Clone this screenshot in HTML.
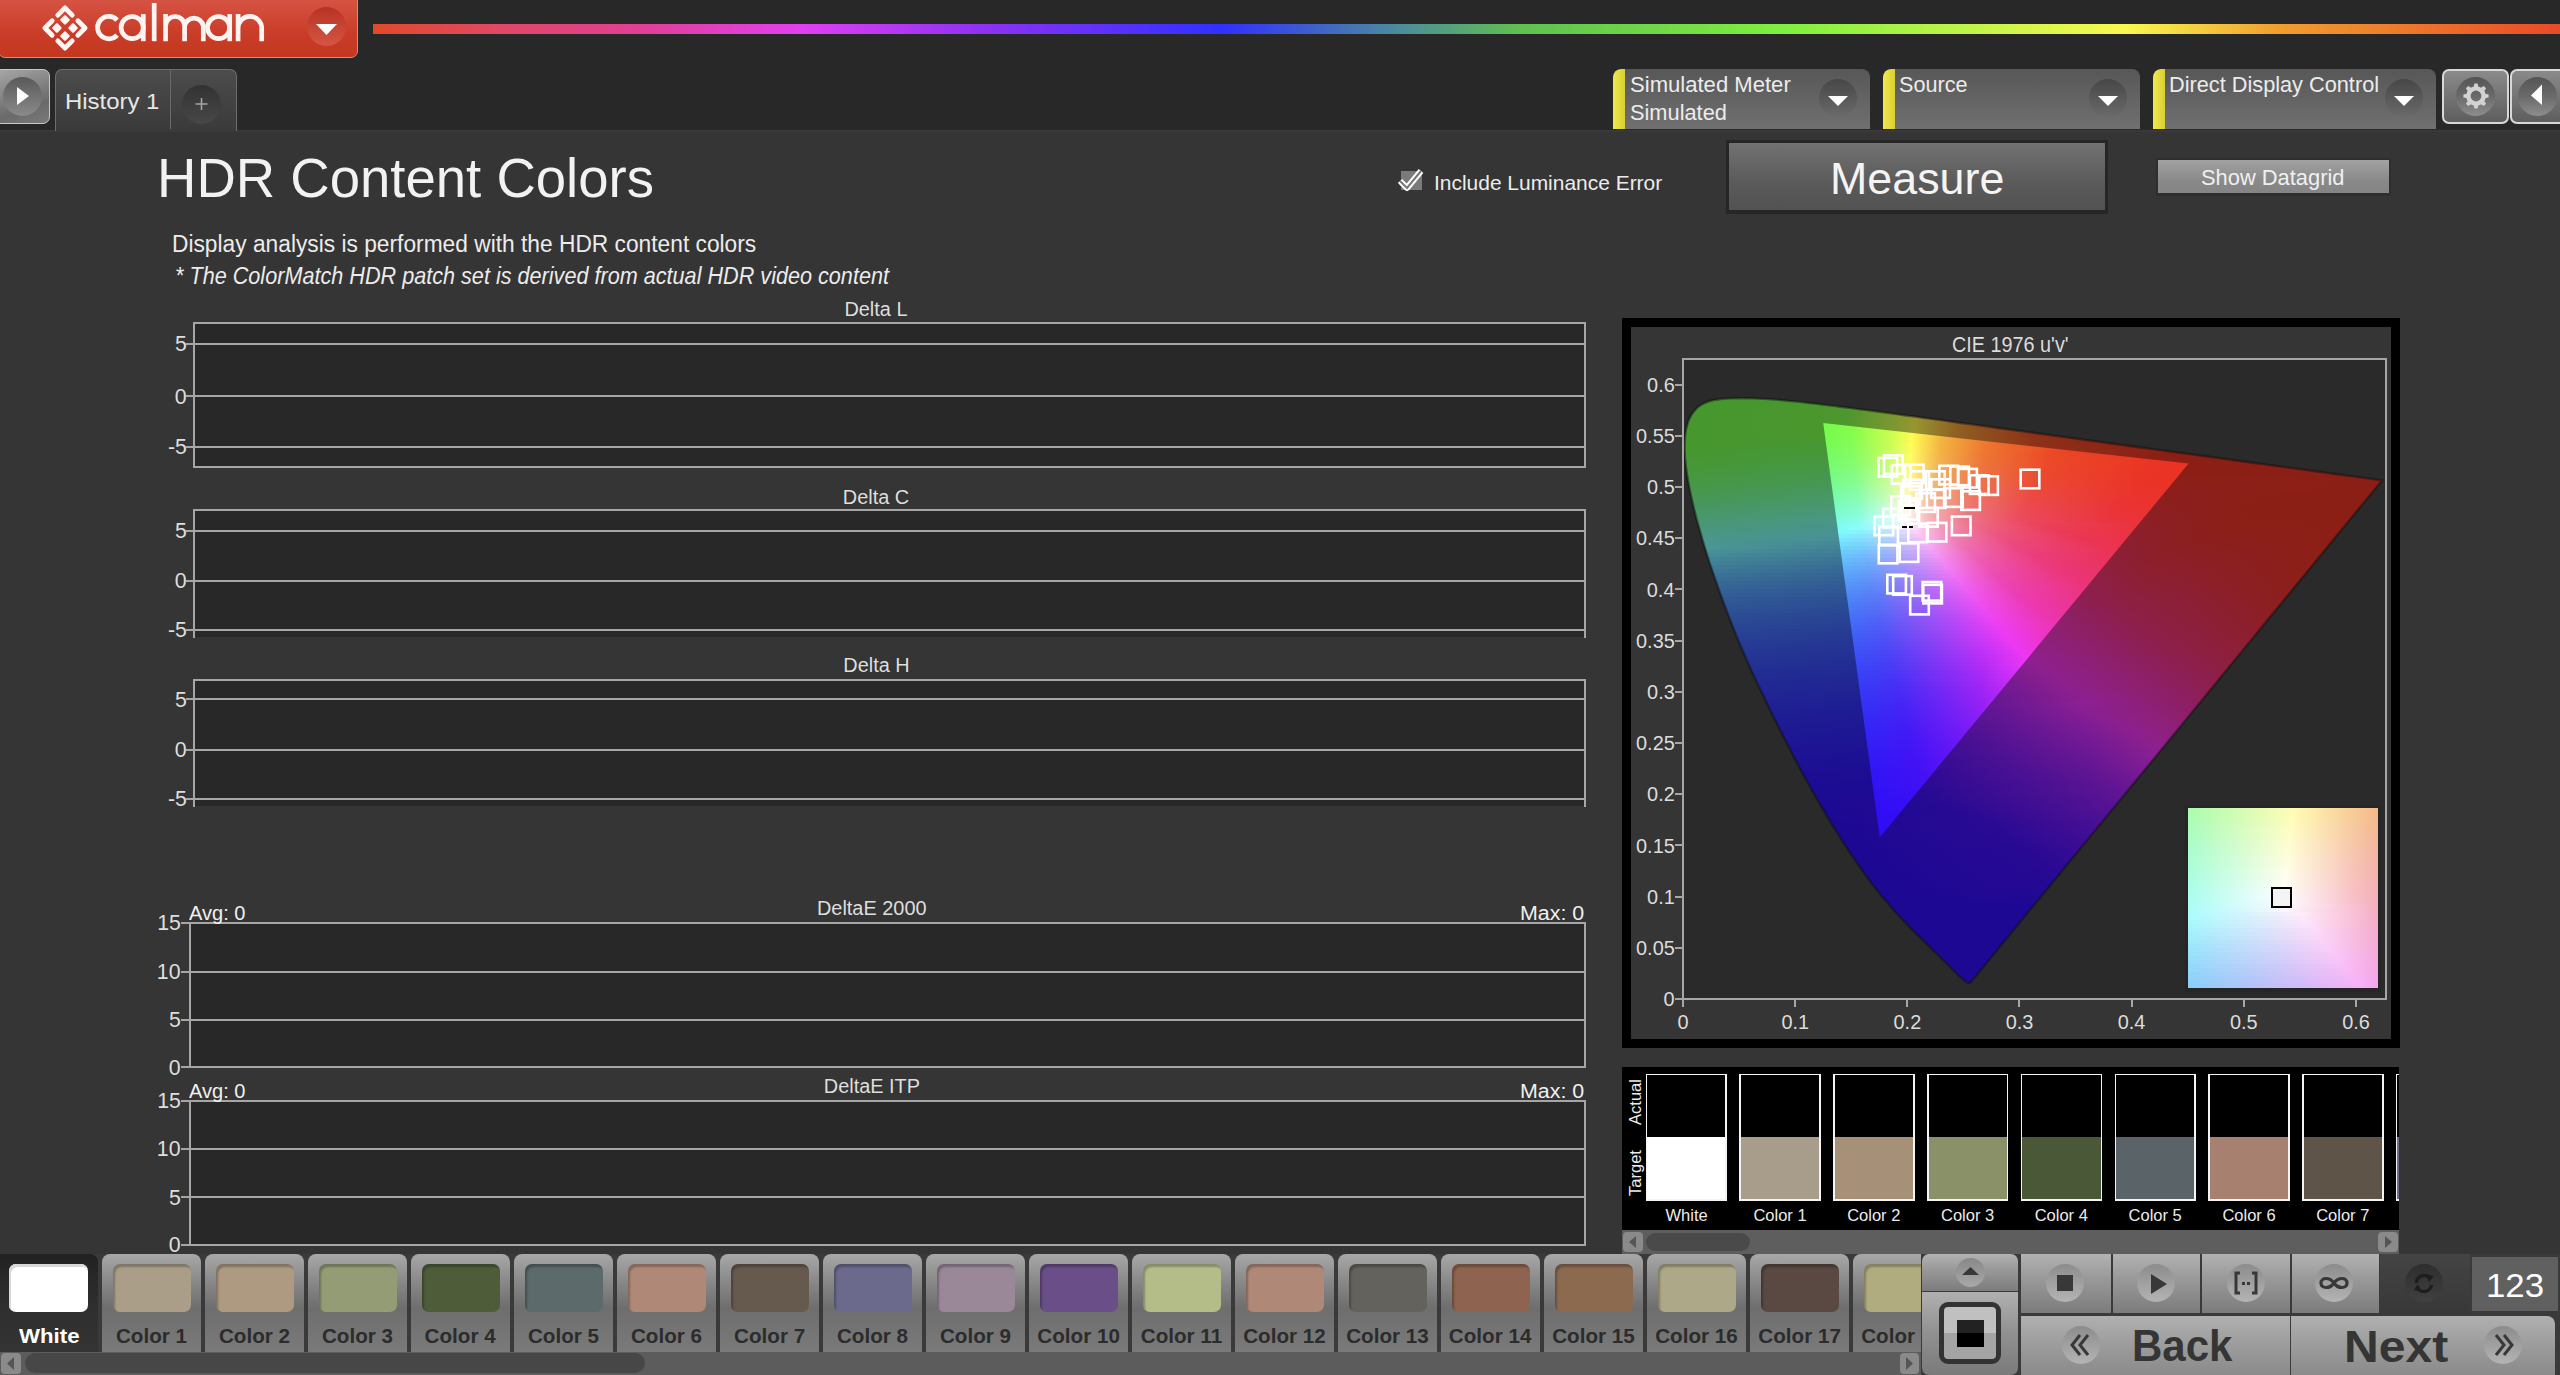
<!DOCTYPE html>
<html><head><meta charset="utf-8"><title>Calman HDR Content Colors</title>
<style>
html,body{margin:0;padding:0;width:2560px;height:1375px;overflow:hidden;background:#353535}
body{position:relative;font-family:"Liberation Sans",sans-serif}
</style></head><body>
<div style="position:absolute;left:0px;top:0px;width:2560px;height:130px;background:#282828"></div>
<div style="position:absolute;left:0px;top:130px;width:2560px;height:1245px;background:#353535"></div>
<div style="position:absolute;left:0px;top:130px;width:2560px;height:2px;background:#393939"></div>
<div style="position:absolute;left:-2px;top:-2px;width:360px;height:60px;border-radius:0 0 7px 7px;background:linear-gradient(#d65444,#c93c28 60%,#c4381f);border:1px solid #d88a80;box-sizing:border-box"></div>
<div style="position:absolute;left:307px;top:7px;width:39px;height:39px;border-radius:50%;background:linear-gradient(#b83222,#d45646)"></div>
<svg style="position:absolute;left:0;top:0" width="360" height="60"><polygon points="316,24 337,24 326.5,35" fill="#fff"/></svg>
<svg style="position:absolute;left:35px;top:-3px" width="60" height="62" viewBox="-30 -31 60 62">
<g transform="rotate(45)" fill="none" stroke="#fff6f4" stroke-width="4.8" stroke-linecap="round" stroke-linejoin="round">
<path d="M-4,-14.2 H-14.2 V-4"/><path d="M4,-14.2 H14.2 V-4"/><path d="M14.2,4 V14.2 H4"/><path d="M-4,14.2 H-14.2 V4"/>
</g>
<g transform="rotate(45)" fill="#fff6f4">
<rect x="-9.4" y="-9.4" width="7.4" height="7.4" rx="1.2"/><rect x="2" y="-9.4" width="7.4" height="7.4" rx="1.2"/>
<rect x="-9.4" y="2" width="7.4" height="7.4" rx="1.2"/><rect x="2" y="2" width="7.4" height="7.4" rx="1.2"/>
</g></svg>
<svg style="position:absolute;left:0;top:0" width="300" height="56"><g fill="none" stroke="#fff4f2" stroke-width="4.7">
<path d="M117.1,20.1 A11.2,11.2 0 1 0 117.1,35.1"/>
<circle cx="132.2" cy="27.6" r="11.1"/><path d="M143.3,14.1 V41.2"/>
<path d="M154.2,3 V41.2"/>
<path d="M165.6,14.1 V41.2 M165.6,26 A9.5,9.5 0 0 1 184.6,26 V41.2 M184.6,26 A9.5,9.5 0 0 1 203.3,26 V41.2"/>
<circle cx="218.6" cy="27.6" r="11.1"/><path d="M229.7,14.1 V41.2"/>
<path d="M238.1,14.1 V41.2 M238.1,28.2 A11.8,11.8 0 0 1 261.7,28.2 V41.2"/>
</g></svg>
<div style="position:absolute;left:373px;top:24px;width:2187px;height:10px;background:linear-gradient(90deg,#e04a2a 0px,#e04868 130px,#e04094 267px,#e040f0 428px,#9032f2 604px,#3030ff 848px,#4a88a0 1017px,#60c050 1148px,#80f040 1414px,#f8f850 1752px,#f0a030 1902px,#e84a28 2187px)"></div>
<div style="position:absolute;left:-6px;top:69px;width:56px;height:55px;border-radius:7px;border:1px solid #c8c8c8;box-sizing:border-box;background:linear-gradient(160deg,#a8a8a8,#6a6a6a 70%,#7a7a7a)"></div>
<div style="position:absolute;left:3px;top:77px;width:39px;height:39px;border-radius:50%;background:linear-gradient(#5a5a5a,#8a8a8a)"></div>
<svg style="position:absolute;left:0;top:60px" width="60" height="70"><polygon points="17,27 29,36 17,45" fill="#fff"/></svg>
<div style="position:absolute;left:55px;top:69px;width:182px;height:62px;border-radius:7px 7px 0 0;border:1px solid #6e6e6e;border-bottom:none;box-sizing:border-box;background:linear-gradient(#4c4c4c,#3a3a3a)"></div>
<div style="position:absolute;left:170px;top:70px;width:1px;height:59px;background:#6a6a6a"></div>
<div style="position:absolute;left:182px;top:85px;width:39px;height:39px;border-radius:50%;background:linear-gradient(#333,#474747)"></div>
<div style="position:absolute;left:65.13px;top:90.82px;font-size:22.19px;line-height:22.19px;font-weight:normal;font-style:normal;color:#e6e6e6;white-space:nowrap;transform:scaleX(1.0787);transform-origin:0 0;">History 1</div>
<svg style="position:absolute;left:190px;top:93px" width="24" height="24"><path d="M11.5,5 V17 M5.5,11 H17.5" stroke="#a4a4a4" stroke-width="1.6"/></svg>
<div style="position:absolute;left:1613px;top:69px;width:257px;height:60px;border-radius:8px 8px 0 0;background:linear-gradient(#575757,#707070);overflow:hidden">
<div style="position:absolute;left:0;top:0;width:12px;height:60px;background:linear-gradient(90deg,#f0e850,#d8d030);border-radius:8px 0 0 0"></div></div>
<div style="position:absolute;left:1819px;top:79px;width:38px;height:38px;border-radius:50%;background:linear-gradient(#474747,#6a6a6a)"></div>
<svg style="position:absolute;left:1826px;top:94px" width="24" height="14"><polygon points="2,2 22,2 12,12" fill="#fff"/></svg>
<div style="position:absolute;left:1630.31px;top:74.94px;font-size:21.34px;line-height:21.34px;font-weight:normal;font-style:normal;color:#ececec;white-space:nowrap;transform:scaleX(1.0351);transform-origin:0 0;">Simulated Meter</div>
<div style="position:absolute;left:1630.32px;top:102.94px;font-size:21.34px;line-height:21.34px;font-weight:normal;font-style:normal;color:#ececec;white-space:nowrap;transform:scaleX(1.0213);transform-origin:0 0;">Simulated</div>
<div style="position:absolute;left:1883px;top:69px;width:257px;height:60px;border-radius:8px 8px 0 0;background:linear-gradient(#575757,#707070);overflow:hidden">
<div style="position:absolute;left:0;top:0;width:12px;height:60px;background:linear-gradient(90deg,#f0e850,#d8d030);border-radius:8px 0 0 0"></div></div>
<div style="position:absolute;left:2089px;top:79px;width:38px;height:38px;border-radius:50%;background:linear-gradient(#474747,#6a6a6a)"></div>
<svg style="position:absolute;left:2096px;top:94px" width="24" height="14"><polygon points="2,2 22,2 12,12" fill="#fff"/></svg>
<div style="position:absolute;left:1899.32px;top:74.94px;font-size:21.34px;line-height:21.34px;font-weight:normal;font-style:normal;color:#ececec;white-space:nowrap;transform:scaleX(1.0140);transform-origin:0 0;">Source</div>
<div style="position:absolute;left:2153px;top:69px;width:283px;height:60px;border-radius:8px 8px 0 0;background:linear-gradient(#575757,#707070);overflow:hidden">
<div style="position:absolute;left:0;top:0;width:12px;height:60px;background:linear-gradient(90deg,#f0e850,#d8d030);border-radius:8px 0 0 0"></div></div>
<div style="position:absolute;left:2385px;top:79px;width:38px;height:38px;border-radius:50%;background:linear-gradient(#474747,#6a6a6a)"></div>
<svg style="position:absolute;left:2392px;top:94px" width="24" height="14"><polygon points="2,2 22,2 12,12" fill="#fff"/></svg>
<div style="position:absolute;left:2169.30px;top:74.94px;font-size:21.34px;line-height:21.34px;font-weight:normal;font-style:normal;color:#ececec;white-space:nowrap;transform:scaleX(1.0185);transform-origin:0 0;">Direct Display Control</div>
<div style="position:absolute;left:2442px;top:69px;width:67px;height:55px;border-radius:7px;border:2px solid #d8d8d8;box-sizing:border-box;background:linear-gradient(#8a8a8a,#5e5e5e)"></div>
<div style="position:absolute;left:2456px;top:77px;width:39px;height:39px;border-radius:50%;background:linear-gradient(#555,#6a6a6a 50%,#8e8e8e)"></div>
<svg style="position:absolute;left:2456px;top:76px" width="40" height="40" viewBox="-20 -20 40 40"><g fill="#d2d2d2"><path d="M-2.6,-8 L-1.6,-12.6 H1.6 L2.6,-8Z" transform="rotate(0)"/><path d="M-2.6,-8 L-1.6,-12.6 H1.6 L2.6,-8Z" transform="rotate(45)"/><path d="M-2.6,-8 L-1.6,-12.6 H1.6 L2.6,-8Z" transform="rotate(90)"/><path d="M-2.6,-8 L-1.6,-12.6 H1.6 L2.6,-8Z" transform="rotate(135)"/><path d="M-2.6,-8 L-1.6,-12.6 H1.6 L2.6,-8Z" transform="rotate(180)"/><path d="M-2.6,-8 L-1.6,-12.6 H1.6 L2.6,-8Z" transform="rotate(225)"/><path d="M-2.6,-8 L-1.6,-12.6 H1.6 L2.6,-8Z" transform="rotate(270)"/><path d="M-2.6,-8 L-1.6,-12.6 H1.6 L2.6,-8Z" transform="rotate(315)"/></g><circle r="7.6" fill="none" stroke="#d2d2d2" stroke-width="4.4"/></svg>
<div style="position:absolute;left:2510px;top:69px;width:60px;height:55px;border-radius:7px;border:2px solid #d8d8d8;box-sizing:border-box;background:linear-gradient(#8a8a8a,#5e5e5e)"></div>
<div style="position:absolute;left:2518px;top:77px;width:39px;height:39px;border-radius:50%;background:linear-gradient(#555,#6a6a6a 50%,#8e8e8e)"></div>
<svg style="position:absolute;left:2520px;top:80px" width="40" height="34"><polygon points="22,4.5 11,15.5 22,25" fill="#fff"/></svg>
<div style="position:absolute;left:156.74px;top:150.44px;font-size:56.19px;line-height:56.19px;font-weight:normal;font-style:normal;color:#f2f2f2;white-space:nowrap;transform:scaleX(0.9704);transform-origin:0 0;">HDR Content Colors</div>
<div style="position:absolute;left:171.82px;top:231.53px;font-size:24.18px;line-height:24.18px;font-weight:normal;font-style:normal;color:#ececec;white-space:nowrap;transform:scaleX(0.9413);transform-origin:0 0;">Display analysis is performed with the HDR content colors</div>
<div style="position:absolute;left:174.99px;top:263.53px;font-size:24.18px;line-height:24.18px;font-weight:normal;font-style:italic;color:#ececec;white-space:nowrap;transform:scaleX(0.8947);transform-origin:0 0;">* The ColorMatch HDR patch set is derived from actual HDR video content</div>
<div style="position:absolute;left:1401px;top:171px;width:21px;height:19px;background:#7a7a7a"></div>
<svg style="position:absolute;left:1390px;top:160px" width="40" height="40"><polyline points="10,21 17,28 31,11" fill="none" stroke="#fff" stroke-width="6" stroke-linejoin="round"/><polyline points="10,21 17,28 31,11" fill="none" stroke="#777" stroke-width="2"/></svg>
<div style="position:absolute;left:1433.86px;top:172.54px;font-size:20.63px;line-height:20.63px;font-weight:normal;font-style:normal;color:#ececec;white-space:nowrap;transform:scaleX(1.0157);transform-origin:0 0;">Include Luminance Error</div>
<div style="position:absolute;left:1726px;top:140px;width:382px;height:74px;background:#262626"></div>
<div style="position:absolute;left:1729px;top:143px;width:376px;height:67px;background:linear-gradient(#727272,#5a5a5a 60%,#525252)"></div>
<div style="position:absolute;left:1829.50px;top:156.97px;font-size:44.10px;line-height:44.10px;font-weight:normal;font-style:normal;color:#f4f4f4;white-space:nowrap;transform:scaleX(1.0160);transform-origin:0 0;">Measure</div>
<div style="position:absolute;left:2156px;top:158px;width:235px;height:38px;background:#2e2e2e"></div>
<div style="position:absolute;left:2158px;top:160px;width:231px;height:33px;background:linear-gradient(#a2a2a2,#8a8a8a 60%,#848484)"></div>
<div style="position:absolute;left:2201.32px;top:167.74px;font-size:21.34px;line-height:21.34px;font-weight:normal;font-style:normal;color:#f0f0f0;white-space:nowrap;transform:scaleX(1.0254);transform-origin:0 0;">Show Datagrid</div>
<div style="position:absolute;left:194px;top:323px;width:1391px;height:144px;background:#282828"></div>
<div style="position:absolute;left:193px;top:322.0px;width:1393px;height:2.0px;background:#a6a6a6"></div>
<div style="position:absolute;left:186px;top:343.0px;width:1400px;height:2.0px;background:#a6a6a6"></div>
<div style="position:absolute;left:175.00px;top:334.44px;font-size:21.34px;line-height:21.34px;font-weight:normal;font-style:normal;color:#dedede;white-space:nowrap;">5</div>
<div style="position:absolute;left:186px;top:395.3px;width:1400px;height:2.0px;background:#a6a6a6"></div>
<div style="position:absolute;left:174.66px;top:386.74px;font-size:21.34px;line-height:21.34px;font-weight:normal;font-style:normal;color:#dedede;white-space:nowrap;">0</div>
<div style="position:absolute;left:186px;top:445.6px;width:1400px;height:2.0px;background:#a6a6a6"></div>
<div style="position:absolute;left:167.89px;top:437.04px;font-size:21.34px;line-height:21.34px;font-weight:normal;font-style:normal;color:#dedede;white-space:nowrap;">-5</div>
<div style="position:absolute;left:193px;top:466.0px;width:1393px;height:2.0px;background:#a6a6a6"></div>
<div style="position:absolute;left:193.0px;top:322px;width:2.0px;height:146px;background:#a6a6a6"></div>
<div style="position:absolute;left:1584.0px;top:322px;width:2.0px;height:146px;background:#a6a6a6"></div>
<div style="position:absolute;left:844.42px;top:299.84px;font-size:19.91px;line-height:19.91px;font-weight:normal;font-style:normal;color:#dedede;white-space:nowrap;">Delta L</div>
<div style="position:absolute;left:194px;top:510px;width:1391px;height:127px;background:#282828"></div>
<div style="position:absolute;left:193px;top:509.0px;width:1393px;height:2.0px;background:#a6a6a6"></div>
<div style="position:absolute;left:186px;top:530.0px;width:1400px;height:2.0px;background:#a6a6a6"></div>
<div style="position:absolute;left:175.00px;top:521.44px;font-size:21.34px;line-height:21.34px;font-weight:normal;font-style:normal;color:#dedede;white-space:nowrap;">5</div>
<div style="position:absolute;left:186px;top:580.0px;width:1400px;height:2.0px;background:#a6a6a6"></div>
<div style="position:absolute;left:174.66px;top:571.44px;font-size:21.34px;line-height:21.34px;font-weight:normal;font-style:normal;color:#dedede;white-space:nowrap;">0</div>
<div style="position:absolute;left:186px;top:629.0px;width:1400px;height:2.0px;background:#a6a6a6"></div>
<div style="position:absolute;left:167.89px;top:620.44px;font-size:21.34px;line-height:21.34px;font-weight:normal;font-style:normal;color:#dedede;white-space:nowrap;">-5</div>
<div style="position:absolute;left:193.0px;top:509px;width:2.0px;height:129px;background:#a6a6a6"></div>
<div style="position:absolute;left:1584.0px;top:509px;width:2.0px;height:129px;background:#a6a6a6"></div>
<div style="position:absolute;left:842.86px;top:487.64px;font-size:19.91px;line-height:19.91px;font-weight:normal;font-style:normal;color:#dedede;white-space:nowrap;">Delta C</div>
<div style="position:absolute;left:194px;top:680px;width:1391px;height:126px;background:#282828"></div>
<div style="position:absolute;left:193px;top:679.0px;width:1393px;height:2.0px;background:#a6a6a6"></div>
<div style="position:absolute;left:186px;top:698.3px;width:1400px;height:2.0px;background:#a6a6a6"></div>
<div style="position:absolute;left:175.00px;top:689.74px;font-size:21.34px;line-height:21.34px;font-weight:normal;font-style:normal;color:#dedede;white-space:nowrap;">5</div>
<div style="position:absolute;left:186px;top:748.6px;width:1400px;height:2.0px;background:#a6a6a6"></div>
<div style="position:absolute;left:174.66px;top:740.04px;font-size:21.34px;line-height:21.34px;font-weight:normal;font-style:normal;color:#dedede;white-space:nowrap;">0</div>
<div style="position:absolute;left:186px;top:798.0px;width:1400px;height:2.0px;background:#a6a6a6"></div>
<div style="position:absolute;left:167.89px;top:789.44px;font-size:21.34px;line-height:21.34px;font-weight:normal;font-style:normal;color:#dedede;white-space:nowrap;">-5</div>
<div style="position:absolute;left:193.0px;top:679px;width:2.0px;height:128px;background:#a6a6a6"></div>
<div style="position:absolute;left:1584.0px;top:679px;width:2.0px;height:128px;background:#a6a6a6"></div>
<div style="position:absolute;left:843.33px;top:656.14px;font-size:19.91px;line-height:19.91px;font-weight:normal;font-style:normal;color:#dedede;white-space:nowrap;">Delta H</div>
<div style="position:absolute;left:189.5px;top:922.7px;width:1395.5px;height:144.5px;background:#282828"></div>
<div style="position:absolute;left:189px;top:921.7px;width:1397px;height:2.0px;background:#a6a6a6"></div>
<div style="position:absolute;left:181px;top:921.7px;width:1405px;height:2.0px;background:#a6a6a6"></div>
<div style="position:absolute;left:157.13px;top:913.14px;font-size:21.34px;line-height:21.34px;font-weight:normal;font-style:normal;color:#dedede;white-space:nowrap;">15</div>
<div style="position:absolute;left:181px;top:970.5px;width:1405px;height:2.0px;background:#a6a6a6"></div>
<div style="position:absolute;left:156.80px;top:961.94px;font-size:21.34px;line-height:21.34px;font-weight:normal;font-style:normal;color:#dedede;white-space:nowrap;">10</div>
<div style="position:absolute;left:181px;top:1019.0px;width:1405px;height:2.0px;background:#a6a6a6"></div>
<div style="position:absolute;left:169.00px;top:1010.44px;font-size:21.34px;line-height:21.34px;font-weight:normal;font-style:normal;color:#dedede;white-space:nowrap;">5</div>
<div style="position:absolute;left:181px;top:1066.2px;width:1405px;height:2.0px;background:#a6a6a6"></div>
<div style="position:absolute;left:168.66px;top:1057.64px;font-size:21.34px;line-height:21.34px;font-weight:normal;font-style:normal;color:#dedede;white-space:nowrap;">0</div>
<div style="position:absolute;left:188.5px;top:921.7px;width:2.0px;height:146.5px;background:#a6a6a6"></div>
<div style="position:absolute;left:1584.0px;top:921.7px;width:2.0px;height:146.5px;background:#a6a6a6"></div>
<div style="position:absolute;left:816.97px;top:899.14px;font-size:19.91px;line-height:19.91px;font-weight:normal;font-style:normal;color:#dedede;white-space:nowrap;">DeltaE 2000</div>
<div style="position:absolute;left:188.70px;top:903.74px;font-size:19.91px;line-height:19.91px;font-weight:normal;font-style:normal;color:#f0f0f0;white-space:nowrap;transform:scaleX(1.0072);transform-origin:0 0;">Avg: 0</div>
<div style="position:absolute;left:1520.13px;top:903.74px;font-size:19.91px;line-height:19.91px;font-weight:normal;font-style:normal;color:#f0f0f0;white-space:nowrap;transform:scaleX(1.0743);transform-origin:0 0;">Max: 0</div>
<div style="position:absolute;left:189.5px;top:1100.7px;width:1395.5px;height:144.0px;background:#282828"></div>
<div style="position:absolute;left:189px;top:1099.7px;width:1397px;height:2.0px;background:#a6a6a6"></div>
<div style="position:absolute;left:181px;top:1099.7px;width:1405px;height:2.0px;background:#a6a6a6"></div>
<div style="position:absolute;left:157.13px;top:1091.14px;font-size:21.34px;line-height:21.34px;font-weight:normal;font-style:normal;color:#dedede;white-space:nowrap;">15</div>
<div style="position:absolute;left:181px;top:1147.7px;width:1405px;height:2.0px;background:#a6a6a6"></div>
<div style="position:absolute;left:156.80px;top:1139.14px;font-size:21.34px;line-height:21.34px;font-weight:normal;font-style:normal;color:#dedede;white-space:nowrap;">10</div>
<div style="position:absolute;left:181px;top:1196.4px;width:1405px;height:2.0px;background:#a6a6a6"></div>
<div style="position:absolute;left:169.00px;top:1187.84px;font-size:21.34px;line-height:21.34px;font-weight:normal;font-style:normal;color:#dedede;white-space:nowrap;">5</div>
<div style="position:absolute;left:181px;top:1243.7px;width:1405px;height:2.0px;background:#a6a6a6"></div>
<div style="position:absolute;left:168.66px;top:1235.14px;font-size:21.34px;line-height:21.34px;font-weight:normal;font-style:normal;color:#dedede;white-space:nowrap;">0</div>
<div style="position:absolute;left:188.5px;top:1099.7px;width:2.0px;height:146.0px;background:#a6a6a6"></div>
<div style="position:absolute;left:1584.0px;top:1099.7px;width:2.0px;height:146.0px;background:#a6a6a6"></div>
<div style="position:absolute;left:823.80px;top:1077.14px;font-size:19.91px;line-height:19.91px;font-weight:normal;font-style:normal;color:#dedede;white-space:nowrap;">DeltaE ITP</div>
<div style="position:absolute;left:188.70px;top:1081.84px;font-size:19.91px;line-height:19.91px;font-weight:normal;font-style:normal;color:#f0f0f0;white-space:nowrap;transform:scaleX(1.0072);transform-origin:0 0;">Avg: 0</div>
<div style="position:absolute;left:1520.13px;top:1081.84px;font-size:19.91px;line-height:19.91px;font-weight:normal;font-style:normal;color:#f0f0f0;white-space:nowrap;transform:scaleX(1.0743);transform-origin:0 0;">Max: 0</div>
<div style="position:absolute;left:1622px;top:317.5px;width:777.5px;height:730.3px;background:#000"></div>
<div style="position:absolute;left:1631px;top:326.5px;width:759.8000000000002px;height:712.0px;background:#353535"></div>
<div style="position:absolute;left:1683px;top:358.5px;width:702.5999999999999px;height:640.5px;background:#2a2a2a"></div>
<div style="position:absolute;left:1952.42px;top:334.74px;font-size:21.34px;line-height:21.34px;font-weight:normal;font-style:normal;color:#dcdcdc;white-space:nowrap;transform:scaleX(0.9287);transform-origin:0 0;">CIE 1976 u'v'</div>
<svg style="position:absolute;left:0;top:0" width="2560" height="1375"><defs><clipPath id="hs"><path d="M1971.0,982.0 L1971.0,982.0 L1970.9,982.0 L1970.9,982.0 L1970.9,982.0 L1970.8,982.0 L1970.8,982.1 L1970.7,982.1 L1970.7,982.2 L1970.6,982.3 L1970.6,982.3 L1970.5,982.4 L1970.4,982.4 L1970.4,982.3 L1970.3,982.3 L1970.2,982.3 L1970.1,982.4 L1970.0,982.5 L1970.0,982.6 L1969.9,982.6 L1969.8,982.7 L1969.7,982.7 L1969.6,982.7 L1969.5,982.7 L1969.3,982.7 L1969.2,982.7 L1969.1,982.7 L1968.9,982.7 L1968.8,982.7 L1968.6,982.7 L1968.5,982.7 L1968.3,982.7 L1968.1,982.7 L1968.0,982.8 L1967.8,982.8 L1967.5,982.7 L1967.3,982.6 L1967.0,982.4 L1966.6,982.2 L1966.3,982.0 L1965.9,981.7 L1965.4,981.4 L1964.8,980.9 L1964.2,980.5 L1963.6,980.0 L1962.9,979.4 L1962.3,978.8 L1961.5,978.2 L1960.8,977.5 L1959.9,976.7 L1959.0,975.8 L1958.0,974.9 L1957.0,973.9 L1955.8,972.8 L1954.6,971.6 L1953.4,970.4 L1952.0,969.1 L1950.7,967.7 L1949.3,966.2 L1947.8,964.7 L1946.2,963.1 L1944.6,961.5 L1942.9,959.8 L1941.1,958.1 L1939.2,956.2 L1937.2,954.3 L1935.0,952.2 L1932.7,950.0 L1930.4,947.7 L1927.9,945.3 L1925.3,942.7 L1922.7,940.1 L1919.9,937.5 L1917.1,934.7 L1914.1,931.7 L1911.0,928.6 L1907.8,925.2 L1904.4,921.7 L1900.9,918.0 L1897.3,914.1 L1893.5,909.8 L1889.7,905.4 L1885.7,900.8 L1881.6,895.9 L1877.2,890.5 L1872.5,884.4 L1867.4,877.5 L1862.1,870.1 L1856.4,862.1 L1850.6,853.6 L1844.6,844.4 L1838.4,834.6 L1831.9,824.2 L1825.3,813.3 L1818.5,801.7 L1811.6,789.7 L1804.6,777.1 L1797.5,763.7 L1790.2,749.9 L1783.0,735.8 L1775.9,721.7 L1768.8,707.3 L1761.7,692.5 L1754.6,677.6 L1747.8,662.7 L1741.5,648.1 L1735.5,633.6 L1729.8,619.1 L1724.4,604.8 L1719.3,590.8 L1714.6,577.4 L1710.2,564.6 L1706.2,552.1 L1702.6,540.1 L1699.3,528.6 L1696.3,517.9 L1693.8,507.8 L1691.6,498.4 L1689.7,489.6 L1688.2,481.4 L1686.9,473.6 L1685.9,466.4 L1685.2,459.9 L1684.8,453.8 L1684.6,448.1 L1684.6,442.8 L1684.9,437.8 L1685.4,433.3 L1686.1,429.1 L1687.1,425.2 L1688.2,421.6 L1689.5,418.3 L1691.1,415.4 L1692.9,412.7 L1694.8,410.3 L1696.8,408.2 L1698.9,406.3 L1701.3,404.8 L1703.7,403.4 L1706.3,402.3 L1708.9,401.3 L1711.6,400.5 L1714.5,399.9 L1717.4,399.5 L1720.4,399.1 L1723.4,398.8 L1726.4,398.5 L1729.6,398.4 L1732.8,398.3 L1736.0,398.2 L1739.1,398.2 L1742.3,398.1 L1745.5,398.2 L1748.7,398.2 L1751.9,398.3 L1755.2,398.4 L1758.4,398.5 L1761.7,398.7 L1765.0,398.9 L1768.4,399.1 L1771.9,399.3 L1775.3,399.6 L1778.9,399.9 L1782.5,400.2 L1786.1,400.5 L1789.8,400.9 L1793.6,401.2 L1797.5,401.6 L1801.4,402.1 L1805.3,402.5 L1809.4,403.0 L1813.5,403.4 L1817.7,403.9 L1822.0,404.5 L1826.4,405.0 L1830.9,405.5 L1835.5,406.1 L1840.1,406.7 L1844.9,407.3 L1849.7,407.9 L1854.7,408.6 L1859.8,409.2 L1864.9,409.9 L1870.2,410.6 L1875.6,411.3 L1881.0,412.1 L1886.6,412.8 L1892.4,413.6 L1898.2,414.4 L1904.1,415.2 L1910.2,416.0 L1916.4,416.8 L1922.7,417.7 L1929.1,418.5 L1935.6,419.4 L1942.3,420.3 L1949.0,421.3 L1955.9,422.2 L1962.9,423.2 L1970.0,424.1 L1977.2,425.1 L1984.5,426.1 L1992.0,427.1 L1999.5,428.2 L2007.2,429.2 L2014.9,430.3 L2022.7,431.3 L2030.7,432.4 L2038.7,433.5 L2046.7,434.6 L2054.8,435.7 L2063.0,436.8 L2071.2,437.9 L2079.4,439.1 L2087.6,440.2 L2095.8,441.3 L2103.8,442.4 L2111.8,443.5 L2119.7,444.6 L2127.6,445.7 L2135.5,446.7 L2143.4,447.8 L2151.2,448.9 L2159.0,449.9 L2166.7,451.0 L2174.2,452.0 L2181.5,453.0 L2188.6,453.9 L2195.6,454.9 L2202.5,455.8 L2209.2,456.7 L2215.7,457.6 L2222.1,458.5 L2228.3,459.3 L2234.3,460.2 L2240.1,461.0 L2245.8,461.7 L2251.2,462.5 L2256.5,463.2 L2261.5,463.9 L2266.5,464.6 L2271.2,465.2 L2275.8,465.8 L2280.2,466.4 L2284.4,467.0 L2288.5,467.6 L2292.5,468.1 L2296.3,468.6 L2300.0,469.1 L2303.6,469.6 L2307.1,470.1 L2310.5,470.6 L2313.9,471.0 L2317.1,471.5 L2320.2,471.9 L2323.2,472.3 L2326.2,472.7 L2329.0,473.1 L2331.7,473.5 L2334.4,473.8 L2336.9,474.2 L2339.3,474.5 L2341.6,474.8 L2343.8,475.1 L2345.9,475.4 L2347.9,475.7 L2349.8,475.9 L2351.6,476.2 L2353.3,476.4 L2354.9,476.6 L2356.5,476.8 L2357.9,477.0 L2359.3,477.2 L2360.7,477.4 L2361.9,477.6 L2363.1,477.7 L2364.3,477.9 L2365.3,478.0 L2366.3,478.2 L2367.2,478.3 L2368.1,478.4 L2368.9,478.5 L2369.6,478.6 L2370.2,478.7 L2370.8,478.8 L2371.4,478.9 L2371.9,479.0 L2372.5,479.0 L2373.0,479.1 L2373.5,479.2 L2374.0,479.2 L2374.5,479.3 L2374.9,479.4 L2375.3,479.4 L2375.7,479.5 L2376.1,479.5 L2376.5,479.6 L2377.0,479.6 L2377.4,479.7 L2377.8,479.8 L2378.2,479.8 L2378.6,479.9 L2379.0,479.9 L2379.4,480.0 L2379.7,480.0 L2380.0,480.1 L2380.3,480.1 L2380.6,480.1 L2380.8,480.2 L2381.0,480.2 L2381.2,480.2 L2381.4,480.3 L2381.5,480.3 L2381.6,480.3 L2381.7,480.3 L2381.8,480.3 L2381.9,480.3 L2382.0,480.3 L2382.1,480.3 L2382.1,480.3 L2382.1,480.4Z"/></clipPath><clipPath id="tr"><path d="M2188.5,463.6 L1823.2,423.0 L1879.8,837.3Z"/></clipPath><linearGradient id="o0" gradientUnits="userSpaceOnUse" x1="1709" x2="1793"><stop offset="0.006" stop-color="#46972e"/><stop offset="0.994" stop-color="#46972e"/></linearGradient><linearGradient id="o1" gradientUnits="userSpaceOnUse" x1="1700" x2="1828"><stop offset="0.004" stop-color="#46972e"/><stop offset="0.996" stop-color="#46972e"/></linearGradient><linearGradient id="o2" gradientUnits="userSpaceOnUse" x1="1694" x2="1860"><stop offset="0.003" stop-color="#46972e"/><stop offset="0.925" stop-color="#4c972e"/><stop offset="0.997" stop-color="#54972e"/></linearGradient><linearGradient id="o3" gradientUnits="userSpaceOnUse" x1="1692" x2="1890"><stop offset="0.003" stop-color="#46972e"/><stop offset="0.780" stop-color="#4c972e"/><stop offset="0.997" stop-color="#749830"/></linearGradient><linearGradient id="o4" gradientUnits="userSpaceOnUse" x1="1689" x2="1920"><stop offset="0.002" stop-color="#46972e"/><stop offset="0.682" stop-color="#4c972e"/><stop offset="0.885" stop-color="#7a9830"/><stop offset="0.985" stop-color="#989531"/><stop offset="0.998" stop-color="#978f30"/></linearGradient><linearGradient id="o5" gradientUnits="userSpaceOnUse" x1="1687" x2="1949"><stop offset="0.002" stop-color="#46972e"/><stop offset="0.605" stop-color="#4c972e"/><stop offset="0.784" stop-color="#7a9830"/><stop offset="0.876" stop-color="#989431"/><stop offset="0.998" stop-color="#926824"/></linearGradient><linearGradient id="o6" gradientUnits="userSpaceOnUse" x1="1686" x2="1978"><stop offset="0.002" stop-color="#46972e"/><stop offset="0.546" stop-color="#4c972e"/><stop offset="0.707" stop-color="#7a9830"/><stop offset="0.786" stop-color="#989431"/><stop offset="0.933" stop-color="#905e22"/><stop offset="0.998" stop-color="#8f4f1e"/></linearGradient><linearGradient id="o7" gradientUnits="userSpaceOnUse" x1="1685" x2="2008"><stop offset="0.002" stop-color="#46972e"/><stop offset="0.494" stop-color="#4c972e"/><stop offset="0.639" stop-color="#7a9830"/><stop offset="0.711" stop-color="#989531"/><stop offset="0.844" stop-color="#905e22"/><stop offset="0.998" stop-color="#8e3d1a"/></linearGradient><linearGradient id="o8" gradientUnits="userSpaceOnUse" x1="1684" x2="2037"><stop offset="0.001" stop-color="#46972e"/><stop offset="0.452" stop-color="#4b972e"/><stop offset="0.585" stop-color="#799830"/><stop offset="0.653" stop-color="#989431"/><stop offset="0.775" stop-color="#905e22"/><stop offset="0.987" stop-color="#8d3318"/><stop offset="0.999" stop-color="#8d3218"/></linearGradient><linearGradient id="o9" gradientUnits="userSpaceOnUse" x1="1684" x2="2066"><stop offset="0.001" stop-color="#46972e"/><stop offset="0.415" stop-color="#4b972e"/><stop offset="0.538" stop-color="#789830"/><stop offset="0.601" stop-color="#989531"/><stop offset="0.713" stop-color="#905e22"/><stop offset="0.910" stop-color="#8d3318"/><stop offset="0.999" stop-color="#8d2a17"/></linearGradient><linearGradient id="o10" gradientUnits="userSpaceOnUse" x1="1683" x2="2096"><stop offset="0.001" stop-color="#46972e"/><stop offset="0.384" stop-color="#4b972e"/><stop offset="0.495" stop-color="#769830"/><stop offset="0.558" stop-color="#989431"/><stop offset="0.662" stop-color="#905e22"/><stop offset="0.844" stop-color="#8d3318"/><stop offset="0.999" stop-color="#8d2416"/></linearGradient><linearGradient id="o11" gradientUnits="userSpaceOnUse" x1="1683" x2="2125"><stop offset="0.001" stop-color="#46972e"/><stop offset="0.365" stop-color="#469734"/><stop offset="0.374" stop-color="#4f972e"/><stop offset="0.485" stop-color="#859831"/><stop offset="0.521" stop-color="#989331"/><stop offset="0.621" stop-color="#905c21"/><stop offset="0.793" stop-color="#8d3218"/><stop offset="0.999" stop-color="#8c2115"/></linearGradient><linearGradient id="o12" gradientUnits="userSpaceOnUse" x1="1683" x2="2154"><stop offset="0.001" stop-color="#46972e"/><stop offset="0.354" stop-color="#469737"/><stop offset="0.358" stop-color="#52972e"/><stop offset="0.464" stop-color="#8c9932"/><stop offset="0.489" stop-color="#989231"/><stop offset="0.583" stop-color="#905c21"/><stop offset="0.744" stop-color="#8d3218"/><stop offset="0.999" stop-color="#8c1f15"/></linearGradient><linearGradient id="o13" gradientUnits="userSpaceOnUse" x1="1683" x2="2184"><stop offset="0.001" stop-color="#469730"/><stop offset="0.340" stop-color="#46973a"/><stop offset="0.342" stop-color="#54972e"/><stop offset="0.446" stop-color="#949932"/><stop offset="0.554" stop-color="#905920"/><stop offset="0.712" stop-color="#8d3018"/><stop offset="0.985" stop-color="#8c1f15"/><stop offset="0.999" stop-color="#8c1f15"/></linearGradient><linearGradient id="o14" gradientUnits="userSpaceOnUse" x1="1683" x2="2213"><stop offset="0.001" stop-color="#469731"/><stop offset="0.329" stop-color="#46973d"/><stop offset="0.331" stop-color="#58972e"/><stop offset="0.431" stop-color="#989431"/><stop offset="0.512" stop-color="#905d22"/><stop offset="0.654" stop-color="#8d3318"/><stop offset="0.895" stop-color="#8c1f15"/><stop offset="0.999" stop-color="#8c1f15"/></linearGradient><linearGradient id="o15" gradientUnits="userSpaceOnUse" x1="1684" x2="2242"><stop offset="0.001" stop-color="#469733"/><stop offset="0.320" stop-color="#479741"/><stop offset="0.322" stop-color="#5e972f"/><stop offset="0.406" stop-color="#989531"/><stop offset="0.483" stop-color="#905e22"/><stop offset="0.617" stop-color="#8d3318"/><stop offset="0.847" stop-color="#8c1f15"/><stop offset="0.999" stop-color="#8c1f15"/></linearGradient><linearGradient id="o16" gradientUnits="userSpaceOnUse" x1="1684" x2="2272"><stop offset="0.001" stop-color="#469735"/><stop offset="0.310" stop-color="#479745"/><stop offset="0.312" stop-color="#62972f"/><stop offset="0.385" stop-color="#989431"/><stop offset="0.460" stop-color="#905c21"/><stop offset="0.589" stop-color="#8d3218"/><stop offset="0.810" stop-color="#8c1f15"/><stop offset="0.999" stop-color="#8c1f15"/></linearGradient><linearGradient id="o17" gradientUnits="userSpaceOnUse" x1="1684" x2="2301"><stop offset="0.001" stop-color="#469738"/><stop offset="0.304" stop-color="#47974a"/><stop offset="0.306" stop-color="#68972f"/><stop offset="0.365" stop-color="#989531"/><stop offset="0.435" stop-color="#905e22"/><stop offset="0.557" stop-color="#8d3318"/><stop offset="0.764" stop-color="#8c1f15"/><stop offset="0.999" stop-color="#8c1f15"/></linearGradient><linearGradient id="o18" gradientUnits="userSpaceOnUse" x1="1685" x2="2330"><stop offset="0.001" stop-color="#46973b"/><stop offset="0.295" stop-color="#47974e"/><stop offset="0.297" stop-color="#6e9830"/><stop offset="0.348" stop-color="#989431"/><stop offset="0.416" stop-color="#905c21"/><stop offset="0.534" stop-color="#8d3218"/><stop offset="0.736" stop-color="#8c1f15"/><stop offset="0.999" stop-color="#8c1f15"/></linearGradient><linearGradient id="o19" gradientUnits="userSpaceOnUse" x1="1685" x2="2360"><stop offset="0.001" stop-color="#46973e"/><stop offset="0.288" stop-color="#479753"/><stop offset="0.290" stop-color="#749830"/><stop offset="0.331" stop-color="#989531"/><stop offset="0.395" stop-color="#905e22"/><stop offset="0.506" stop-color="#8d3318"/><stop offset="0.696" stop-color="#8c1f15"/><stop offset="0.999" stop-color="#8c1f15"/></linearGradient><linearGradient id="o20" gradientUnits="userSpaceOnUse" x1="1686" x2="2384"><stop offset="0.001" stop-color="#479741"/><stop offset="0.284" stop-color="#479758"/><stop offset="0.286" stop-color="#7b9830"/><stop offset="0.319" stop-color="#989431"/><stop offset="0.382" stop-color="#905c21"/><stop offset="0.491" stop-color="#8d3218"/><stop offset="0.680" stop-color="#8c1f17"/><stop offset="0.999" stop-color="#8c1f15"/></linearGradient><linearGradient id="o21" gradientUnits="userSpaceOnUse" x1="1686" x2="2384"><stop offset="0.001" stop-color="#479745"/><stop offset="0.290" stop-color="#48975d"/><stop offset="0.292" stop-color="#819831"/><stop offset="0.317" stop-color="#989431"/><stop offset="0.379" stop-color="#905e22"/><stop offset="0.486" stop-color="#8d3318"/><stop offset="0.674" stop-color="#8c1f18"/><stop offset="0.999" stop-color="#8c1f15"/></linearGradient><linearGradient id="o22" gradientUnits="userSpaceOnUse" x1="1687" x2="2380"><stop offset="0.001" stop-color="#479749"/><stop offset="0.297" stop-color="#489762"/><stop offset="0.298" stop-color="#889831"/><stop offset="0.318" stop-color="#989331"/><stop offset="0.382" stop-color="#905c21"/><stop offset="0.491" stop-color="#8d3218"/><stop offset="0.636" stop-color="#8c2015"/><stop offset="0.640" stop-color="#8c1f1c"/><stop offset="0.999" stop-color="#8c1f15"/></linearGradient><linearGradient id="o23" gradientUnits="userSpaceOnUse" x1="1688" x2="2377"><stop offset="0.001" stop-color="#47974d"/><stop offset="0.304" stop-color="#489768"/><stop offset="0.306" stop-color="#909932"/><stop offset="0.321" stop-color="#978f30"/><stop offset="0.387" stop-color="#905920"/><stop offset="0.501" stop-color="#8d3018"/><stop offset="0.623" stop-color="#8c2115"/><stop offset="0.626" stop-color="#8c1f1e"/><stop offset="0.928" stop-color="#8c1f15"/><stop offset="0.999" stop-color="#8c1f15"/></linearGradient><linearGradient id="o24" gradientUnits="userSpaceOnUse" x1="1689" x2="2374"><stop offset="0.001" stop-color="#479751"/><stop offset="0.310" stop-color="#48976e"/><stop offset="0.312" stop-color="#979933"/><stop offset="0.379" stop-color="#905e22"/><stop offset="0.488" stop-color="#8d3318"/><stop offset="0.609" stop-color="#8c2216"/><stop offset="0.611" stop-color="#8c1f21"/><stop offset="0.868" stop-color="#8c1f15"/><stop offset="0.999" stop-color="#8c1f15"/></linearGradient><linearGradient id="o25" gradientUnits="userSpaceOnUse" x1="1690" x2="2370"><stop offset="0.001" stop-color="#479756"/><stop offset="0.318" stop-color="#499774"/><stop offset="0.320" stop-color="#989130"/><stop offset="0.386" stop-color="#905a21"/><stop offset="0.501" stop-color="#8d3118"/><stop offset="0.598" stop-color="#8d2316"/><stop offset="0.599" stop-color="#8c1f24"/><stop offset="0.848" stop-color="#8c1f15"/><stop offset="0.999" stop-color="#8c1f15"/></linearGradient><linearGradient id="o26" gradientUnits="userSpaceOnUse" x1="1691" x2="2367"><stop offset="0.001" stop-color="#47975a"/><stop offset="0.325" stop-color="#499779"/><stop offset="0.326" stop-color="#96892e"/><stop offset="0.397" stop-color="#90541f"/><stop offset="0.520" stop-color="#8d2d17"/><stop offset="0.585" stop-color="#8d2416"/><stop offset="0.587" stop-color="#8c1f28"/><stop offset="0.837" stop-color="#8c1f15"/><stop offset="0.999" stop-color="#8c1f15"/></linearGradient><linearGradient id="o27" gradientUnits="userSpaceOnUse" x1="1692" x2="2364"><stop offset="0.001" stop-color="#48975f"/><stop offset="0.331" stop-color="#49977f"/><stop offset="0.333" stop-color="#95822c"/><stop offset="0.408" stop-color="#8f4f1e"/><stop offset="0.541" stop-color="#8d2a17"/><stop offset="0.572" stop-color="#8d2616"/><stop offset="0.574" stop-color="#8c1f2b"/><stop offset="0.830" stop-color="#8c1f15"/><stop offset="0.999" stop-color="#8c1f15"/></linearGradient><linearGradient id="o28" gradientUnits="userSpaceOnUse" x1="1692" x2="2361"><stop offset="0.001" stop-color="#489764"/><stop offset="0.340" stop-color="#4a9786"/><stop offset="0.342" stop-color="#947a29"/><stop offset="0.424" stop-color="#8f481c"/><stop offset="0.558" stop-color="#8d2716"/><stop offset="0.560" stop-color="#8d1f2f"/><stop offset="0.824" stop-color="#8c1f15"/><stop offset="0.999" stop-color="#8c1f15"/></linearGradient><linearGradient id="o29" gradientUnits="userSpaceOnUse" x1="1693" x2="2357"><stop offset="0.001" stop-color="#489769"/><stop offset="0.347" stop-color="#4a978c"/><stop offset="0.349" stop-color="#937428"/><stop offset="0.438" stop-color="#8e441b"/><stop offset="0.546" stop-color="#8d2917"/><stop offset="0.547" stop-color="#8d1f33"/><stop offset="0.823" stop-color="#8c1f16"/><stop offset="0.999" stop-color="#8c1f15"/></linearGradient><linearGradient id="o30" gradientUnits="userSpaceOnUse" x1="1694" x2="2354"><stop offset="0.001" stop-color="#48976e"/><stop offset="0.355" stop-color="#4b9793"/><stop offset="0.357" stop-color="#926e26"/><stop offset="0.452" stop-color="#8e3f1a"/><stop offset="0.533" stop-color="#8d2c17"/><stop offset="0.534" stop-color="#8d1f37"/><stop offset="0.819" stop-color="#8c1f16"/><stop offset="0.999" stop-color="#8c1f15"/></linearGradient><linearGradient id="o31" gradientUnits="userSpaceOnUse" x1="1695" x2="2351"><stop offset="0.001" stop-color="#499773"/><stop offset="0.362" stop-color="#4a9598"/><stop offset="0.364" stop-color="#926925"/><stop offset="0.464" stop-color="#8e3b1a"/><stop offset="0.518" stop-color="#8d2e17"/><stop offset="0.519" stop-color="#8d1f3c"/><stop offset="0.813" stop-color="#8c1f17"/><stop offset="0.999" stop-color="#8c1f15"/></linearGradient><linearGradient id="o32" gradientUnits="userSpaceOnUse" x1="1697" x2="2348"><stop offset="0.001" stop-color="#499779"/><stop offset="0.342" stop-color="#489197"/><stop offset="0.368" stop-color="#478e97"/><stop offset="0.369" stop-color="#916423"/><stop offset="0.477" stop-color="#8d3819"/><stop offset="0.503" stop-color="#8d3118"/><stop offset="0.505" stop-color="#8d1f41"/><stop offset="0.809" stop-color="#8c1f18"/><stop offset="0.999" stop-color="#8c1f15"/></linearGradient><linearGradient id="o33" gradientUnits="userSpaceOnUse" x1="1698" x2="2344"><stop offset="0.001" stop-color="#49977f"/><stop offset="0.290" stop-color="#489197"/><stop offset="0.377" stop-color="#448897"/><stop offset="0.378" stop-color="#915f22"/><stop offset="0.490" stop-color="#8d3518"/><stop offset="0.491" stop-color="#8d1f45"/><stop offset="0.804" stop-color="#8c1f19"/><stop offset="0.999" stop-color="#8c1f15"/></linearGradient><linearGradient id="o34" gradientUnits="userSpaceOnUse" x1="1699" x2="2341"><stop offset="0.001" stop-color="#4a9784"/><stop offset="0.241" stop-color="#489197"/><stop offset="0.384" stop-color="#428296"/><stop offset="0.386" stop-color="#905b21"/><stop offset="0.474" stop-color="#8d3919"/><stop offset="0.476" stop-color="#8d1f4b"/><stop offset="0.795" stop-color="#8c1f1b"/><stop offset="0.999" stop-color="#8c1f15"/></linearGradient><linearGradient id="o35" gradientUnits="userSpaceOnUse" x1="1700" x2="2338"><stop offset="0.001" stop-color="#4a978a"/><stop offset="0.194" stop-color="#489097"/><stop offset="0.393" stop-color="#3f7c96"/><stop offset="0.394" stop-color="#905720"/><stop offset="0.460" stop-color="#8e3d1a"/><stop offset="0.462" stop-color="#8d1f50"/><stop offset="0.784" stop-color="#8c1f1d"/><stop offset="0.999" stop-color="#8c1f15"/></linearGradient><linearGradient id="o36" gradientUnits="userSpaceOnUse" x1="1701" x2="2334"><stop offset="0.001" stop-color="#4a9790"/><stop offset="0.182" stop-color="#468b97"/><stop offset="0.400" stop-color="#3d7796"/><stop offset="0.402" stop-color="#8f531f"/><stop offset="0.446" stop-color="#8e421b"/><stop offset="0.448" stop-color="#8d1f56"/><stop offset="0.773" stop-color="#8c1f1f"/><stop offset="0.999" stop-color="#8c1f15"/></linearGradient><linearGradient id="o37" gradientUnits="userSpaceOnUse" x1="1703" x2="2331"><stop offset="0.001" stop-color="#4b9796"/><stop offset="0.407" stop-color="#3b7296"/><stop offset="0.408" stop-color="#8f501e"/><stop offset="0.429" stop-color="#8e471c"/><stop offset="0.431" stop-color="#8d1f5c"/><stop offset="0.756" stop-color="#8c1f22"/><stop offset="0.999" stop-color="#8c1f15"/></linearGradient><linearGradient id="o38" gradientUnits="userSpaceOnUse" x1="1704" x2="2328"><stop offset="0.001" stop-color="#499297"/><stop offset="0.416" stop-color="#396d95"/><stop offset="0.417" stop-color="#8d1f62"/><stop offset="0.740" stop-color="#8c1f26"/><stop offset="0.999" stop-color="#8c1f15"/></linearGradient><linearGradient id="o39" gradientUnits="userSpaceOnUse" x1="1705" x2="2325"><stop offset="0.001" stop-color="#468c97"/><stop offset="0.414" stop-color="#376995"/><stop offset="0.415" stop-color="#8d1f66"/><stop offset="0.736" stop-color="#8c1f28"/><stop offset="0.999" stop-color="#8c1f15"/></linearGradient><linearGradient id="o40" gradientUnits="userSpaceOnUse" x1="1706" x2="2321"><stop offset="0.001" stop-color="#438697"/><stop offset="0.414" stop-color="#356695"/><stop offset="0.415" stop-color="#8d2069"/><stop offset="0.736" stop-color="#8c1f2a"/><stop offset="0.999" stop-color="#8c1f15"/></linearGradient><linearGradient id="o41" gradientUnits="userSpaceOnUse" x1="1708" x2="2318"><stop offset="0.001" stop-color="#418196"/><stop offset="0.412" stop-color="#346295"/><stop offset="0.414" stop-color="#8d206c"/><stop offset="0.732" stop-color="#8c1f2c"/><stop offset="0.999" stop-color="#8c1f15"/></linearGradient><linearGradient id="o42" gradientUnits="userSpaceOnUse" x1="1709" x2="2315"><stop offset="0.001" stop-color="#3f7b96"/><stop offset="0.412" stop-color="#335f95"/><stop offset="0.413" stop-color="#8d206f"/><stop offset="0.729" stop-color="#8d1f2e"/><stop offset="0.999" stop-color="#8c1f16"/></linearGradient><linearGradient id="o43" gradientUnits="userSpaceOnUse" x1="1710" x2="2311"><stop offset="0.001" stop-color="#3d7796"/><stop offset="0.412" stop-color="#315b94"/><stop offset="0.413" stop-color="#8e2072"/><stop offset="0.728" stop-color="#8d1f31"/><stop offset="0.999" stop-color="#8c1f16"/></linearGradient><linearGradient id="o44" gradientUnits="userSpaceOnUse" x1="1711" x2="2308"><stop offset="0.001" stop-color="#3b7296"/><stop offset="0.411" stop-color="#305894"/><stop offset="0.413" stop-color="#8e2075"/><stop offset="0.723" stop-color="#8d1f33"/><stop offset="0.999" stop-color="#8c1f17"/></linearGradient><linearGradient id="o45" gradientUnits="userSpaceOnUse" x1="1712" x2="2305"><stop offset="0.001" stop-color="#396e95"/><stop offset="0.409" stop-color="#2f5594"/><stop offset="0.411" stop-color="#8e2079"/><stop offset="0.718" stop-color="#8d1f36"/><stop offset="0.999" stop-color="#8c1f17"/></linearGradient><linearGradient id="o46" gradientUnits="userSpaceOnUse" x1="1714" x2="2302"><stop offset="0.001" stop-color="#376995"/><stop offset="0.407" stop-color="#2e5294"/><stop offset="0.409" stop-color="#8e207c"/><stop offset="0.712" stop-color="#8d1f39"/><stop offset="0.999" stop-color="#8c1f18"/></linearGradient><linearGradient id="o47" gradientUnits="userSpaceOnUse" x1="1715" x2="2298"><stop offset="0.001" stop-color="#356595"/><stop offset="0.407" stop-color="#2d5094"/><stop offset="0.409" stop-color="#8e2080"/><stop offset="0.709" stop-color="#8d1f3c"/><stop offset="0.999" stop-color="#8c1f19"/></linearGradient><linearGradient id="o48" gradientUnits="userSpaceOnUse" x1="1717" x2="2295"><stop offset="0.001" stop-color="#346295"/><stop offset="0.406" stop-color="#2c4d94"/><stop offset="0.407" stop-color="#8e2083"/><stop offset="0.703" stop-color="#8d1f3f"/><stop offset="0.999" stop-color="#8c1f1a"/></linearGradient><linearGradient id="o49" gradientUnits="userSpaceOnUse" x1="1719" x2="2292"><stop offset="0.001" stop-color="#325e95"/><stop offset="0.404" stop-color="#2b4a94"/><stop offset="0.406" stop-color="#8e2087"/><stop offset="0.699" stop-color="#8d1f42"/><stop offset="0.999" stop-color="#8c1f1b"/></linearGradient><linearGradient id="o50" gradientUnits="userSpaceOnUse" x1="1720" x2="2289"><stop offset="0.001" stop-color="#315a94"/><stop offset="0.402" stop-color="#2a4894"/><stop offset="0.403" stop-color="#8e208b"/><stop offset="0.692" stop-color="#8d1f46"/><stop offset="0.999" stop-color="#8c1f1c"/></linearGradient><linearGradient id="o51" gradientUnits="userSpaceOnUse" x1="1722" x2="2285"><stop offset="0.001" stop-color="#305794"/><stop offset="0.401" stop-color="#294694"/><stop offset="0.402" stop-color="#8e208f"/><stop offset="0.687" stop-color="#8d1f49"/><stop offset="0.999" stop-color="#8c1f1e"/></linearGradient><linearGradient id="o52" gradientUnits="userSpaceOnUse" x1="1723" x2="2282"><stop offset="0.001" stop-color="#2f5494"/><stop offset="0.400" stop-color="#294394"/><stop offset="0.402" stop-color="#8e2193"/><stop offset="0.681" stop-color="#8d1f4d"/><stop offset="0.999" stop-color="#8c1f1f"/></linearGradient><linearGradient id="o53" gradientUnits="userSpaceOnUse" x1="1725" x2="2279"><stop offset="0.001" stop-color="#2d5194"/><stop offset="0.398" stop-color="#284194"/><stop offset="0.400" stop-color="#8b2094"/><stop offset="0.732" stop-color="#8d1f46"/><stop offset="0.999" stop-color="#8c1f21"/></linearGradient><linearGradient id="o54" gradientUnits="userSpaceOnUse" x1="1726" x2="2275"><stop offset="0.001" stop-color="#2c4e94"/><stop offset="0.398" stop-color="#273f94"/><stop offset="0.400" stop-color="#881f94"/><stop offset="0.480" stop-color="#8e2082"/><stop offset="0.795" stop-color="#8d1f3e"/><stop offset="0.999" stop-color="#8c1f23"/></linearGradient><linearGradient id="o55" gradientUnits="userSpaceOnUse" x1="1728" x2="2272"><stop offset="0.001" stop-color="#2b4b94"/><stop offset="0.396" stop-color="#263d94"/><stop offset="0.398" stop-color="#841e94"/><stop offset="0.460" stop-color="#8e208b"/><stop offset="0.762" stop-color="#8d1f46"/><stop offset="0.999" stop-color="#8c1f24"/></linearGradient><linearGradient id="o56" gradientUnits="userSpaceOnUse" x1="1729" x2="2269"><stop offset="0.001" stop-color="#2a4994"/><stop offset="0.394" stop-color="#263b93"/><stop offset="0.395" stop-color="#801d94"/><stop offset="0.468" stop-color="#8e208d"/><stop offset="0.768" stop-color="#8d1f47"/><stop offset="0.999" stop-color="#8c1f26"/></linearGradient><linearGradient id="o57" gradientUnits="userSpaceOnUse" x1="1731" x2="2266"><stop offset="0.001" stop-color="#294694"/><stop offset="0.392" stop-color="#253993"/><stop offset="0.393" stop-color="#7c1c94"/><stop offset="0.478" stop-color="#8e208d"/><stop offset="0.780" stop-color="#8d1f48"/><stop offset="0.999" stop-color="#8c1f28"/></linearGradient><linearGradient id="o58" gradientUnits="userSpaceOnUse" x1="1732" x2="2262"><stop offset="0.001" stop-color="#294394"/><stop offset="0.392" stop-color="#253793"/><stop offset="0.393" stop-color="#791b94"/><stop offset="0.490" stop-color="#8e208e"/><stop offset="0.793" stop-color="#8d1f48"/><stop offset="0.999" stop-color="#8c1f2a"/></linearGradient><linearGradient id="o59" gradientUnits="userSpaceOnUse" x1="1734" x2="2259"><stop offset="0.001" stop-color="#284194"/><stop offset="0.390" stop-color="#243593"/><stop offset="0.391" stop-color="#761a94"/><stop offset="0.500" stop-color="#8e208e"/><stop offset="0.807" stop-color="#8d1f48"/><stop offset="0.999" stop-color="#8c1f2c"/></linearGradient><linearGradient id="o60" gradientUnits="userSpaceOnUse" x1="1735" x2="2256"><stop offset="0.001" stop-color="#273f94"/><stop offset="0.389" stop-color="#243393"/><stop offset="0.391" stop-color="#721a94"/><stop offset="0.513" stop-color="#8e208e"/><stop offset="0.822" stop-color="#8d1f48"/><stop offset="0.999" stop-color="#8d1f2e"/></linearGradient><linearGradient id="o61" gradientUnits="userSpaceOnUse" x1="1737" x2="2252"><stop offset="0.001" stop-color="#263c94"/><stop offset="0.387" stop-color="#233193"/><stop offset="0.389" stop-color="#6f1994"/><stop offset="0.525" stop-color="#8e208f"/><stop offset="0.836" stop-color="#8d1f49"/><stop offset="0.999" stop-color="#8d1f31"/></linearGradient><linearGradient id="o62" gradientUnits="userSpaceOnUse" x1="1738" x2="2249"><stop offset="0.001" stop-color="#263a93"/><stop offset="0.385" stop-color="#233093"/><stop offset="0.386" stop-color="#6c1893"/><stop offset="0.539" stop-color="#8e208f"/><stop offset="0.854" stop-color="#8d1f49"/><stop offset="0.999" stop-color="#8d1f33"/></linearGradient><linearGradient id="o63" gradientUnits="userSpaceOnUse" x1="1740" x2="2246"><stop offset="0.001" stop-color="#253893"/><stop offset="0.382" stop-color="#222e93"/><stop offset="0.384" stop-color="#691793"/><stop offset="0.552" stop-color="#8e208e"/><stop offset="0.871" stop-color="#8d1f48"/><stop offset="0.999" stop-color="#8d1f35"/></linearGradient><linearGradient id="o64" gradientUnits="userSpaceOnUse" x1="1742" x2="2243"><stop offset="0.001" stop-color="#243693"/><stop offset="0.380" stop-color="#222d93"/><stop offset="0.382" stop-color="#661793"/><stop offset="0.564" stop-color="#8e208f"/><stop offset="0.883" stop-color="#8d1f49"/><stop offset="0.999" stop-color="#8d1f38"/></linearGradient><linearGradient id="o65" gradientUnits="userSpaceOnUse" x1="1744" x2="2239"><stop offset="0.001" stop-color="#243493"/><stop offset="0.379" stop-color="#212b93"/><stop offset="0.381" stop-color="#631693"/><stop offset="0.579" stop-color="#8e208f"/><stop offset="0.902" stop-color="#8d1f49"/><stop offset="0.999" stop-color="#8d1f3a"/></linearGradient><linearGradient id="o66" gradientUnits="userSpaceOnUse" x1="1746" x2="2236"><stop offset="0.001" stop-color="#233293"/><stop offset="0.377" stop-color="#212a93"/><stop offset="0.379" stop-color="#601593"/><stop offset="0.593" stop-color="#8e208f"/><stop offset="0.919" stop-color="#8d1f49"/><stop offset="0.999" stop-color="#8d1f3d"/></linearGradient><linearGradient id="o67" gradientUnits="userSpaceOnUse" x1="1747" x2="2233"><stop offset="0.001" stop-color="#233093"/><stop offset="0.376" stop-color="#212893"/><stop offset="0.378" stop-color="#5d1593"/><stop offset="0.606" stop-color="#8e208f"/><stop offset="0.935" stop-color="#8d1f49"/><stop offset="0.999" stop-color="#8d1f3f"/></linearGradient><linearGradient id="o68" gradientUnits="userSpaceOnUse" x1="1749" x2="2230"><stop offset="0.001" stop-color="#222f93"/><stop offset="0.371" stop-color="#202793"/><stop offset="0.373" stop-color="#5a1493"/><stop offset="0.621" stop-color="#8e208f"/><stop offset="0.953" stop-color="#8d1f49"/><stop offset="0.999" stop-color="#8d1f42"/></linearGradient><linearGradient id="o69" gradientUnits="userSpaceOnUse" x1="1751" x2="2226"><stop offset="0.001" stop-color="#222d93"/><stop offset="0.369" stop-color="#202593"/><stop offset="0.372" stop-color="#581393"/><stop offset="0.637" stop-color="#8e208f"/><stop offset="0.974" stop-color="#8d1f49"/><stop offset="0.999" stop-color="#8d1f45"/></linearGradient><linearGradient id="o70" gradientUnits="userSpaceOnUse" x1="1753" x2="2223"><stop offset="0.001" stop-color="#212b93"/><stop offset="0.367" stop-color="#202493"/><stop offset="0.369" stop-color="#551393"/><stop offset="0.652" stop-color="#8e208f"/><stop offset="0.993" stop-color="#8d1f49"/><stop offset="0.999" stop-color="#8d1f48"/></linearGradient><linearGradient id="o71" gradientUnits="userSpaceOnUse" x1="1755" x2="2220"><stop offset="0.001" stop-color="#212993"/><stop offset="0.365" stop-color="#1f2393"/><stop offset="0.367" stop-color="#521293"/><stop offset="0.666" stop-color="#8e208f"/><stop offset="0.999" stop-color="#8d1f4b"/></linearGradient><linearGradient id="o72" gradientUnits="userSpaceOnUse" x1="1757" x2="2216"><stop offset="0.001" stop-color="#212893"/><stop offset="0.363" stop-color="#1f2193"/><stop offset="0.365" stop-color="#501193"/><stop offset="0.683" stop-color="#8e208f"/><stop offset="0.999" stop-color="#8d1f4e"/></linearGradient><linearGradient id="o73" gradientUnits="userSpaceOnUse" x1="1759" x2="2213"><stop offset="0.001" stop-color="#202693"/><stop offset="0.360" stop-color="#1f2093"/><stop offset="0.362" stop-color="#4e1193"/><stop offset="0.699" stop-color="#8e208f"/><stop offset="0.999" stop-color="#8d1f51"/></linearGradient><linearGradient id="o74" gradientUnits="userSpaceOnUse" x1="1760" x2="2210"><stop offset="0.001" stop-color="#202593"/><stop offset="0.357" stop-color="#1f1f93"/><stop offset="0.359" stop-color="#4b1093"/><stop offset="0.717" stop-color="#8e208f"/><stop offset="0.999" stop-color="#8d1f55"/></linearGradient><linearGradient id="o75" gradientUnits="userSpaceOnUse" x1="1762" x2="2207"><stop offset="0.001" stop-color="#202393"/><stop offset="0.354" stop-color="#1f1e93"/><stop offset="0.356" stop-color="#491093"/><stop offset="0.734" stop-color="#8e208f"/><stop offset="0.999" stop-color="#8d1f58"/></linearGradient><linearGradient id="o76" gradientUnits="userSpaceOnUse" x1="1764" x2="2203"><stop offset="0.001" stop-color="#1f2293"/><stop offset="0.352" stop-color="#1e1c93"/><stop offset="0.354" stop-color="#460f93"/><stop offset="0.730" stop-color="#8e2094"/><stop offset="0.999" stop-color="#8d1f5c"/></linearGradient><linearGradient id="o77" gradientUnits="userSpaceOnUse" x1="1766" x2="2200"><stop offset="0.001" stop-color="#1f2193"/><stop offset="0.349" stop-color="#1e1b93"/><stop offset="0.351" stop-color="#440f93"/><stop offset="0.736" stop-color="#8b2094"/><stop offset="0.999" stop-color="#8d1f5f"/></linearGradient><linearGradient id="o78" gradientUnits="userSpaceOnUse" x1="1768" x2="2197"><stop offset="0.001" stop-color="#1f1f93"/><stop offset="0.346" stop-color="#1e1a93"/><stop offset="0.348" stop-color="#420e93"/><stop offset="0.742" stop-color="#881f94"/><stop offset="0.875" stop-color="#8e207b"/><stop offset="0.999" stop-color="#8d1f63"/></linearGradient><linearGradient id="o79" gradientUnits="userSpaceOnUse" x1="1770" x2="2193"><stop offset="0.001" stop-color="#1f1e93"/><stop offset="0.344" stop-color="#1e1993"/><stop offset="0.346" stop-color="#400e93"/><stop offset="0.751" stop-color="#861e94"/><stop offset="0.833" stop-color="#8e2089"/><stop offset="0.999" stop-color="#8d1f67"/></linearGradient><linearGradient id="o80" gradientUnits="userSpaceOnUse" x1="1772" x2="2190"><stop offset="0.001" stop-color="#1e1d93"/><stop offset="0.339" stop-color="#1e1893"/><stop offset="0.341" stop-color="#3e0e93"/><stop offset="0.755" stop-color="#831e94"/><stop offset="0.839" stop-color="#8e208c"/><stop offset="0.999" stop-color="#8d206b"/></linearGradient><linearGradient id="o81" gradientUnits="userSpaceOnUse" x1="1774" x2="2187"><stop offset="0.001" stop-color="#1e1b93"/><stop offset="0.335" stop-color="#1e1793"/><stop offset="0.338" stop-color="#3c0d93"/><stop offset="0.762" stop-color="#801d94"/><stop offset="0.854" stop-color="#8e208d"/><stop offset="0.999" stop-color="#8d206e"/></linearGradient><linearGradient id="o82" gradientUnits="userSpaceOnUse" x1="1776" x2="2184"><stop offset="0.001" stop-color="#1e1a93"/><stop offset="0.332" stop-color="#1d1693"/><stop offset="0.335" stop-color="#3a0d93"/><stop offset="0.768" stop-color="#7e1c94"/><stop offset="0.871" stop-color="#8e208e"/><stop offset="0.999" stop-color="#8e2073"/></linearGradient><linearGradient id="o83" gradientUnits="userSpaceOnUse" x1="1778" x2="2180"><stop offset="0.001" stop-color="#1e1993"/><stop offset="0.330" stop-color="#1d1593"/><stop offset="0.332" stop-color="#380c93"/><stop offset="0.777" stop-color="#7b1c94"/><stop offset="0.892" stop-color="#8e208e"/><stop offset="0.999" stop-color="#8e2077"/></linearGradient><linearGradient id="o84" gradientUnits="userSpaceOnUse" x1="1780" x2="2177"><stop offset="0.001" stop-color="#1e1893"/><stop offset="0.326" stop-color="#1d1493"/><stop offset="0.329" stop-color="#360c93"/><stop offset="0.782" stop-color="#781b94"/><stop offset="0.913" stop-color="#8e208e"/><stop offset="0.999" stop-color="#8e207c"/></linearGradient><linearGradient id="o85" gradientUnits="userSpaceOnUse" x1="1782" x2="2174"><stop offset="0.001" stop-color="#1d1793"/><stop offset="0.323" stop-color="#1d1393"/><stop offset="0.325" stop-color="#340c93"/><stop offset="0.790" stop-color="#761a94"/><stop offset="0.932" stop-color="#8e208e"/><stop offset="0.999" stop-color="#8e2080"/></linearGradient><linearGradient id="o86" gradientUnits="userSpaceOnUse" x1="1784" x2="2171"><stop offset="0.001" stop-color="#1d1693"/><stop offset="0.317" stop-color="#1d1393"/><stop offset="0.319" stop-color="#320b93"/><stop offset="0.795" stop-color="#731a94"/><stop offset="0.955" stop-color="#8e208e"/><stop offset="0.999" stop-color="#8e2085"/></linearGradient><linearGradient id="o87" gradientUnits="userSpaceOnUse" x1="1786" x2="2167"><stop offset="0.001" stop-color="#1d1593"/><stop offset="0.314" stop-color="#1d1293"/><stop offset="0.316" stop-color="#300b93"/><stop offset="0.802" stop-color="#711994"/><stop offset="0.978" stop-color="#8e208f"/><stop offset="0.999" stop-color="#8e208a"/></linearGradient><linearGradient id="o88" gradientUnits="userSpaceOnUse" x1="1788" x2="2164"><stop offset="0.001" stop-color="#1d1493"/><stop offset="0.310" stop-color="#1d1193"/><stop offset="0.312" stop-color="#2f0b93"/><stop offset="0.807" stop-color="#6e1993"/><stop offset="0.999" stop-color="#8e208f"/></linearGradient><linearGradient id="o89" gradientUnits="userSpaceOnUse" x1="1790" x2="2161"><stop offset="0.001" stop-color="#1d1393"/><stop offset="0.306" stop-color="#1d1093"/><stop offset="0.309" stop-color="#2d0a93"/><stop offset="0.813" stop-color="#6b1893"/><stop offset="0.999" stop-color="#8e2094"/></linearGradient><linearGradient id="o90" gradientUnits="userSpaceOnUse" x1="1792" x2="2157"><stop offset="0.001" stop-color="#1d1293"/><stop offset="0.303" stop-color="#1d0f93"/><stop offset="0.305" stop-color="#2c0a93"/><stop offset="0.821" stop-color="#691793"/><stop offset="0.999" stop-color="#891f94"/></linearGradient><linearGradient id="o91" gradientUnits="userSpaceOnUse" x1="1795" x2="2154"><stop offset="0.001" stop-color="#1d1193"/><stop offset="0.294" stop-color="#1c0f93"/><stop offset="0.297" stop-color="#2a0a93"/><stop offset="0.823" stop-color="#661793"/><stop offset="0.999" stop-color="#841e94"/></linearGradient><linearGradient id="o92" gradientUnits="userSpaceOnUse" x1="1797" x2="2151"><stop offset="0.001" stop-color="#1d1093"/><stop offset="0.290" stop-color="#1c0e93"/><stop offset="0.292" stop-color="#290a93"/><stop offset="0.826" stop-color="#631693"/><stop offset="0.999" stop-color="#7f1d94"/></linearGradient><linearGradient id="o93" gradientUnits="userSpaceOnUse" x1="1799" x2="2148"><stop offset="0.001" stop-color="#1d0f93"/><stop offset="0.285" stop-color="#1c0d93"/><stop offset="0.288" stop-color="#270993"/><stop offset="0.830" stop-color="#601593"/><stop offset="0.999" stop-color="#7b1c94"/></linearGradient><linearGradient id="o94" gradientUnits="userSpaceOnUse" x1="1801" x2="2144"><stop offset="0.001" stop-color="#1c0e93"/><stop offset="0.281" stop-color="#1c0d93"/><stop offset="0.287" stop-color="#260993"/><stop offset="0.838" stop-color="#5e1593"/><stop offset="0.999" stop-color="#761a94"/></linearGradient><linearGradient id="o95" gradientUnits="userSpaceOnUse" x1="1803" x2="2141"><stop offset="0.001" stop-color="#1c0e93"/><stop offset="0.277" stop-color="#1c0c93"/><stop offset="0.283" stop-color="#250993"/><stop offset="0.842" stop-color="#5b1493"/><stop offset="0.999" stop-color="#721994"/></linearGradient><linearGradient id="o96" gradientUnits="userSpaceOnUse" x1="1805" x2="2138"><stop offset="0.002" stop-color="#1c0d93"/><stop offset="0.272" stop-color="#1c0b93"/><stop offset="0.281" stop-color="#240993"/><stop offset="0.848" stop-color="#591393"/><stop offset="0.998" stop-color="#6e1893"/></linearGradient><linearGradient id="o97" gradientUnits="userSpaceOnUse" x1="1807" x2="2134"><stop offset="0.002" stop-color="#1c0c93"/><stop offset="0.265" stop-color="#1c0b93"/><stop offset="0.280" stop-color="#230993"/><stop offset="0.855" stop-color="#561393"/><stop offset="0.998" stop-color="#691793"/></linearGradient><linearGradient id="o98" gradientUnits="userSpaceOnUse" x1="1809" x2="2131"><stop offset="0.002" stop-color="#1c0c93"/><stop offset="0.259" stop-color="#1c0a93"/><stop offset="0.318" stop-color="#240993"/><stop offset="0.905" stop-color="#591493"/><stop offset="0.998" stop-color="#651693"/></linearGradient><linearGradient id="o99" gradientUnits="userSpaceOnUse" x1="1812" x2="2128"><stop offset="0.002" stop-color="#1c0b93"/><stop offset="0.277" stop-color="#220993"/><stop offset="0.866" stop-color="#511293"/><stop offset="0.998" stop-color="#621693"/></linearGradient><linearGradient id="o100" gradientUnits="userSpaceOnUse" x1="1814" x2="2125"><stop offset="0.002" stop-color="#1c0b93"/><stop offset="0.310" stop-color="#220993"/><stop offset="0.912" stop-color="#541293"/><stop offset="0.998" stop-color="#5e1593"/></linearGradient><linearGradient id="o101" gradientUnits="userSpaceOnUse" x1="1816" x2="2121"><stop offset="0.002" stop-color="#1c0a93"/><stop offset="0.349" stop-color="#230993"/><stop offset="0.966" stop-color="#561393"/><stop offset="0.998" stop-color="#5a1493"/></linearGradient><linearGradient id="o102" gradientUnits="userSpaceOnUse" x1="1819" x2="2118"><stop offset="0.002" stop-color="#1c0a93"/><stop offset="0.386" stop-color="#240993"/><stop offset="0.998" stop-color="#571393"/></linearGradient><linearGradient id="o103" gradientUnits="userSpaceOnUse" x1="1821" x2="2115"><stop offset="0.002" stop-color="#1c0993"/><stop offset="0.434" stop-color="#260993"/><stop offset="0.998" stop-color="#541293"/></linearGradient><linearGradient id="o104" gradientUnits="userSpaceOnUse" x1="1824" x2="2112"><stop offset="0.002" stop-color="#1c0993"/><stop offset="0.481" stop-color="#270993"/><stop offset="0.998" stop-color="#501293"/></linearGradient><linearGradient id="o105" gradientUnits="userSpaceOnUse" x1="1826" x2="2108"><stop offset="0.002" stop-color="#1c0993"/><stop offset="0.534" stop-color="#290a93"/><stop offset="0.998" stop-color="#4d1193"/></linearGradient><linearGradient id="o106" gradientUnits="userSpaceOnUse" x1="1828" x2="2105"><stop offset="0.002" stop-color="#1c0893"/><stop offset="0.576" stop-color="#2a0a93"/><stop offset="0.998" stop-color="#4a1093"/></linearGradient><linearGradient id="o107" gradientUnits="userSpaceOnUse" x1="1831" x2="2102"><stop offset="0.002" stop-color="#1c0893"/><stop offset="0.592" stop-color="#290a93"/><stop offset="0.998" stop-color="#470f93"/></linearGradient><linearGradient id="o108" gradientUnits="userSpaceOnUse" x1="1833" x2="2098"><stop offset="0.002" stop-color="#1c0893"/><stop offset="0.613" stop-color="#290a93"/><stop offset="0.998" stop-color="#440f93"/></linearGradient><linearGradient id="o109" gradientUnits="userSpaceOnUse" x1="1836" x2="2095"><stop offset="0.002" stop-color="#1c0893"/><stop offset="0.631" stop-color="#290a93"/><stop offset="0.998" stop-color="#410e93"/></linearGradient><linearGradient id="o110" gradientUnits="userSpaceOnUse" x1="1838" x2="2092"><stop offset="0.002" stop-color="#1c0893"/><stop offset="0.652" stop-color="#280a93"/><stop offset="0.998" stop-color="#3e0e93"/></linearGradient><linearGradient id="o111" gradientUnits="userSpaceOnUse" x1="1841" x2="2089"><stop offset="0.002" stop-color="#1c0893"/><stop offset="0.671" stop-color="#280a93"/><stop offset="0.998" stop-color="#3c0d93"/></linearGradient><linearGradient id="o112" gradientUnits="userSpaceOnUse" x1="1843" x2="2085"><stop offset="0.002" stop-color="#1c0893"/><stop offset="0.696" stop-color="#280993"/><stop offset="0.998" stop-color="#390d93"/></linearGradient><linearGradient id="o113" gradientUnits="userSpaceOnUse" x1="1846" x2="2082"><stop offset="0.002" stop-color="#1c0893"/><stop offset="0.718" stop-color="#270993"/><stop offset="0.998" stop-color="#370c93"/></linearGradient><linearGradient id="o114" gradientUnits="userSpaceOnUse" x1="1849" x2="2079"><stop offset="0.002" stop-color="#1c0893"/><stop offset="0.746" stop-color="#270993"/><stop offset="0.998" stop-color="#340c93"/></linearGradient><linearGradient id="o115" gradientUnits="userSpaceOnUse" x1="1851" x2="2075"><stop offset="0.002" stop-color="#1c0893"/><stop offset="0.775" stop-color="#270993"/><stop offset="0.998" stop-color="#320b93"/></linearGradient><linearGradient id="o116" gradientUnits="userSpaceOnUse" x1="1854" x2="2072"><stop offset="0.002" stop-color="#1c0893"/><stop offset="0.805" stop-color="#270993"/><stop offset="0.998" stop-color="#300b93"/></linearGradient><linearGradient id="o117" gradientUnits="userSpaceOnUse" x1="1857" x2="2069"><stop offset="0.002" stop-color="#1c0893"/><stop offset="0.837" stop-color="#270993"/><stop offset="0.998" stop-color="#2e0a93"/></linearGradient><linearGradient id="o118" gradientUnits="userSpaceOnUse" x1="1860" x2="2066"><stop offset="0.002" stop-color="#1c0893"/><stop offset="0.871" stop-color="#260993"/><stop offset="0.998" stop-color="#2c0a93"/></linearGradient><linearGradient id="o119" gradientUnits="userSpaceOnUse" x1="1863" x2="2062"><stop offset="0.003" stop-color="#1c0893"/><stop offset="0.907" stop-color="#260993"/><stop offset="0.997" stop-color="#2a0a93"/></linearGradient><linearGradient id="o120" gradientUnits="userSpaceOnUse" x1="1865" x2="2059"><stop offset="0.003" stop-color="#1c0893"/><stop offset="0.946" stop-color="#260993"/><stop offset="0.997" stop-color="#280993"/></linearGradient><linearGradient id="o121" gradientUnits="userSpaceOnUse" x1="1868" x2="2056"><stop offset="0.003" stop-color="#1c0893"/><stop offset="0.987" stop-color="#260993"/><stop offset="0.997" stop-color="#260993"/></linearGradient><linearGradient id="o122" gradientUnits="userSpaceOnUse" x1="1871" x2="2053"><stop offset="0.003" stop-color="#1c0893"/><stop offset="0.997" stop-color="#250993"/></linearGradient><linearGradient id="o123" gradientUnits="userSpaceOnUse" x1="1874" x2="2049"><stop offset="0.003" stop-color="#1c0893"/><stop offset="0.997" stop-color="#230993"/></linearGradient><linearGradient id="o124" gradientUnits="userSpaceOnUse" x1="1878" x2="2046"><stop offset="0.003" stop-color="#1c0893"/><stop offset="0.997" stop-color="#220993"/></linearGradient><linearGradient id="o125" gradientUnits="userSpaceOnUse" x1="1881" x2="2043"><stop offset="0.003" stop-color="#1c0893"/><stop offset="0.997" stop-color="#210893"/></linearGradient><linearGradient id="o126" gradientUnits="userSpaceOnUse" x1="1884" x2="2039"><stop offset="0.003" stop-color="#1c0893"/><stop offset="0.997" stop-color="#1f0893"/></linearGradient><linearGradient id="o127" gradientUnits="userSpaceOnUse" x1="1888" x2="2036"><stop offset="0.003" stop-color="#1c0893"/><stop offset="0.997" stop-color="#1e0893"/></linearGradient><linearGradient id="o128" gradientUnits="userSpaceOnUse" x1="1891" x2="2033"><stop offset="0.004" stop-color="#1c0893"/><stop offset="0.996" stop-color="#1e0893"/></linearGradient><linearGradient id="o129" gradientUnits="userSpaceOnUse" x1="1895" x2="2030"><stop offset="0.004" stop-color="#1c0893"/><stop offset="0.996" stop-color="#1d0893"/></linearGradient><linearGradient id="o130" gradientUnits="userSpaceOnUse" x1="1898" x2="2026"><stop offset="0.004" stop-color="#1c0893"/><stop offset="0.996" stop-color="#1d0893"/></linearGradient><linearGradient id="o131" gradientUnits="userSpaceOnUse" x1="1902" x2="2023"><stop offset="0.004" stop-color="#1c0893"/><stop offset="0.996" stop-color="#1c0893"/></linearGradient><linearGradient id="o132" gradientUnits="userSpaceOnUse" x1="1906" x2="2020"><stop offset="0.004" stop-color="#1c0893"/><stop offset="0.996" stop-color="#1c0893"/></linearGradient><linearGradient id="o133" gradientUnits="userSpaceOnUse" x1="1909" x2="2016"><stop offset="0.005" stop-color="#1c0893"/><stop offset="0.995" stop-color="#1c0893"/></linearGradient><linearGradient id="o134" gradientUnits="userSpaceOnUse" x1="1914" x2="2013"><stop offset="0.005" stop-color="#1c0893"/><stop offset="0.995" stop-color="#1c0893"/></linearGradient><linearGradient id="o135" gradientUnits="userSpaceOnUse" x1="1918" x2="2010"><stop offset="0.005" stop-color="#1c0893"/><stop offset="0.995" stop-color="#1c0893"/></linearGradient><linearGradient id="o136" gradientUnits="userSpaceOnUse" x1="1922" x2="2007"><stop offset="0.006" stop-color="#1c0893"/><stop offset="0.994" stop-color="#1c0893"/></linearGradient><linearGradient id="o137" gradientUnits="userSpaceOnUse" x1="1926" x2="2003"><stop offset="0.006" stop-color="#1c0893"/><stop offset="0.994" stop-color="#1c0893"/></linearGradient><linearGradient id="o138" gradientUnits="userSpaceOnUse" x1="1930" x2="2000"><stop offset="0.007" stop-color="#1c0893"/><stop offset="0.993" stop-color="#1c0893"/></linearGradient><linearGradient id="o139" gradientUnits="userSpaceOnUse" x1="1934" x2="1997"><stop offset="0.008" stop-color="#1c0893"/><stop offset="0.992" stop-color="#1c0893"/></linearGradient><linearGradient id="o140" gradientUnits="userSpaceOnUse" x1="1938" x2="1994"><stop offset="0.009" stop-color="#1c0893"/><stop offset="0.991" stop-color="#1c0893"/></linearGradient><linearGradient id="o141" gradientUnits="userSpaceOnUse" x1="1942" x2="1990"><stop offset="0.010" stop-color="#1c0893"/><stop offset="0.990" stop-color="#1c0893"/></linearGradient><linearGradient id="o142" gradientUnits="userSpaceOnUse" x1="1946" x2="1987"><stop offset="0.012" stop-color="#1c0893"/><stop offset="0.988" stop-color="#1c0893"/></linearGradient><linearGradient id="o143" gradientUnits="userSpaceOnUse" x1="1950" x2="1984"><stop offset="0.015" stop-color="#1c0893"/><stop offset="0.985" stop-color="#1c0893"/></linearGradient><linearGradient id="o144" gradientUnits="userSpaceOnUse" x1="1954" x2="1980"><stop offset="0.019" stop-color="#1c0893"/><stop offset="0.981" stop-color="#1c0893"/></linearGradient><linearGradient id="o145" gradientUnits="userSpaceOnUse" x1="1958" x2="1977"><stop offset="0.026" stop-color="#1c0893"/><stop offset="0.974" stop-color="#1c0893"/></linearGradient><linearGradient id="o146" gradientUnits="userSpaceOnUse" x1="1963" x2="1974"><stop offset="0.045" stop-color="#1c0893"/><stop offset="0.955" stop-color="#1c0893"/></linearGradient><linearGradient id="i0" gradientUnits="userSpaceOnUse" x1="1821" x2="1852"><stop offset="0.016" stop-color="#75fb4c"/><stop offset="0.984" stop-color="#85fc4d"/></linearGradient><linearGradient id="i1" gradientUnits="userSpaceOnUse" x1="1822" x2="1888"><stop offset="0.008" stop-color="#75fb4d"/><stop offset="0.462" stop-color="#86fc4d"/><stop offset="0.992" stop-color="#c3fd50"/></linearGradient><linearGradient id="i2" gradientUnits="userSpaceOnUse" x1="1822" x2="1924"><stop offset="0.005" stop-color="#75fb4e"/><stop offset="0.299" stop-color="#86fc4e"/><stop offset="0.662" stop-color="#c7fd50"/><stop offset="0.887" stop-color="#fffd54"/><stop offset="0.995" stop-color="#f9de4a"/></linearGradient><linearGradient id="i3" gradientUnits="userSpaceOnUse" x1="1823" x2="1960"><stop offset="0.004" stop-color="#75fb50"/><stop offset="0.223" stop-color="#87fc4f"/><stop offset="0.493" stop-color="#cafd51"/><stop offset="0.653" stop-color="#fefc54"/><stop offset="0.872" stop-color="#f3b43e"/><stop offset="0.996" stop-color="#f09837"/></linearGradient><linearGradient id="i4" gradientUnits="userSpaceOnUse" x1="1823" x2="1996"><stop offset="0.003" stop-color="#75fb53"/><stop offset="0.176" stop-color="#86fc52"/><stop offset="0.384" stop-color="#c8fd53"/><stop offset="0.517" stop-color="#fefb55"/><stop offset="0.691" stop-color="#f3b23e"/><stop offset="0.957" stop-color="#ed752f"/><stop offset="0.997" stop-color="#ed6f2d"/></linearGradient><linearGradient id="i5" gradientUnits="userSpaceOnUse" x1="1824" x2="2032"><stop offset="0.002" stop-color="#75fb56"/><stop offset="0.142" stop-color="#86fc55"/><stop offset="0.315" stop-color="#c8fd56"/><stop offset="0.421" stop-color="#fffd58"/><stop offset="0.560" stop-color="#f4b540"/><stop offset="0.776" stop-color="#ed772f"/><stop offset="0.998" stop-color="#eb5528"/></linearGradient><linearGradient id="i6" gradientUnits="userSpaceOnUse" x1="1824" x2="2068"><stop offset="0.002" stop-color="#75fb5a"/><stop offset="0.121" stop-color="#86fc59"/><stop offset="0.264" stop-color="#c6fd5a"/><stop offset="0.359" stop-color="#fefc5b"/><stop offset="0.477" stop-color="#f3b442"/><stop offset="0.662" stop-color="#ed7630"/><stop offset="0.949" stop-color="#eb4926"/><stop offset="0.998" stop-color="#eb4426"/></linearGradient><linearGradient id="i7" gradientUnits="userSpaceOnUse" x1="1825" x2="2104"><stop offset="0.002" stop-color="#75fb5e"/><stop offset="0.106" stop-color="#87fc5e"/><stop offset="0.231" stop-color="#c9fd5f"/><stop offset="0.310" stop-color="#fefb5f"/><stop offset="0.414" stop-color="#f3b345"/><stop offset="0.572" stop-color="#ed7631"/><stop offset="0.819" stop-color="#eb4926"/><stop offset="0.998" stop-color="#ea3a24"/></linearGradient><linearGradient id="i8" gradientUnits="userSpaceOnUse" x1="1825" x2="2140"><stop offset="0.002" stop-color="#75fb63"/><stop offset="0.090" stop-color="#85fc63"/><stop offset="0.198" stop-color="#c4fd64"/><stop offset="0.271" stop-color="#fffd66"/><stop offset="0.360" stop-color="#f4b54a"/><stop offset="0.497" stop-color="#ee7834"/><stop offset="0.710" stop-color="#eb4a27"/><stop offset="0.998" stop-color="#ea3524"/></linearGradient><linearGradient id="i9" gradientUnits="userSpaceOnUse" x1="1826" x2="2176"><stop offset="0.001" stop-color="#75fb69"/><stop offset="0.081" stop-color="#86fc69"/><stop offset="0.179" stop-color="#c7fd6a"/><stop offset="0.241" stop-color="#fffc6c"/><stop offset="0.321" stop-color="#f4b44e"/><stop offset="0.444" stop-color="#ed7736"/><stop offset="0.636" stop-color="#eb4928"/><stop offset="0.941" stop-color="#ea3423"/><stop offset="0.999" stop-color="#ea3323"/></linearGradient><linearGradient id="i10" gradientUnits="userSpaceOnUse" x1="1827" x2="2190"><stop offset="0.001" stop-color="#76fb6e"/><stop offset="0.079" stop-color="#87fc6f"/><stop offset="0.172" stop-color="#cafd71"/><stop offset="0.230" stop-color="#fffb72"/><stop offset="0.307" stop-color="#f3b352"/><stop offset="0.426" stop-color="#ed7639"/><stop offset="0.610" stop-color="#eb4929"/><stop offset="0.905" stop-color="#ea3424"/><stop offset="0.999" stop-color="#ea3323"/></linearGradient><linearGradient id="i11" gradientUnits="userSpaceOnUse" x1="1827" x2="2188"><stop offset="0.001" stop-color="#76fb75"/><stop offset="0.079" stop-color="#87fc76"/><stop offset="0.173" stop-color="#cafd79"/><stop offset="0.231" stop-color="#fefa79"/><stop offset="0.309" stop-color="#f3b258"/><stop offset="0.428" stop-color="#ed753d"/><stop offset="0.614" stop-color="#eb482b"/><stop offset="0.910" stop-color="#ea3424"/><stop offset="0.999" stop-color="#ea3323"/></linearGradient><linearGradient id="i12" gradientUnits="userSpaceOnUse" x1="1828" x2="2185"><stop offset="0.001" stop-color="#76fb7b"/><stop offset="0.077" stop-color="#87fc7d"/><stop offset="0.169" stop-color="#c8fd80"/><stop offset="0.228" stop-color="#fffc82"/><stop offset="0.304" stop-color="#f4b45f"/><stop offset="0.422" stop-color="#ed7742"/><stop offset="0.604" stop-color="#eb492e"/><stop offset="0.895" stop-color="#ea3425"/><stop offset="0.999" stop-color="#ea3324"/></linearGradient><linearGradient id="i13" gradientUnits="userSpaceOnUse" x1="1828" x2="2182"><stop offset="0.001" stop-color="#76fb82"/><stop offset="0.078" stop-color="#87fc84"/><stop offset="0.171" stop-color="#c8fd89"/><stop offset="0.230" stop-color="#fffb8a"/><stop offset="0.306" stop-color="#f4b365"/><stop offset="0.422" stop-color="#ee7746"/><stop offset="0.603" stop-color="#eb4930"/><stop offset="0.891" stop-color="#ea3425"/><stop offset="0.999" stop-color="#ea3324"/></linearGradient><linearGradient id="i14" gradientUnits="userSpaceOnUse" x1="1829" x2="2179"><stop offset="0.001" stop-color="#77fb89"/><stop offset="0.079" stop-color="#88fc8c"/><stop offset="0.173" stop-color="#cbfd91"/><stop offset="0.230" stop-color="#fffa93"/><stop offset="0.307" stop-color="#f4b26b"/><stop offset="0.424" stop-color="#ed764b"/><stop offset="0.607" stop-color="#eb4833"/><stop offset="0.901" stop-color="#ea3426"/><stop offset="0.999" stop-color="#ea3325"/></linearGradient><linearGradient id="i15" gradientUnits="userSpaceOnUse" x1="1829" x2="2175"><stop offset="0.001" stop-color="#77fb91"/><stop offset="0.079" stop-color="#88fc94"/><stop offset="0.172" stop-color="#c9fd9a"/><stop offset="0.230" stop-color="#fffc9d"/><stop offset="0.305" stop-color="#f4b574"/><stop offset="0.421" stop-color="#ee7851"/><stop offset="0.600" stop-color="#eb4a37"/><stop offset="0.886" stop-color="#ea3428"/><stop offset="0.999" stop-color="#ea3326"/></linearGradient><linearGradient id="i16" gradientUnits="userSpaceOnUse" x1="1830" x2="2172"><stop offset="0.001" stop-color="#77fb98"/><stop offset="0.077" stop-color="#88fc9c"/><stop offset="0.171" stop-color="#cafda3"/><stop offset="0.230" stop-color="#fffba6"/><stop offset="0.306" stop-color="#f4b37b"/><stop offset="0.423" stop-color="#ee7656"/><stop offset="0.604" stop-color="#eb493a"/><stop offset="0.893" stop-color="#ea342a"/><stop offset="0.999" stop-color="#ea3327"/></linearGradient><linearGradient id="i17" gradientUnits="userSpaceOnUse" x1="1830" x2="2169"><stop offset="0.001" stop-color="#77fba0"/><stop offset="0.078" stop-color="#88fca5"/><stop offset="0.170" stop-color="#c7fdac"/><stop offset="0.232" stop-color="#fffaaf"/><stop offset="0.308" stop-color="#f4b281"/><stop offset="0.426" stop-color="#ee755b"/><stop offset="0.609" stop-color="#eb483d"/><stop offset="0.904" stop-color="#ea342b"/><stop offset="0.999" stop-color="#ea3329"/></linearGradient><linearGradient id="i18" gradientUnits="userSpaceOnUse" x1="1831" x2="2165"><stop offset="0.001" stop-color="#78fba8"/><stop offset="0.079" stop-color="#89fcae"/><stop offset="0.172" stop-color="#cbfdb6"/><stop offset="0.229" stop-color="#fffcbb"/><stop offset="0.304" stop-color="#f4b58b"/><stop offset="0.421" stop-color="#ee7762"/><stop offset="0.600" stop-color="#eb4a42"/><stop offset="0.888" stop-color="#ea342e"/><stop offset="0.999" stop-color="#ea332a"/></linearGradient><linearGradient id="i19" gradientUnits="userSpaceOnUse" x1="1831" x2="2162"><stop offset="0.002" stop-color="#78fbb0"/><stop offset="0.080" stop-color="#89fcb7"/><stop offset="0.174" stop-color="#cbfdc1"/><stop offset="0.231" stop-color="#fffbc5"/><stop offset="0.307" stop-color="#f4b493"/><stop offset="0.424" stop-color="#ee7667"/><stop offset="0.606" stop-color="#eb4946"/><stop offset="0.896" stop-color="#ea3430"/><stop offset="0.998" stop-color="#ea332c"/></linearGradient><linearGradient id="i20" gradientUnits="userSpaceOnUse" x1="1832" x2="2159"><stop offset="0.002" stop-color="#79fbb9"/><stop offset="0.078" stop-color="#89fcc0"/><stop offset="0.170" stop-color="#c9fdca"/><stop offset="0.228" stop-color="#fffed1"/><stop offset="0.301" stop-color="#f5b79d"/><stop offset="0.414" stop-color="#ee7a70"/><stop offset="0.592" stop-color="#eb4b4c"/><stop offset="0.873" stop-color="#ea3433"/><stop offset="0.998" stop-color="#ea332e"/></linearGradient><linearGradient id="i21" gradientUnits="userSpaceOnUse" x1="1833" x2="2155"><stop offset="0.002" stop-color="#79fbc2"/><stop offset="0.079" stop-color="#8bfcca"/><stop offset="0.172" stop-color="#ccfdd5"/><stop offset="0.228" stop-color="#fffddc"/><stop offset="0.303" stop-color="#f5b6a5"/><stop offset="0.418" stop-color="#ee7876"/><stop offset="0.598" stop-color="#eb4a50"/><stop offset="0.884" stop-color="#ea3436"/><stop offset="0.998" stop-color="#ea3330"/></linearGradient><linearGradient id="i22" gradientUnits="userSpaceOnUse" x1="1833" x2="2152"><stop offset="0.002" stop-color="#7afccb"/><stop offset="0.080" stop-color="#8bfcd3"/><stop offset="0.174" stop-color="#cdfde0"/><stop offset="0.230" stop-color="#fffbe6"/><stop offset="0.306" stop-color="#f5b4ad"/><stop offset="0.422" stop-color="#ee777b"/><stop offset="0.603" stop-color="#eb4954"/><stop offset="0.892" stop-color="#ea3438"/><stop offset="0.998" stop-color="#ea3333"/></linearGradient><linearGradient id="i23" gradientUnits="userSpaceOnUse" x1="1834" x2="2149"><stop offset="0.002" stop-color="#7afcd4"/><stop offset="0.078" stop-color="#8bfcdd"/><stop offset="0.170" stop-color="#cbfdeb"/><stop offset="0.227" stop-color="#fffef4"/><stop offset="0.303" stop-color="#f5b5b6"/><stop offset="0.417" stop-color="#ee7883"/><stop offset="0.595" stop-color="#eb4a5a"/><stop offset="0.878" stop-color="#ea343c"/><stop offset="0.998" stop-color="#ea3335"/></linearGradient><linearGradient id="i24" gradientUnits="userSpaceOnUse" x1="1834" x2="2146"><stop offset="0.002" stop-color="#7bfcdd"/><stop offset="0.079" stop-color="#8bfce7"/><stop offset="0.171" stop-color="#ccfdf6"/><stop offset="0.229" stop-color="#fffdfe"/><stop offset="0.303" stop-color="#f5b6c1"/><stop offset="0.418" stop-color="#ee788a"/><stop offset="0.598" stop-color="#eb4a5e"/><stop offset="0.883" stop-color="#ea343f"/><stop offset="0.998" stop-color="#ea3338"/></linearGradient><linearGradient id="i25" gradientUnits="userSpaceOnUse" x1="1835" x2="2142"><stop offset="0.002" stop-color="#7bfce7"/><stop offset="0.080" stop-color="#8dfcf2"/><stop offset="0.197" stop-color="#ddf6fe"/><stop offset="0.243" stop-color="#ffecfb"/><stop offset="0.324" stop-color="#f4a7bd"/><stop offset="0.451" stop-color="#ed6d86"/><stop offset="0.650" stop-color="#eb435b"/><stop offset="0.982" stop-color="#ea333c"/><stop offset="0.998" stop-color="#ea333b"/></linearGradient><linearGradient id="i26" gradientUnits="userSpaceOnUse" x1="1835" x2="2139"><stop offset="0.002" stop-color="#7cfcf1"/><stop offset="0.081" stop-color="#8dfcfc"/><stop offset="0.199" stop-color="#d3eafd"/><stop offset="0.258" stop-color="#fcddf9"/><stop offset="0.347" stop-color="#f29ab9"/><stop offset="0.485" stop-color="#ed6383"/><stop offset="0.699" stop-color="#eb3e59"/><stop offset="0.998" stop-color="#ea333d"/></linearGradient><linearGradient id="i27" gradientUnits="userSpaceOnUse" x1="1836" x2="2136"><stop offset="0.002" stop-color="#7dfcfb"/><stop offset="0.088" stop-color="#8bf0fc"/><stop offset="0.212" stop-color="#d4ddfc"/><stop offset="0.268" stop-color="#fbd2f9"/><stop offset="0.365" stop-color="#f190b8"/><stop offset="0.515" stop-color="#ec5b81"/><stop offset="0.748" stop-color="#ea3a57"/><stop offset="0.998" stop-color="#ea3341"/></linearGradient><linearGradient id="i28" gradientUnits="userSpaceOnUse" x1="1836" x2="2132"><stop offset="0.002" stop-color="#79f4fd"/><stop offset="0.086" stop-color="#84e7fc"/><stop offset="0.211" stop-color="#c9d4fb"/><stop offset="0.285" stop-color="#f9c5f7"/><stop offset="0.390" stop-color="#f085b5"/><stop offset="0.552" stop-color="#ec537e"/><stop offset="0.806" stop-color="#ea3755"/><stop offset="0.998" stop-color="#ea3344"/></linearGradient><linearGradient id="i29" gradientUnits="userSpaceOnUse" x1="1837" x2="2129"><stop offset="0.002" stop-color="#75e9fc"/><stop offset="0.087" stop-color="#80dcfb"/><stop offset="0.217" stop-color="#c5c9fb"/><stop offset="0.296" stop-color="#f7bbf8"/><stop offset="0.406" stop-color="#f07db5"/><stop offset="0.577" stop-color="#ec4e7e"/><stop offset="0.848" stop-color="#ea3554"/><stop offset="0.998" stop-color="#ea3347"/></linearGradient><linearGradient id="i30" gradientUnits="userSpaceOnUse" x1="1837" x2="2126"><stop offset="0.002" stop-color="#71e0fb"/><stop offset="0.088" stop-color="#7bd3fb"/><stop offset="0.223" stop-color="#c0c0fa"/><stop offset="0.313" stop-color="#f6b0f5"/><stop offset="0.427" stop-color="#ef75b4"/><stop offset="0.611" stop-color="#eb487d"/><stop offset="0.905" stop-color="#ea3453"/><stop offset="0.998" stop-color="#ea334b"/></linearGradient><linearGradient id="i31" gradientUnits="userSpaceOnUse" x1="1838" x2="2122"><stop offset="0.002" stop-color="#6dd7fb"/><stop offset="0.093" stop-color="#78cafa"/><stop offset="0.241" stop-color="#c3b5fa"/><stop offset="0.326" stop-color="#f5a7f6"/><stop offset="0.445" stop-color="#ee6fb5"/><stop offset="0.639" stop-color="#eb457d"/><stop offset="0.960" stop-color="#ea3352"/><stop offset="0.998" stop-color="#ea334e"/></linearGradient><linearGradient id="i32" gradientUnits="userSpaceOnUse" x1="1839" x2="2119"><stop offset="0.002" stop-color="#69cefa"/><stop offset="0.095" stop-color="#75c1f9"/><stop offset="0.248" stop-color="#c0acf9"/><stop offset="0.341" stop-color="#f49df4"/><stop offset="0.470" stop-color="#ee67b2"/><stop offset="0.677" stop-color="#eb407b"/><stop offset="0.998" stop-color="#ea3352"/></linearGradient><linearGradient id="i33" gradientUnits="userSpaceOnUse" x1="1839" x2="2116"><stop offset="0.002" stop-color="#66c7fa"/><stop offset="0.096" stop-color="#71baf9"/><stop offset="0.255" stop-color="#bca4f9"/><stop offset="0.356" stop-color="#f395f5"/><stop offset="0.489" stop-color="#ee62b3"/><stop offset="0.706" stop-color="#eb3d7b"/><stop offset="0.998" stop-color="#ea3356"/></linearGradient><linearGradient id="i34" gradientUnits="userSpaceOnUse" x1="1840" x2="2112"><stop offset="0.002" stop-color="#62bff9"/><stop offset="0.101" stop-color="#6fb2f9"/><stop offset="0.274" stop-color="#bf9bf8"/><stop offset="0.373" stop-color="#f28cf4"/><stop offset="0.513" stop-color="#ed5cb2"/><stop offset="0.741" stop-color="#eb3b7b"/><stop offset="0.998" stop-color="#ea335a"/></linearGradient><linearGradient id="i35" gradientUnits="userSpaceOnUse" x1="1840" x2="2109"><stop offset="0.002" stop-color="#5fb8f9"/><stop offset="0.102" stop-color="#6babf8"/><stop offset="0.277" stop-color="#b995f8"/><stop offset="0.388" stop-color="#f286f4"/><stop offset="0.533" stop-color="#ed57b3"/><stop offset="0.771" stop-color="#eb397b"/><stop offset="0.998" stop-color="#ea335e"/></linearGradient><linearGradient id="i36" gradientUnits="userSpaceOnUse" x1="1841" x2="2106"><stop offset="0.002" stop-color="#5cb1f9"/><stop offset="0.104" stop-color="#68a4f8"/><stop offset="0.292" stop-color="#bb8df8"/><stop offset="0.402" stop-color="#f17ff5"/><stop offset="0.553" stop-color="#ed53b3"/><stop offset="0.798" stop-color="#eb377c"/><stop offset="0.998" stop-color="#ea3362"/></linearGradient><linearGradient id="i37" gradientUnits="userSpaceOnUse" x1="1841" x2="2103"><stop offset="0.002" stop-color="#5aabf8"/><stop offset="0.109" stop-color="#669df8"/><stop offset="0.307" stop-color="#ba86f8"/><stop offset="0.422" stop-color="#f178f4"/><stop offset="0.578" stop-color="#ed4eb3"/><stop offset="0.838" stop-color="#eb367a"/><stop offset="0.998" stop-color="#ea3366"/></linearGradient><linearGradient id="i38" gradientUnits="userSpaceOnUse" x1="1842" x2="2099"><stop offset="0.002" stop-color="#57a4f8"/><stop offset="0.111" stop-color="#6497f8"/><stop offset="0.321" stop-color="#ba7ff7"/><stop offset="0.438" stop-color="#f072f4"/><stop offset="0.601" stop-color="#ec4ab3"/><stop offset="0.870" stop-color="#eb357b"/><stop offset="0.998" stop-color="#ea346b"/></linearGradient><linearGradient id="i39" gradientUnits="userSpaceOnUse" x1="1842" x2="2096"><stop offset="0.002" stop-color="#559ff8"/><stop offset="0.112" stop-color="#6091f7"/><stop offset="0.325" stop-color="#b57af7"/><stop offset="0.459" stop-color="#f06bf3"/><stop offset="0.632" stop-color="#ec46b1"/><stop offset="0.915" stop-color="#eb347a"/><stop offset="0.998" stop-color="#eb346f"/></linearGradient><linearGradient id="i40" gradientUnits="userSpaceOnUse" x1="1843" x2="2093"><stop offset="0.002" stop-color="#5299f7"/><stop offset="0.118" stop-color="#608bf7"/><stop offset="0.354" stop-color="#bc72f7"/><stop offset="0.474" stop-color="#ef66f4"/><stop offset="0.654" stop-color="#ec43b2"/><stop offset="0.946" stop-color="#eb347b"/><stop offset="0.998" stop-color="#eb3474"/></linearGradient><linearGradient id="i41" gradientUnits="userSpaceOnUse" x1="1843" x2="2089"><stop offset="0.002" stop-color="#5093f7"/><stop offset="0.120" stop-color="#5d86f7"/><stop offset="0.360" stop-color="#b76df7"/><stop offset="0.498" stop-color="#ef60f3"/><stop offset="0.685" stop-color="#ec40b1"/><stop offset="0.994" stop-color="#eb347a"/><stop offset="0.998" stop-color="#eb3479"/></linearGradient><linearGradient id="i42" gradientUnits="userSpaceOnUse" x1="1844" x2="2086"><stop offset="0.002" stop-color="#4e8ef7"/><stop offset="0.122" stop-color="#5b81f7"/><stop offset="0.378" stop-color="#b967f7"/><stop offset="0.514" stop-color="#ef5cf3"/><stop offset="0.709" stop-color="#ec3eb2"/><stop offset="0.998" stop-color="#eb347e"/></linearGradient><linearGradient id="i43" gradientUnits="userSpaceOnUse" x1="1845" x2="2083"><stop offset="0.002" stop-color="#4c89f7"/><stop offset="0.128" stop-color="#5a7bf7"/><stop offset="0.414" stop-color="#c161f7"/><stop offset="0.536" stop-color="#ef57f2"/><stop offset="0.737" stop-color="#ec3bb1"/><stop offset="0.998" stop-color="#eb3483"/></linearGradient><linearGradient id="i44" gradientUnits="userSpaceOnUse" x1="1845" x2="2079"><stop offset="0.002" stop-color="#4b84f7"/><stop offset="0.130" stop-color="#5877f6"/><stop offset="0.421" stop-color="#bc5cf7"/><stop offset="0.558" stop-color="#ee53f3"/><stop offset="0.767" stop-color="#ec3ab2"/><stop offset="0.998" stop-color="#eb3489"/></linearGradient><linearGradient id="i45" gradientUnits="userSpaceOnUse" x1="1846" x2="2076"><stop offset="0.002" stop-color="#497ff7"/><stop offset="0.133" stop-color="#5672f6"/><stop offset="0.441" stop-color="#be57f7"/><stop offset="0.580" stop-color="#ee4ff2"/><stop offset="0.802" stop-color="#ec38b0"/><stop offset="0.998" stop-color="#eb348e"/></linearGradient><linearGradient id="i46" gradientUnits="userSpaceOnUse" x1="1846" x2="2073"><stop offset="0.002" stop-color="#477bf6"/><stop offset="0.139" stop-color="#556ef6"/><stop offset="0.469" stop-color="#c252f6"/><stop offset="0.601" stop-color="#ee4bf3"/><stop offset="0.830" stop-color="#ec37b1"/><stop offset="0.998" stop-color="#eb3493"/></linearGradient><linearGradient id="i47" gradientUnits="userSpaceOnUse" x1="1847" x2="2070"><stop offset="0.002" stop-color="#4677f6"/><stop offset="0.141" stop-color="#546af6"/><stop offset="0.491" stop-color="#c34ef6"/><stop offset="0.626" stop-color="#ee47f2"/><stop offset="0.863" stop-color="#ec36b1"/><stop offset="0.998" stop-color="#eb3499"/></linearGradient><linearGradient id="i48" gradientUnits="userSpaceOnUse" x1="1847" x2="2066"><stop offset="0.002" stop-color="#4573f6"/><stop offset="0.144" stop-color="#5266f6"/><stop offset="0.505" stop-color="#c04bf6"/><stop offset="0.651" stop-color="#ee45f2"/><stop offset="0.897" stop-color="#ec35b1"/><stop offset="0.998" stop-color="#eb349f"/></linearGradient><linearGradient id="i49" gradientUnits="userSpaceOnUse" x1="1848" x2="2063"><stop offset="0.002" stop-color="#436ff6"/><stop offset="0.151" stop-color="#5161f6"/><stop offset="0.551" stop-color="#c946f6"/><stop offset="0.677" stop-color="#ee42f1"/><stop offset="0.933" stop-color="#ec35b1"/><stop offset="0.998" stop-color="#eb34a5"/></linearGradient><linearGradient id="i50" gradientUnits="userSpaceOnUse" x1="1848" x2="2060"><stop offset="0.002" stop-color="#426bf6"/><stop offset="0.153" stop-color="#4f5ef6"/><stop offset="0.559" stop-color="#c543f6"/><stop offset="0.700" stop-color="#ee3ff2"/><stop offset="0.965" stop-color="#ec35b1"/><stop offset="0.998" stop-color="#eb34ab"/></linearGradient><linearGradient id="i51" gradientUnits="userSpaceOnUse" x1="1849" x2="2056"><stop offset="0.002" stop-color="#4167f6"/><stop offset="0.162" stop-color="#4f5af6"/><stop offset="0.621" stop-color="#d13ff6"/><stop offset="0.732" stop-color="#ed3df1"/><stop offset="0.998" stop-color="#ec35b3"/></linearGradient><linearGradient id="i52" gradientUnits="userSpaceOnUse" x1="1849" x2="2053"><stop offset="0.002" stop-color="#4064f6"/><stop offset="0.164" stop-color="#4e57f6"/><stop offset="0.630" stop-color="#cc3cf6"/><stop offset="0.757" stop-color="#ed3bf2"/><stop offset="0.998" stop-color="#ec35b9"/></linearGradient><linearGradient id="i53" gradientUnits="userSpaceOnUse" x1="1850" x2="2050"><stop offset="0.003" stop-color="#3e60f6"/><stop offset="0.168" stop-color="#4d53f6"/><stop offset="0.667" stop-color="#d13af6"/><stop offset="0.787" stop-color="#ed3af1"/><stop offset="0.998" stop-color="#ec35c0"/></linearGradient><linearGradient id="i54" gradientUnits="userSpaceOnUse" x1="1851" x2="2046"><stop offset="0.003" stop-color="#3d5df6"/><stop offset="0.177" stop-color="#4d4ff5"/><stop offset="0.685" stop-color="#ce37f6"/><stop offset="0.818" stop-color="#ed39f2"/><stop offset="0.997" stop-color="#ec35c8"/></linearGradient><linearGradient id="i55" gradientUnits="userSpaceOnUse" x1="1851" x2="2043"><stop offset="0.003" stop-color="#3c5af6"/><stop offset="0.180" stop-color="#4b4cf5"/><stop offset="0.690" stop-color="#c835f6"/><stop offset="0.846" stop-color="#ed38f2"/><stop offset="0.997" stop-color="#ec35cf"/></linearGradient><linearGradient id="i56" gradientUnits="userSpaceOnUse" x1="1852" x2="2040"><stop offset="0.003" stop-color="#3c56f6"/><stop offset="0.189" stop-color="#4b49f5"/><stop offset="0.699" stop-color="#c433f6"/><stop offset="0.880" stop-color="#ed37f1"/><stop offset="0.997" stop-color="#ec35d6"/></linearGradient><linearGradient id="i57" gradientUnits="userSpaceOnUse" x1="1852" x2="2036"><stop offset="0.003" stop-color="#3b53f5"/><stop offset="0.193" stop-color="#4a46f5"/><stop offset="0.709" stop-color="#bf31f6"/><stop offset="0.916" stop-color="#ed36f2"/><stop offset="0.997" stop-color="#ed36df"/></linearGradient><linearGradient id="i58" gradientUnits="userSpaceOnUse" x1="1853" x2="2033"><stop offset="0.003" stop-color="#3a50f5"/><stop offset="0.197" stop-color="#4943f5"/><stop offset="0.719" stop-color="#bb30f6"/><stop offset="0.953" stop-color="#ed36f1"/><stop offset="0.997" stop-color="#ed36e7"/></linearGradient><linearGradient id="i59" gradientUnits="userSpaceOnUse" x1="1853" x2="2030"><stop offset="0.003" stop-color="#394ef5"/><stop offset="0.206" stop-color="#4940f5"/><stop offset="0.726" stop-color="#b62ef6"/><stop offset="0.986" stop-color="#ed36f2"/><stop offset="0.997" stop-color="#ed36ef"/></linearGradient><linearGradient id="i60" gradientUnits="userSpaceOnUse" x1="1854" x2="2027"><stop offset="0.003" stop-color="#384bf5"/><stop offset="0.211" stop-color="#483df5"/><stop offset="0.737" stop-color="#b32cf6"/><stop offset="0.997" stop-color="#ec36f7"/></linearGradient><linearGradient id="i61" gradientUnits="userSpaceOnUse" x1="1854" x2="2023"><stop offset="0.003" stop-color="#3848f5"/><stop offset="0.222" stop-color="#473bf5"/><stop offset="0.754" stop-color="#b02bf6"/><stop offset="0.997" stop-color="#e334f7"/></linearGradient><linearGradient id="i62" gradientUnits="userSpaceOnUse" x1="1855" x2="2020"><stop offset="0.003" stop-color="#3745f5"/><stop offset="0.227" stop-color="#4738f5"/><stop offset="0.761" stop-color="#ab29f6"/><stop offset="0.997" stop-color="#db32f6"/></linearGradient><linearGradient id="i63" gradientUnits="userSpaceOnUse" x1="1855" x2="2017"><stop offset="0.003" stop-color="#3743f5"/><stop offset="0.238" stop-color="#4736f5"/><stop offset="0.775" stop-color="#a828f6"/><stop offset="0.997" stop-color="#d430f6"/></linearGradient><linearGradient id="i64" gradientUnits="userSpaceOnUse" x1="1856" x2="2013"><stop offset="0.003" stop-color="#3640f5"/><stop offset="0.245" stop-color="#4633f5"/><stop offset="0.787" stop-color="#a427f6"/><stop offset="0.997" stop-color="#cb2ef6"/></linearGradient><linearGradient id="i65" gradientUnits="userSpaceOnUse" x1="1857" x2="2010"><stop offset="0.003" stop-color="#353ef5"/><stop offset="0.258" stop-color="#4730f5"/><stop offset="0.807" stop-color="#a226f6"/><stop offset="0.997" stop-color="#c42cf6"/></linearGradient><linearGradient id="i66" gradientUnits="userSpaceOnUse" x1="1857" x2="2007"><stop offset="0.003" stop-color="#353cf5"/><stop offset="0.263" stop-color="#452ef5"/><stop offset="0.817" stop-color="#9e24f6"/><stop offset="0.997" stop-color="#bd2af6"/></linearGradient><linearGradient id="i67" gradientUnits="userSpaceOnUse" x1="1858" x2="2003"><stop offset="0.003" stop-color="#3439f5"/><stop offset="0.279" stop-color="#462cf5"/><stop offset="0.838" stop-color="#9b23f5"/><stop offset="0.997" stop-color="#b628f6"/></linearGradient><linearGradient id="i68" gradientUnits="userSpaceOnUse" x1="1858" x2="2000"><stop offset="0.004" stop-color="#3437f5"/><stop offset="0.285" stop-color="#452af5"/><stop offset="0.849" stop-color="#9822f5"/><stop offset="0.996" stop-color="#af27f6"/></linearGradient><linearGradient id="i69" gradientUnits="userSpaceOnUse" x1="1859" x2="1997"><stop offset="0.004" stop-color="#3435f5"/><stop offset="0.301" stop-color="#4528f5"/><stop offset="0.873" stop-color="#9622f5"/><stop offset="0.996" stop-color="#a925f6"/></linearGradient><linearGradient id="i70" gradientUnits="userSpaceOnUse" x1="1859" x2="1994"><stop offset="0.004" stop-color="#3333f5"/><stop offset="0.307" stop-color="#4426f5"/><stop offset="0.885" stop-color="#9321f5"/><stop offset="0.996" stop-color="#a324f6"/></linearGradient><linearGradient id="i71" gradientUnits="userSpaceOnUse" x1="1860" x2="1990"><stop offset="0.004" stop-color="#3331f5"/><stop offset="0.327" stop-color="#4524f5"/><stop offset="0.919" stop-color="#9120f5"/><stop offset="0.996" stop-color="#9c22f5"/></linearGradient><linearGradient id="i72" gradientUnits="userSpaceOnUse" x1="1860" x2="1987"><stop offset="0.004" stop-color="#322ff5"/><stop offset="0.335" stop-color="#4422f5"/><stop offset="0.941" stop-color="#8f1ff5"/><stop offset="0.996" stop-color="#9721f5"/></linearGradient><linearGradient id="i73" gradientUnits="userSpaceOnUse" x1="1861" x2="1984"><stop offset="0.004" stop-color="#322df5"/><stop offset="0.354" stop-color="#4420f5"/><stop offset="0.972" stop-color="#8e1ff5"/><stop offset="0.996" stop-color="#9120f5"/></linearGradient><linearGradient id="i74" gradientUnits="userSpaceOnUse" x1="1861" x2="1980"><stop offset="0.004" stop-color="#322bf5"/><stop offset="0.366" stop-color="#431ef5"/><stop offset="0.996" stop-color="#8b1ef5"/></linearGradient><linearGradient id="i75" gradientUnits="userSpaceOnUse" x1="1862" x2="1977"><stop offset="0.004" stop-color="#3229f5"/><stop offset="0.387" stop-color="#441df5"/><stop offset="0.996" stop-color="#861df5"/></linearGradient><linearGradient id="i76" gradientUnits="userSpaceOnUse" x1="1863" x2="1974"><stop offset="0.005" stop-color="#3127f5"/><stop offset="0.410" stop-color="#441bf5"/><stop offset="0.995" stop-color="#811cf5"/></linearGradient><linearGradient id="i77" gradientUnits="userSpaceOnUse" x1="1863" x2="1970"><stop offset="0.005" stop-color="#3126f5"/><stop offset="0.425" stop-color="#431af5"/><stop offset="0.995" stop-color="#7b1bf5"/></linearGradient><linearGradient id="i78" gradientUnits="userSpaceOnUse" x1="1864" x2="1967"><stop offset="0.005" stop-color="#3124f5"/><stop offset="0.451" stop-color="#4418f5"/><stop offset="0.995" stop-color="#761af5"/></linearGradient><linearGradient id="i79" gradientUnits="userSpaceOnUse" x1="1864" x2="1964"><stop offset="0.005" stop-color="#3122f5"/><stop offset="0.465" stop-color="#4317f5"/><stop offset="0.995" stop-color="#7119f5"/></linearGradient><linearGradient id="i80" gradientUnits="userSpaceOnUse" x1="1865" x2="1960"><stop offset="0.005" stop-color="#3021f5"/><stop offset="0.500" stop-color="#4416f5"/><stop offset="0.995" stop-color="#6c18f5"/></linearGradient><linearGradient id="i81" gradientUnits="userSpaceOnUse" x1="1865" x2="1957"><stop offset="0.005" stop-color="#301ff5"/><stop offset="0.516" stop-color="#4315f5"/><stop offset="0.995" stop-color="#6817f5"/></linearGradient><linearGradient id="i82" gradientUnits="userSpaceOnUse" x1="1866" x2="1954"><stop offset="0.006" stop-color="#301ef5"/><stop offset="0.551" stop-color="#4314f5"/><stop offset="0.994" stop-color="#6416f5"/></linearGradient><linearGradient id="i83" gradientUnits="userSpaceOnUse" x1="1866" x2="1951"><stop offset="0.006" stop-color="#301cf5"/><stop offset="0.571" stop-color="#4213f5"/><stop offset="0.994" stop-color="#6015f5"/></linearGradient><linearGradient id="i84" gradientUnits="userSpaceOnUse" x1="1867" x2="1947"><stop offset="0.006" stop-color="#301bf5"/><stop offset="0.619" stop-color="#4312f5"/><stop offset="0.994" stop-color="#5b14f5"/></linearGradient><linearGradient id="i85" gradientUnits="userSpaceOnUse" x1="1867" x2="1944"><stop offset="0.006" stop-color="#301af5"/><stop offset="0.643" stop-color="#4211f5"/><stop offset="0.994" stop-color="#5713f5"/></linearGradient><linearGradient id="i86" gradientUnits="userSpaceOnUse" x1="1868" x2="1941"><stop offset="0.007" stop-color="#2f18f5"/><stop offset="0.692" stop-color="#4311f5"/><stop offset="0.993" stop-color="#5413f5"/></linearGradient><linearGradient id="i87" gradientUnits="userSpaceOnUse" x1="1869" x2="1937"><stop offset="0.007" stop-color="#2f17f5"/><stop offset="0.757" stop-color="#4310f5"/><stop offset="0.993" stop-color="#4f12f5"/></linearGradient><linearGradient id="i88" gradientUnits="userSpaceOnUse" x1="1869" x2="1934"><stop offset="0.008" stop-color="#2f16f5"/><stop offset="0.792" stop-color="#4310f5"/><stop offset="0.992" stop-color="#4c11f5"/></linearGradient><linearGradient id="i89" gradientUnits="userSpaceOnUse" x1="1870" x2="1931"><stop offset="0.008" stop-color="#2f15f5"/><stop offset="0.861" stop-color="#4310f5"/><stop offset="0.992" stop-color="#4911f5"/></linearGradient><linearGradient id="i90" gradientUnits="userSpaceOnUse" x1="1870" x2="1927"><stop offset="0.009" stop-color="#2f14f5"/><stop offset="0.939" stop-color="#4310f5"/><stop offset="0.991" stop-color="#4510f5"/></linearGradient><linearGradient id="i91" gradientUnits="userSpaceOnUse" x1="1871" x2="1924"><stop offset="0.009" stop-color="#2f13f5"/><stop offset="0.991" stop-color="#4210f5"/></linearGradient><linearGradient id="i92" gradientUnits="userSpaceOnUse" x1="1871" x2="1921"><stop offset="0.010" stop-color="#2f12f5"/><stop offset="0.990" stop-color="#400ff5"/></linearGradient><linearGradient id="i93" gradientUnits="userSpaceOnUse" x1="1872" x2="1918"><stop offset="0.011" stop-color="#2f11f5"/><stop offset="0.989" stop-color="#3d0ff5"/></linearGradient><linearGradient id="i94" gradientUnits="userSpaceOnUse" x1="1872" x2="1914"><stop offset="0.012" stop-color="#2f10f5"/><stop offset="0.988" stop-color="#3a0ff5"/></linearGradient><linearGradient id="i95" gradientUnits="userSpaceOnUse" x1="1873" x2="1911"><stop offset="0.013" stop-color="#2f10f5"/><stop offset="0.987" stop-color="#380ef5"/></linearGradient><linearGradient id="i96" gradientUnits="userSpaceOnUse" x1="1873" x2="1908"><stop offset="0.014" stop-color="#2f0ff5"/><stop offset="0.986" stop-color="#370ef5"/></linearGradient><linearGradient id="i97" gradientUnits="userSpaceOnUse" x1="1874" x2="1904"><stop offset="0.017" stop-color="#2f0ff5"/><stop offset="0.983" stop-color="#340ef5"/></linearGradient><linearGradient id="i98" gradientUnits="userSpaceOnUse" x1="1875" x2="1901"><stop offset="0.019" stop-color="#2f0ef5"/><stop offset="0.981" stop-color="#330df5"/></linearGradient><linearGradient id="i99" gradientUnits="userSpaceOnUse" x1="1875" x2="1898"><stop offset="0.022" stop-color="#2f0ef5"/><stop offset="0.978" stop-color="#320df5"/></linearGradient><linearGradient id="i100" gradientUnits="userSpaceOnUse" x1="1876" x2="1894"><stop offset="0.028" stop-color="#2f0df5"/><stop offset="0.972" stop-color="#300df5"/></linearGradient><linearGradient id="i101" gradientUnits="userSpaceOnUse" x1="1876" x2="1891"><stop offset="0.033" stop-color="#2f0df5"/><stop offset="0.967" stop-color="#300df5"/></linearGradient><linearGradient id="i102" gradientUnits="userSpaceOnUse" x1="1877" x2="1888"><stop offset="0.045" stop-color="#2f0df5"/><stop offset="0.955" stop-color="#2f0df5"/></linearGradient><linearGradient id="i103" gradientUnits="userSpaceOnUse" x1="1877" x2="1884"><stop offset="0.071" stop-color="#2f0df5"/><stop offset="0.929" stop-color="#2f0df5"/></linearGradient></defs><g clip-path="url(#hs)"><rect x="1709" y="397" width="84" height="4" fill="url(#o0)"/><rect x="1700" y="401" width="128" height="4" fill="url(#o1)"/><rect x="1694" y="405" width="166" height="4" fill="url(#o2)"/><rect x="1692" y="409" width="198" height="4" fill="url(#o3)"/><rect x="1689" y="413" width="231" height="4" fill="url(#o4)"/><rect x="1687" y="417" width="262" height="4" fill="url(#o5)"/><rect x="1686" y="421" width="292" height="4" fill="url(#o6)"/><rect x="1685" y="425" width="323" height="4" fill="url(#o7)"/><rect x="1684" y="429" width="353" height="4" fill="url(#o8)"/><rect x="1684" y="433" width="382" height="4" fill="url(#o9)"/><rect x="1683" y="437" width="413" height="4" fill="url(#o10)"/><rect x="1683" y="441" width="442" height="4" fill="url(#o11)"/><rect x="1683" y="445" width="471" height="4" fill="url(#o12)"/><rect x="1683" y="449" width="501" height="4" fill="url(#o13)"/><rect x="1683" y="453" width="530" height="4" fill="url(#o14)"/><rect x="1684" y="457" width="558" height="4" fill="url(#o15)"/><rect x="1684" y="461" width="588" height="4" fill="url(#o16)"/><rect x="1684" y="465" width="617" height="4" fill="url(#o17)"/><rect x="1685" y="469" width="645" height="4" fill="url(#o18)"/><rect x="1685" y="473" width="675" height="4" fill="url(#o19)"/><rect x="1686" y="477" width="698" height="4" fill="url(#o20)"/><rect x="1686" y="481" width="698" height="4" fill="url(#o21)"/><rect x="1687" y="485" width="693" height="4" fill="url(#o22)"/><rect x="1688" y="489" width="689" height="4" fill="url(#o23)"/><rect x="1689" y="493" width="685" height="4" fill="url(#o24)"/><rect x="1690" y="497" width="680" height="4" fill="url(#o25)"/><rect x="1691" y="501" width="676" height="4" fill="url(#o26)"/><rect x="1692" y="505" width="672" height="4" fill="url(#o27)"/><rect x="1692" y="509" width="669" height="4" fill="url(#o28)"/><rect x="1693" y="513" width="664" height="4" fill="url(#o29)"/><rect x="1694" y="517" width="660" height="4" fill="url(#o30)"/><rect x="1695" y="521" width="656" height="4" fill="url(#o31)"/><rect x="1697" y="525" width="651" height="4" fill="url(#o32)"/><rect x="1698" y="529" width="646" height="4" fill="url(#o33)"/><rect x="1699" y="533" width="642" height="4" fill="url(#o34)"/><rect x="1700" y="537" width="638" height="4" fill="url(#o35)"/><rect x="1701" y="541" width="633" height="4" fill="url(#o36)"/><rect x="1703" y="545" width="628" height="4" fill="url(#o37)"/><rect x="1704" y="549" width="624" height="4" fill="url(#o38)"/><rect x="1705" y="553" width="620" height="4" fill="url(#o39)"/><rect x="1706" y="557" width="615" height="4" fill="url(#o40)"/><rect x="1708" y="561" width="610" height="4" fill="url(#o41)"/><rect x="1709" y="565" width="606" height="4" fill="url(#o42)"/><rect x="1710" y="569" width="601" height="4" fill="url(#o43)"/><rect x="1711" y="573" width="597" height="4" fill="url(#o44)"/><rect x="1712" y="577" width="593" height="4" fill="url(#o45)"/><rect x="1714" y="581" width="588" height="4" fill="url(#o46)"/><rect x="1715" y="585" width="583" height="4" fill="url(#o47)"/><rect x="1717" y="589" width="578" height="4" fill="url(#o48)"/><rect x="1719" y="593" width="573" height="4" fill="url(#o49)"/><rect x="1720" y="597" width="569" height="4" fill="url(#o50)"/><rect x="1722" y="601" width="563" height="4" fill="url(#o51)"/><rect x="1723" y="605" width="559" height="4" fill="url(#o52)"/><rect x="1725" y="609" width="554" height="4" fill="url(#o53)"/><rect x="1726" y="613" width="549" height="4" fill="url(#o54)"/><rect x="1728" y="617" width="544" height="4" fill="url(#o55)"/><rect x="1729" y="621" width="540" height="4" fill="url(#o56)"/><rect x="1731" y="625" width="535" height="4" fill="url(#o57)"/><rect x="1732" y="629" width="530" height="4" fill="url(#o58)"/><rect x="1734" y="633" width="525" height="4" fill="url(#o59)"/><rect x="1735" y="637" width="521" height="4" fill="url(#o60)"/><rect x="1737" y="641" width="515" height="4" fill="url(#o61)"/><rect x="1738" y="645" width="511" height="4" fill="url(#o62)"/><rect x="1740" y="649" width="506" height="4" fill="url(#o63)"/><rect x="1742" y="653" width="501" height="4" fill="url(#o64)"/><rect x="1744" y="657" width="495" height="4" fill="url(#o65)"/><rect x="1746" y="661" width="490" height="4" fill="url(#o66)"/><rect x="1747" y="665" width="486" height="4" fill="url(#o67)"/><rect x="1749" y="669" width="481" height="4" fill="url(#o68)"/><rect x="1751" y="673" width="475" height="4" fill="url(#o69)"/><rect x="1753" y="677" width="470" height="4" fill="url(#o70)"/><rect x="1755" y="681" width="465" height="4" fill="url(#o71)"/><rect x="1757" y="685" width="459" height="4" fill="url(#o72)"/><rect x="1759" y="689" width="454" height="4" fill="url(#o73)"/><rect x="1760" y="693" width="450" height="4" fill="url(#o74)"/><rect x="1762" y="697" width="445" height="4" fill="url(#o75)"/><rect x="1764" y="701" width="439" height="4" fill="url(#o76)"/><rect x="1766" y="705" width="434" height="4" fill="url(#o77)"/><rect x="1768" y="709" width="429" height="4" fill="url(#o78)"/><rect x="1770" y="713" width="423" height="4" fill="url(#o79)"/><rect x="1772" y="717" width="418" height="4" fill="url(#o80)"/><rect x="1774" y="721" width="413" height="4" fill="url(#o81)"/><rect x="1776" y="725" width="408" height="4" fill="url(#o82)"/><rect x="1778" y="729" width="402" height="4" fill="url(#o83)"/><rect x="1780" y="733" width="397" height="4" fill="url(#o84)"/><rect x="1782" y="737" width="392" height="4" fill="url(#o85)"/><rect x="1784" y="741" width="387" height="4" fill="url(#o86)"/><rect x="1786" y="745" width="381" height="4" fill="url(#o87)"/><rect x="1788" y="749" width="376" height="4" fill="url(#o88)"/><rect x="1790" y="753" width="371" height="4" fill="url(#o89)"/><rect x="1792" y="757" width="365" height="4" fill="url(#o90)"/><rect x="1795" y="761" width="359" height="4" fill="url(#o91)"/><rect x="1797" y="765" width="354" height="4" fill="url(#o92)"/><rect x="1799" y="769" width="349" height="4" fill="url(#o93)"/><rect x="1801" y="773" width="343" height="4" fill="url(#o94)"/><rect x="1803" y="777" width="338" height="4" fill="url(#o95)"/><rect x="1805" y="781" width="333" height="4" fill="url(#o96)"/><rect x="1807" y="785" width="327" height="4" fill="url(#o97)"/><rect x="1809" y="789" width="322" height="4" fill="url(#o98)"/><rect x="1812" y="793" width="316" height="4" fill="url(#o99)"/><rect x="1814" y="797" width="311" height="4" fill="url(#o100)"/><rect x="1816" y="801" width="305" height="4" fill="url(#o101)"/><rect x="1819" y="805" width="299" height="4" fill="url(#o102)"/><rect x="1821" y="809" width="294" height="4" fill="url(#o103)"/><rect x="1824" y="813" width="288" height="4" fill="url(#o104)"/><rect x="1826" y="817" width="282" height="4" fill="url(#o105)"/><rect x="1828" y="821" width="277" height="4" fill="url(#o106)"/><rect x="1831" y="825" width="271" height="4" fill="url(#o107)"/><rect x="1833" y="829" width="265" height="4" fill="url(#o108)"/><rect x="1836" y="833" width="259" height="4" fill="url(#o109)"/><rect x="1838" y="837" width="254" height="4" fill="url(#o110)"/><rect x="1841" y="841" width="248" height="4" fill="url(#o111)"/><rect x="1843" y="845" width="242" height="4" fill="url(#o112)"/><rect x="1846" y="849" width="236" height="4" fill="url(#o113)"/><rect x="1849" y="853" width="230" height="4" fill="url(#o114)"/><rect x="1851" y="857" width="224" height="4" fill="url(#o115)"/><rect x="1854" y="861" width="218" height="4" fill="url(#o116)"/><rect x="1857" y="865" width="212" height="4" fill="url(#o117)"/><rect x="1860" y="869" width="206" height="4" fill="url(#o118)"/><rect x="1863" y="873" width="199" height="4" fill="url(#o119)"/><rect x="1865" y="877" width="194" height="4" fill="url(#o120)"/><rect x="1868" y="881" width="188" height="4" fill="url(#o121)"/><rect x="1871" y="885" width="182" height="4" fill="url(#o122)"/><rect x="1874" y="889" width="175" height="4" fill="url(#o123)"/><rect x="1878" y="893" width="168" height="4" fill="url(#o124)"/><rect x="1881" y="897" width="162" height="4" fill="url(#o125)"/><rect x="1884" y="901" width="155" height="4" fill="url(#o126)"/><rect x="1888" y="905" width="148" height="4" fill="url(#o127)"/><rect x="1891" y="909" width="142" height="4" fill="url(#o128)"/><rect x="1895" y="913" width="135" height="4" fill="url(#o129)"/><rect x="1898" y="917" width="128" height="4" fill="url(#o130)"/><rect x="1902" y="921" width="121" height="4" fill="url(#o131)"/><rect x="1906" y="925" width="114" height="4" fill="url(#o132)"/><rect x="1909" y="929" width="107" height="4" fill="url(#o133)"/><rect x="1914" y="933" width="99" height="4" fill="url(#o134)"/><rect x="1918" y="937" width="92" height="4" fill="url(#o135)"/><rect x="1922" y="941" width="85" height="4" fill="url(#o136)"/><rect x="1926" y="945" width="77" height="4" fill="url(#o137)"/><rect x="1930" y="949" width="70" height="4" fill="url(#o138)"/><rect x="1934" y="953" width="63" height="4" fill="url(#o139)"/><rect x="1938" y="957" width="56" height="4" fill="url(#o140)"/><rect x="1942" y="961" width="48" height="4" fill="url(#o141)"/><rect x="1946" y="965" width="41" height="4" fill="url(#o142)"/><rect x="1950" y="969" width="34" height="4" fill="url(#o143)"/><rect x="1954" y="973" width="26" height="4" fill="url(#o144)"/><rect x="1958" y="977" width="19" height="4" fill="url(#o145)"/><rect x="1963" y="981" width="11" height="4" fill="url(#o146)"/></g><path d="M1971.0,982.0 L1971.0,982.0 L1970.9,982.0 L1970.9,982.0 L1970.9,982.0 L1970.8,982.0 L1970.8,982.1 L1970.7,982.1 L1970.7,982.2 L1970.6,982.3 L1970.6,982.3 L1970.5,982.4 L1970.4,982.4 L1970.4,982.3 L1970.3,982.3 L1970.2,982.3 L1970.1,982.4 L1970.0,982.5 L1970.0,982.6 L1969.9,982.6 L1969.8,982.7 L1969.7,982.7 L1969.6,982.7 L1969.5,982.7 L1969.3,982.7 L1969.2,982.7 L1969.1,982.7 L1968.9,982.7 L1968.8,982.7 L1968.6,982.7 L1968.5,982.7 L1968.3,982.7 L1968.1,982.7 L1968.0,982.8 L1967.8,982.8 L1967.5,982.7 L1967.3,982.6 L1967.0,982.4 L1966.6,982.2 L1966.3,982.0 L1965.9,981.7 L1965.4,981.4 L1964.8,980.9 L1964.2,980.5 L1963.6,980.0 L1962.9,979.4 L1962.3,978.8 L1961.5,978.2 L1960.8,977.5 L1959.9,976.7 L1959.0,975.8 L1958.0,974.9 L1957.0,973.9 L1955.8,972.8 L1954.6,971.6 L1953.4,970.4 L1952.0,969.1 L1950.7,967.7 L1949.3,966.2 L1947.8,964.7 L1946.2,963.1 L1944.6,961.5 L1942.9,959.8 L1941.1,958.1 L1939.2,956.2 L1937.2,954.3 L1935.0,952.2 L1932.7,950.0 L1930.4,947.7 L1927.9,945.3 L1925.3,942.7 L1922.7,940.1 L1919.9,937.5 L1917.1,934.7 L1914.1,931.7 L1911.0,928.6 L1907.8,925.2 L1904.4,921.7 L1900.9,918.0 L1897.3,914.1 L1893.5,909.8 L1889.7,905.4 L1885.7,900.8 L1881.6,895.9 L1877.2,890.5 L1872.5,884.4 L1867.4,877.5 L1862.1,870.1 L1856.4,862.1 L1850.6,853.6 L1844.6,844.4 L1838.4,834.6 L1831.9,824.2 L1825.3,813.3 L1818.5,801.7 L1811.6,789.7 L1804.6,777.1 L1797.5,763.7 L1790.2,749.9 L1783.0,735.8 L1775.9,721.7 L1768.8,707.3 L1761.7,692.5 L1754.6,677.6 L1747.8,662.7 L1741.5,648.1 L1735.5,633.6 L1729.8,619.1 L1724.4,604.8 L1719.3,590.8 L1714.6,577.4 L1710.2,564.6 L1706.2,552.1 L1702.6,540.1 L1699.3,528.6 L1696.3,517.9 L1693.8,507.8 L1691.6,498.4 L1689.7,489.6 L1688.2,481.4 L1686.9,473.6 L1685.9,466.4 L1685.2,459.9 L1684.8,453.8 L1684.6,448.1 L1684.6,442.8 L1684.9,437.8 L1685.4,433.3 L1686.1,429.1 L1687.1,425.2 L1688.2,421.6 L1689.5,418.3 L1691.1,415.4 L1692.9,412.7 L1694.8,410.3 L1696.8,408.2 L1698.9,406.3 L1701.3,404.8 L1703.7,403.4 L1706.3,402.3 L1708.9,401.3 L1711.6,400.5 L1714.5,399.9 L1717.4,399.5 L1720.4,399.1 L1723.4,398.8 L1726.4,398.5 L1729.6,398.4 L1732.8,398.3 L1736.0,398.2 L1739.1,398.2 L1742.3,398.1 L1745.5,398.2 L1748.7,398.2 L1751.9,398.3 L1755.2,398.4 L1758.4,398.5 L1761.7,398.7 L1765.0,398.9 L1768.4,399.1 L1771.9,399.3 L1775.3,399.6 L1778.9,399.9 L1782.5,400.2 L1786.1,400.5 L1789.8,400.9 L1793.6,401.2 L1797.5,401.6 L1801.4,402.1 L1805.3,402.5 L1809.4,403.0 L1813.5,403.4 L1817.7,403.9 L1822.0,404.5 L1826.4,405.0 L1830.9,405.5 L1835.5,406.1 L1840.1,406.7 L1844.9,407.3 L1849.7,407.9 L1854.7,408.6 L1859.8,409.2 L1864.9,409.9 L1870.2,410.6 L1875.6,411.3 L1881.0,412.1 L1886.6,412.8 L1892.4,413.6 L1898.2,414.4 L1904.1,415.2 L1910.2,416.0 L1916.4,416.8 L1922.7,417.7 L1929.1,418.5 L1935.6,419.4 L1942.3,420.3 L1949.0,421.3 L1955.9,422.2 L1962.9,423.2 L1970.0,424.1 L1977.2,425.1 L1984.5,426.1 L1992.0,427.1 L1999.5,428.2 L2007.2,429.2 L2014.9,430.3 L2022.7,431.3 L2030.7,432.4 L2038.7,433.5 L2046.7,434.6 L2054.8,435.7 L2063.0,436.8 L2071.2,437.9 L2079.4,439.1 L2087.6,440.2 L2095.8,441.3 L2103.8,442.4 L2111.8,443.5 L2119.7,444.6 L2127.6,445.7 L2135.5,446.7 L2143.4,447.8 L2151.2,448.9 L2159.0,449.9 L2166.7,451.0 L2174.2,452.0 L2181.5,453.0 L2188.6,453.9 L2195.6,454.9 L2202.5,455.8 L2209.2,456.7 L2215.7,457.6 L2222.1,458.5 L2228.3,459.3 L2234.3,460.2 L2240.1,461.0 L2245.8,461.7 L2251.2,462.5 L2256.5,463.2 L2261.5,463.9 L2266.5,464.6 L2271.2,465.2 L2275.8,465.8 L2280.2,466.4 L2284.4,467.0 L2288.5,467.6 L2292.5,468.1 L2296.3,468.6 L2300.0,469.1 L2303.6,469.6 L2307.1,470.1 L2310.5,470.6 L2313.9,471.0 L2317.1,471.5 L2320.2,471.9 L2323.2,472.3 L2326.2,472.7 L2329.0,473.1 L2331.7,473.5 L2334.4,473.8 L2336.9,474.2 L2339.3,474.5 L2341.6,474.8 L2343.8,475.1 L2345.9,475.4 L2347.9,475.7 L2349.8,475.9 L2351.6,476.2 L2353.3,476.4 L2354.9,476.6 L2356.5,476.8 L2357.9,477.0 L2359.3,477.2 L2360.7,477.4 L2361.9,477.6 L2363.1,477.7 L2364.3,477.9 L2365.3,478.0 L2366.3,478.2 L2367.2,478.3 L2368.1,478.4 L2368.9,478.5 L2369.6,478.6 L2370.2,478.7 L2370.8,478.8 L2371.4,478.9 L2371.9,479.0 L2372.5,479.0 L2373.0,479.1 L2373.5,479.2 L2374.0,479.2 L2374.5,479.3 L2374.9,479.4 L2375.3,479.4 L2375.7,479.5 L2376.1,479.5 L2376.5,479.6 L2377.0,479.6 L2377.4,479.7 L2377.8,479.8 L2378.2,479.8 L2378.6,479.9 L2379.0,479.9 L2379.4,480.0 L2379.7,480.0 L2380.0,480.1 L2380.3,480.1 L2380.6,480.1 L2380.8,480.2 L2381.0,480.2 L2381.2,480.2 L2381.4,480.3 L2381.5,480.3 L2381.6,480.3 L2381.7,480.3 L2381.8,480.3 L2381.9,480.3 L2382.0,480.3 L2382.1,480.3 L2382.1,480.3 L2382.1,480.4Z" fill="none" stroke="rgba(10,14,10,0.45)" stroke-width="2.4"/><g clip-path="url(#tr)"><rect x="1821" y="422" width="31" height="4" fill="url(#i0)"/><rect x="1822" y="426" width="66" height="4" fill="url(#i1)"/><rect x="1822" y="430" width="102" height="4" fill="url(#i2)"/><rect x="1823" y="434" width="137" height="4" fill="url(#i3)"/><rect x="1823" y="438" width="173" height="4" fill="url(#i4)"/><rect x="1824" y="442" width="208" height="4" fill="url(#i5)"/><rect x="1824" y="446" width="244" height="4" fill="url(#i6)"/><rect x="1825" y="450" width="279" height="4" fill="url(#i7)"/><rect x="1825" y="454" width="315" height="4" fill="url(#i8)"/><rect x="1826" y="458" width="350" height="4" fill="url(#i9)"/><rect x="1827" y="462" width="363" height="4" fill="url(#i10)"/><rect x="1827" y="466" width="361" height="4" fill="url(#i11)"/><rect x="1828" y="470" width="357" height="4" fill="url(#i12)"/><rect x="1828" y="474" width="354" height="4" fill="url(#i13)"/><rect x="1829" y="478" width="350" height="4" fill="url(#i14)"/><rect x="1829" y="482" width="346" height="4" fill="url(#i15)"/><rect x="1830" y="486" width="342" height="4" fill="url(#i16)"/><rect x="1830" y="490" width="339" height="4" fill="url(#i17)"/><rect x="1831" y="494" width="334" height="4" fill="url(#i18)"/><rect x="1831" y="498" width="331" height="4" fill="url(#i19)"/><rect x="1832" y="502" width="327" height="4" fill="url(#i20)"/><rect x="1833" y="506" width="322" height="4" fill="url(#i21)"/><rect x="1833" y="510" width="319" height="4" fill="url(#i22)"/><rect x="1834" y="514" width="315" height="4" fill="url(#i23)"/><rect x="1834" y="518" width="312" height="4" fill="url(#i24)"/><rect x="1835" y="522" width="307" height="4" fill="url(#i25)"/><rect x="1835" y="526" width="304" height="4" fill="url(#i26)"/><rect x="1836" y="530" width="300" height="4" fill="url(#i27)"/><rect x="1836" y="534" width="296" height="4" fill="url(#i28)"/><rect x="1837" y="538" width="292" height="4" fill="url(#i29)"/><rect x="1837" y="542" width="289" height="4" fill="url(#i30)"/><rect x="1838" y="546" width="284" height="4" fill="url(#i31)"/><rect x="1839" y="550" width="280" height="4" fill="url(#i32)"/><rect x="1839" y="554" width="277" height="4" fill="url(#i33)"/><rect x="1840" y="558" width="272" height="4" fill="url(#i34)"/><rect x="1840" y="562" width="269" height="4" fill="url(#i35)"/><rect x="1841" y="566" width="265" height="4" fill="url(#i36)"/><rect x="1841" y="570" width="262" height="4" fill="url(#i37)"/><rect x="1842" y="574" width="257" height="4" fill="url(#i38)"/><rect x="1842" y="578" width="254" height="4" fill="url(#i39)"/><rect x="1843" y="582" width="250" height="4" fill="url(#i40)"/><rect x="1843" y="586" width="246" height="4" fill="url(#i41)"/><rect x="1844" y="590" width="242" height="4" fill="url(#i42)"/><rect x="1845" y="594" width="238" height="4" fill="url(#i43)"/><rect x="1845" y="598" width="234" height="4" fill="url(#i44)"/><rect x="1846" y="602" width="230" height="4" fill="url(#i45)"/><rect x="1846" y="606" width="227" height="4" fill="url(#i46)"/><rect x="1847" y="610" width="223" height="4" fill="url(#i47)"/><rect x="1847" y="614" width="219" height="4" fill="url(#i48)"/><rect x="1848" y="618" width="215" height="4" fill="url(#i49)"/><rect x="1848" y="622" width="212" height="4" fill="url(#i50)"/><rect x="1849" y="626" width="207" height="4" fill="url(#i51)"/><rect x="1849" y="630" width="204" height="4" fill="url(#i52)"/><rect x="1850" y="634" width="200" height="4" fill="url(#i53)"/><rect x="1851" y="638" width="195" height="4" fill="url(#i54)"/><rect x="1851" y="642" width="192" height="4" fill="url(#i55)"/><rect x="1852" y="646" width="188" height="4" fill="url(#i56)"/><rect x="1852" y="650" width="184" height="4" fill="url(#i57)"/><rect x="1853" y="654" width="180" height="4" fill="url(#i58)"/><rect x="1853" y="658" width="177" height="4" fill="url(#i59)"/><rect x="1854" y="662" width="173" height="4" fill="url(#i60)"/><rect x="1854" y="666" width="169" height="4" fill="url(#i61)"/><rect x="1855" y="670" width="165" height="4" fill="url(#i62)"/><rect x="1855" y="674" width="162" height="4" fill="url(#i63)"/><rect x="1856" y="678" width="157" height="4" fill="url(#i64)"/><rect x="1857" y="682" width="153" height="4" fill="url(#i65)"/><rect x="1857" y="686" width="150" height="4" fill="url(#i66)"/><rect x="1858" y="690" width="145" height="4" fill="url(#i67)"/><rect x="1858" y="694" width="142" height="4" fill="url(#i68)"/><rect x="1859" y="698" width="138" height="4" fill="url(#i69)"/><rect x="1859" y="702" width="135" height="4" fill="url(#i70)"/><rect x="1860" y="706" width="130" height="4" fill="url(#i71)"/><rect x="1860" y="710" width="127" height="4" fill="url(#i72)"/><rect x="1861" y="714" width="123" height="4" fill="url(#i73)"/><rect x="1861" y="718" width="119" height="4" fill="url(#i74)"/><rect x="1862" y="722" width="115" height="4" fill="url(#i75)"/><rect x="1863" y="726" width="111" height="4" fill="url(#i76)"/><rect x="1863" y="730" width="107" height="4" fill="url(#i77)"/><rect x="1864" y="734" width="103" height="4" fill="url(#i78)"/><rect x="1864" y="738" width="100" height="4" fill="url(#i79)"/><rect x="1865" y="742" width="95" height="4" fill="url(#i80)"/><rect x="1865" y="746" width="92" height="4" fill="url(#i81)"/><rect x="1866" y="750" width="88" height="4" fill="url(#i82)"/><rect x="1866" y="754" width="85" height="4" fill="url(#i83)"/><rect x="1867" y="758" width="80" height="4" fill="url(#i84)"/><rect x="1867" y="762" width="77" height="4" fill="url(#i85)"/><rect x="1868" y="766" width="73" height="4" fill="url(#i86)"/><rect x="1869" y="770" width="68" height="4" fill="url(#i87)"/><rect x="1869" y="774" width="65" height="4" fill="url(#i88)"/><rect x="1870" y="778" width="61" height="4" fill="url(#i89)"/><rect x="1870" y="782" width="57" height="4" fill="url(#i90)"/><rect x="1871" y="786" width="53" height="4" fill="url(#i91)"/><rect x="1871" y="790" width="50" height="4" fill="url(#i92)"/><rect x="1872" y="794" width="46" height="4" fill="url(#i93)"/><rect x="1872" y="798" width="42" height="4" fill="url(#i94)"/><rect x="1873" y="802" width="38" height="4" fill="url(#i95)"/><rect x="1873" y="806" width="35" height="4" fill="url(#i96)"/><rect x="1874" y="810" width="30" height="4" fill="url(#i97)"/><rect x="1875" y="814" width="26" height="4" fill="url(#i98)"/><rect x="1875" y="818" width="23" height="4" fill="url(#i99)"/><rect x="1876" y="822" width="18" height="4" fill="url(#i100)"/><rect x="1876" y="826" width="15" height="4" fill="url(#i101)"/><rect x="1877" y="830" width="11" height="4" fill="url(#i102)"/><rect x="1877" y="834" width="7" height="4" fill="url(#i103)"/></g></svg>
<div style="position:absolute;left:2184.5px;top:804.5px;width:196.25px;height:187.10000000000002px;background:#262626"></div>
<svg style="position:absolute;left:0;top:0" width="2560" height="1375"><defs><linearGradient id="n0" gradientUnits="userSpaceOnUse" x1="2188" x2="2378"><stop offset="0.003" stop-color="#abfcaf"/><stop offset="0.550" stop-color="#fffcb4"/><stop offset="0.955" stop-color="#f6bf8c"/><stop offset="0.997" stop-color="#f5ba89"/></linearGradient><linearGradient id="n1" gradientUnits="userSpaceOnUse" x1="2188" x2="2378"><stop offset="0.003" stop-color="#abfcb1"/><stop offset="0.550" stop-color="#fffcb8"/><stop offset="0.955" stop-color="#f6be8e"/><stop offset="0.997" stop-color="#f5b98b"/></linearGradient><linearGradient id="n2" gradientUnits="userSpaceOnUse" x1="2188" x2="2378"><stop offset="0.003" stop-color="#abfcb4"/><stop offset="0.550" stop-color="#fffcbb"/><stop offset="0.955" stop-color="#f6be91"/><stop offset="0.997" stop-color="#f5b98d"/></linearGradient><linearGradient id="n3" gradientUnits="userSpaceOnUse" x1="2188" x2="2378"><stop offset="0.003" stop-color="#abfcb7"/><stop offset="0.545" stop-color="#fffcbe"/><stop offset="0.945" stop-color="#f6bf94"/><stop offset="0.997" stop-color="#f5b990"/></linearGradient><linearGradient id="n4" gradientUnits="userSpaceOnUse" x1="2188" x2="2378"><stop offset="0.003" stop-color="#abfcba"/><stop offset="0.545" stop-color="#fffcc1"/><stop offset="0.945" stop-color="#f6be96"/><stop offset="0.997" stop-color="#f5b892"/></linearGradient><linearGradient id="n5" gradientUnits="userSpaceOnUse" x1="2188" x2="2378"><stop offset="0.003" stop-color="#abfcbd"/><stop offset="0.539" stop-color="#fffdc5"/><stop offset="0.934" stop-color="#f6bf9a"/><stop offset="0.997" stop-color="#f5b894"/></linearGradient><linearGradient id="n6" gradientUnits="userSpaceOnUse" x1="2188" x2="2378"><stop offset="0.003" stop-color="#abfcc0"/><stop offset="0.539" stop-color="#fffcc8"/><stop offset="0.934" stop-color="#f6bf9c"/><stop offset="0.997" stop-color="#f5b797"/></linearGradient><linearGradient id="n7" gradientUnits="userSpaceOnUse" x1="2188" x2="2378"><stop offset="0.003" stop-color="#abfcc3"/><stop offset="0.539" stop-color="#fffccb"/><stop offset="0.934" stop-color="#f6be9e"/><stop offset="0.997" stop-color="#f5b799"/></linearGradient><linearGradient id="n8" gradientUnits="userSpaceOnUse" x1="2188" x2="2378"><stop offset="0.003" stop-color="#abfcc6"/><stop offset="0.534" stop-color="#fffdcf"/><stop offset="0.924" stop-color="#f6bfa2"/><stop offset="0.997" stop-color="#f5b69b"/></linearGradient><linearGradient id="n9" gradientUnits="userSpaceOnUse" x1="2188" x2="2378"><stop offset="0.003" stop-color="#abfcc9"/><stop offset="0.534" stop-color="#fffdd2"/><stop offset="0.924" stop-color="#f6bfa4"/><stop offset="0.997" stop-color="#f5b69e"/></linearGradient><linearGradient id="n10" gradientUnits="userSpaceOnUse" x1="2188" x2="2378"><stop offset="0.003" stop-color="#abfccc"/><stop offset="0.529" stop-color="#fffdd6"/><stop offset="0.913" stop-color="#f6c0a8"/><stop offset="0.997" stop-color="#f5b6a0"/></linearGradient><linearGradient id="n11" gradientUnits="userSpaceOnUse" x1="2188" x2="2378"><stop offset="0.003" stop-color="#abfccf"/><stop offset="0.529" stop-color="#fffdd9"/><stop offset="0.913" stop-color="#f6bfaa"/><stop offset="0.997" stop-color="#f5b5a2"/></linearGradient><linearGradient id="n12" gradientUnits="userSpaceOnUse" x1="2188" x2="2378"><stop offset="0.003" stop-color="#abfdd2"/><stop offset="0.529" stop-color="#fffddc"/><stop offset="0.913" stop-color="#f6bfac"/><stop offset="0.997" stop-color="#f5b5a5"/></linearGradient><linearGradient id="n13" gradientUnits="userSpaceOnUse" x1="2188" x2="2378"><stop offset="0.003" stop-color="#abfdd5"/><stop offset="0.524" stop-color="#fffde0"/><stop offset="0.903" stop-color="#f6c0b0"/><stop offset="0.997" stop-color="#f5b4a7"/></linearGradient><linearGradient id="n14" gradientUnits="userSpaceOnUse" x1="2188" x2="2378"><stop offset="0.003" stop-color="#abfdd7"/><stop offset="0.524" stop-color="#fffde3"/><stop offset="0.903" stop-color="#f6bfb2"/><stop offset="0.997" stop-color="#f5b4a9"/></linearGradient><linearGradient id="n15" gradientUnits="userSpaceOnUse" x1="2188" x2="2378"><stop offset="0.003" stop-color="#abfdda"/><stop offset="0.518" stop-color="#fffee7"/><stop offset="0.892" stop-color="#f6c0b6"/><stop offset="0.997" stop-color="#f5b3ac"/></linearGradient><linearGradient id="n16" gradientUnits="userSpaceOnUse" x1="2188" x2="2378"><stop offset="0.003" stop-color="#abfddd"/><stop offset="0.518" stop-color="#fffeea"/><stop offset="0.892" stop-color="#f6c0b8"/><stop offset="0.997" stop-color="#f5b3ae"/></linearGradient><linearGradient id="n17" gradientUnits="userSpaceOnUse" x1="2188" x2="2378"><stop offset="0.003" stop-color="#abfde0"/><stop offset="0.518" stop-color="#fffded"/><stop offset="0.892" stop-color="#f6bfba"/><stop offset="0.997" stop-color="#f5b2b0"/></linearGradient><linearGradient id="n18" gradientUnits="userSpaceOnUse" x1="2188" x2="2378"><stop offset="0.003" stop-color="#abfde3"/><stop offset="0.513" stop-color="#fffef1"/><stop offset="0.882" stop-color="#f7c0be"/><stop offset="0.997" stop-color="#f5b2b2"/></linearGradient><linearGradient id="n19" gradientUnits="userSpaceOnUse" x1="2188" x2="2378"><stop offset="0.003" stop-color="#abfde6"/><stop offset="0.513" stop-color="#fffef4"/><stop offset="0.882" stop-color="#f7c0c0"/><stop offset="0.997" stop-color="#f5b2b5"/></linearGradient><linearGradient id="n20" gradientUnits="userSpaceOnUse" x1="2188" x2="2378"><stop offset="0.003" stop-color="#abfde9"/><stop offset="0.508" stop-color="#fffef8"/><stop offset="0.871" stop-color="#f7c1c4"/><stop offset="0.997" stop-color="#f5b1b7"/></linearGradient><linearGradient id="n21" gradientUnits="userSpaceOnUse" x1="2188" x2="2378"><stop offset="0.003" stop-color="#abfdec"/><stop offset="0.508" stop-color="#fffefb"/><stop offset="0.871" stop-color="#f7c0c6"/><stop offset="0.997" stop-color="#f5b1b9"/></linearGradient><linearGradient id="n22" gradientUnits="userSpaceOnUse" x1="2188" x2="2378"><stop offset="0.003" stop-color="#abfdef"/><stop offset="0.508" stop-color="#fffefe"/><stop offset="0.871" stop-color="#f7c0c8"/><stop offset="0.997" stop-color="#f5b0bb"/></linearGradient><linearGradient id="n23" gradientUnits="userSpaceOnUse" x1="2188" x2="2378"><stop offset="0.003" stop-color="#abfdf2"/><stop offset="0.513" stop-color="#fffbff"/><stop offset="0.903" stop-color="#f6bbc7"/><stop offset="0.997" stop-color="#f5b0bd"/></linearGradient><linearGradient id="n24" gradientUnits="userSpaceOnUse" x1="2188" x2="2378"><stop offset="0.003" stop-color="#abfdf5"/><stop offset="0.497" stop-color="#fbf8fe"/><stop offset="0.587" stop-color="#ffedf5"/><stop offset="0.992" stop-color="#f5b0c0"/><stop offset="0.997" stop-color="#f5afc0"/></linearGradient><linearGradient id="n25" gradientUnits="userSpaceOnUse" x1="2188" x2="2378"><stop offset="0.003" stop-color="#abfdf8"/><stop offset="0.529" stop-color="#fdf4fe"/><stop offset="0.997" stop-color="#f5afc2"/></linearGradient><linearGradient id="n26" gradientUnits="userSpaceOnUse" x1="2188" x2="2378"><stop offset="0.003" stop-color="#abfdfb"/><stop offset="0.587" stop-color="#ffecfb"/><stop offset="0.992" stop-color="#f5afc5"/><stop offset="0.997" stop-color="#f5aec4"/></linearGradient><linearGradient id="n27" gradientUnits="userSpaceOnUse" x1="2188" x2="2378"><stop offset="0.003" stop-color="#aafcfe"/><stop offset="0.608" stop-color="#fee7fa"/><stop offset="0.997" stop-color="#f5aec6"/></linearGradient><linearGradient id="n28" gradientUnits="userSpaceOnUse" x1="2188" x2="2378"><stop offset="0.003" stop-color="#a8f9fd"/><stop offset="0.624" stop-color="#fde4fa"/><stop offset="0.997" stop-color="#f5adc8"/></linearGradient><linearGradient id="n29" gradientUnits="userSpaceOnUse" x1="2188" x2="2378"><stop offset="0.003" stop-color="#a6f6fd"/><stop offset="0.639" stop-color="#fde1fa"/><stop offset="0.997" stop-color="#f5adcb"/></linearGradient><linearGradient id="n30" gradientUnits="userSpaceOnUse" x1="2188" x2="2378"><stop offset="0.003" stop-color="#a4f3fd"/><stop offset="0.661" stop-color="#fcdcf9"/><stop offset="0.997" stop-color="#f5accd"/></linearGradient><linearGradient id="n31" gradientUnits="userSpaceOnUse" x1="2188" x2="2378"><stop offset="0.003" stop-color="#a2f0fd"/><stop offset="0.676" stop-color="#fcd9f9"/><stop offset="0.997" stop-color="#f5accf"/></linearGradient><linearGradient id="n32" gradientUnits="userSpaceOnUse" x1="2188" x2="2378"><stop offset="0.003" stop-color="#a0edfc"/><stop offset="0.692" stop-color="#fbd6f9"/><stop offset="0.997" stop-color="#f5abd1"/></linearGradient><linearGradient id="n33" gradientUnits="userSpaceOnUse" x1="2188" x2="2378"><stop offset="0.003" stop-color="#9eeafc"/><stop offset="0.713" stop-color="#fbd2f8"/><stop offset="0.997" stop-color="#f5abd3"/></linearGradient><linearGradient id="n34" gradientUnits="userSpaceOnUse" x1="2188" x2="2378"><stop offset="0.003" stop-color="#9ce7fc"/><stop offset="0.729" stop-color="#facff8"/><stop offset="0.997" stop-color="#f5abd5"/></linearGradient><linearGradient id="n35" gradientUnits="userSpaceOnUse" x1="2188" x2="2378"><stop offset="0.003" stop-color="#9ae4fc"/><stop offset="0.745" stop-color="#faccf9"/><stop offset="0.997" stop-color="#f5aad8"/></linearGradient><linearGradient id="n36" gradientUnits="userSpaceOnUse" x1="2188" x2="2378"><stop offset="0.003" stop-color="#98e2fc"/><stop offset="0.766" stop-color="#f9c8f8"/><stop offset="0.997" stop-color="#f5aada"/></linearGradient><linearGradient id="n37" gradientUnits="userSpaceOnUse" x1="2188" x2="2378"><stop offset="0.003" stop-color="#96dffb"/><stop offset="0.782" stop-color="#f9c6f8"/><stop offset="0.997" stop-color="#f5a9dc"/></linearGradient><linearGradient id="n38" gradientUnits="userSpaceOnUse" x1="2188" x2="2378"><stop offset="0.003" stop-color="#95ddfb"/><stop offset="0.797" stop-color="#f8c3f8"/><stop offset="0.997" stop-color="#f5a9de"/></linearGradient><linearGradient id="n39" gradientUnits="userSpaceOnUse" x1="2188" x2="2378"><stop offset="0.003" stop-color="#93dafb"/><stop offset="0.818" stop-color="#f8bff7"/><stop offset="0.997" stop-color="#f5a8e0"/></linearGradient><linearGradient id="n40" gradientUnits="userSpaceOnUse" x1="2188" x2="2378"><stop offset="0.003" stop-color="#91d8fb"/><stop offset="0.834" stop-color="#f8bcf7"/><stop offset="0.997" stop-color="#f5a8e2"/></linearGradient><linearGradient id="n41" gradientUnits="userSpaceOnUse" x1="2188" x2="2378"><stop offset="0.003" stop-color="#8fd5fb"/><stop offset="0.850" stop-color="#f7baf7"/><stop offset="0.997" stop-color="#f5a7e5"/></linearGradient><linearGradient id="n42" gradientUnits="userSpaceOnUse" x1="2188" x2="2378"><stop offset="0.003" stop-color="#8ed3fb"/><stop offset="0.871" stop-color="#f7b6f7"/><stop offset="0.997" stop-color="#f5a6e7"/></linearGradient><linearGradient id="n43" gradientUnits="userSpaceOnUse" x1="2188" x2="2378"><stop offset="0.003" stop-color="#8cd0fa"/><stop offset="0.887" stop-color="#f7b4f7"/><stop offset="0.997" stop-color="#f5a6e9"/></linearGradient><linearGradient id="n44" gradientUnits="userSpaceOnUse" x1="2188" x2="2378"><stop offset="0.003" stop-color="#8bcefa"/><stop offset="0.903" stop-color="#f6b1f7"/><stop offset="0.997" stop-color="#f5a5eb"/></linearGradient></defs><rect x="2188" y="808" width="190" height="4" fill="url(#n0)"/><rect x="2188" y="812" width="190" height="4" fill="url(#n1)"/><rect x="2188" y="816" width="190" height="4" fill="url(#n2)"/><rect x="2188" y="820" width="190" height="4" fill="url(#n3)"/><rect x="2188" y="824" width="190" height="4" fill="url(#n4)"/><rect x="2188" y="828" width="190" height="4" fill="url(#n5)"/><rect x="2188" y="832" width="190" height="4" fill="url(#n6)"/><rect x="2188" y="836" width="190" height="4" fill="url(#n7)"/><rect x="2188" y="840" width="190" height="4" fill="url(#n8)"/><rect x="2188" y="844" width="190" height="4" fill="url(#n9)"/><rect x="2188" y="848" width="190" height="4" fill="url(#n10)"/><rect x="2188" y="852" width="190" height="4" fill="url(#n11)"/><rect x="2188" y="856" width="190" height="4" fill="url(#n12)"/><rect x="2188" y="860" width="190" height="4" fill="url(#n13)"/><rect x="2188" y="864" width="190" height="4" fill="url(#n14)"/><rect x="2188" y="868" width="190" height="4" fill="url(#n15)"/><rect x="2188" y="872" width="190" height="4" fill="url(#n16)"/><rect x="2188" y="876" width="190" height="4" fill="url(#n17)"/><rect x="2188" y="880" width="190" height="4" fill="url(#n18)"/><rect x="2188" y="884" width="190" height="4" fill="url(#n19)"/><rect x="2188" y="888" width="190" height="4" fill="url(#n20)"/><rect x="2188" y="892" width="190" height="4" fill="url(#n21)"/><rect x="2188" y="896" width="190" height="4" fill="url(#n22)"/><rect x="2188" y="900" width="190" height="4" fill="url(#n23)"/><rect x="2188" y="904" width="190" height="4" fill="url(#n24)"/><rect x="2188" y="908" width="190" height="4" fill="url(#n25)"/><rect x="2188" y="912" width="190" height="4" fill="url(#n26)"/><rect x="2188" y="916" width="190" height="4" fill="url(#n27)"/><rect x="2188" y="920" width="190" height="4" fill="url(#n28)"/><rect x="2188" y="924" width="190" height="4" fill="url(#n29)"/><rect x="2188" y="928" width="190" height="4" fill="url(#n30)"/><rect x="2188" y="932" width="190" height="4" fill="url(#n31)"/><rect x="2188" y="936" width="190" height="4" fill="url(#n32)"/><rect x="2188" y="940" width="190" height="4" fill="url(#n33)"/><rect x="2188" y="944" width="190" height="4" fill="url(#n34)"/><rect x="2188" y="948" width="190" height="4" fill="url(#n35)"/><rect x="2188" y="952" width="190" height="4" fill="url(#n36)"/><rect x="2188" y="956" width="190" height="4" fill="url(#n37)"/><rect x="2188" y="960" width="190" height="4" fill="url(#n38)"/><rect x="2188" y="964" width="190" height="4" fill="url(#n39)"/><rect x="2188" y="968" width="190" height="4" fill="url(#n40)"/><rect x="2188" y="972" width="190" height="4" fill="url(#n41)"/><rect x="2188" y="976" width="190" height="4" fill="url(#n42)"/><rect x="2188" y="980" width="190" height="4" fill="url(#n43)"/><rect x="2188" y="984" width="190" height="4" fill="url(#n44)"/></svg>
<div style="position:absolute;left:2271px;top:887px;width:20.5px;height:20.5px;background:#f4f4f4;border:2.6px solid #000;box-sizing:border-box"></div>
<svg style="position:absolute;left:0;top:0" width="2560" height="1375"><g fill="none" stroke="#fff" stroke-width="2.6"><rect x="1878.5" y="458.0" width="18.6" height="18.6"/><rect x="1884.0" y="455.3" width="18.6" height="18.6"/><rect x="1891.8" y="465.1" width="18.6" height="18.6"/><rect x="1905.0" y="464.7" width="18.6" height="18.6"/><rect x="1903.3" y="479.9" width="18.6" height="18.6"/><rect x="1926.1" y="471.3" width="18.6" height="18.6"/><rect x="1926.9" y="489.3" width="18.6" height="18.6"/><rect x="1939.3" y="465.8" width="18.6" height="18.6"/><rect x="1950.3" y="466.6" width="18.6" height="18.6"/><rect x="1958.3" y="468.9" width="18.6" height="18.6"/><rect x="1969.9" y="475.3" width="18.6" height="18.6"/><rect x="1979.3" y="476.3" width="18.6" height="18.6"/><rect x="1944.1" y="488.3" width="18.6" height="18.6"/><rect x="2020.7" y="469.7" width="18.6" height="18.6"/><rect x="1898.8" y="501.0" width="18.6" height="18.6"/><rect x="1919.1" y="508.0" width="18.6" height="18.6"/><rect x="1883.3" y="508.8" width="18.6" height="18.6"/><rect x="1874.6" y="516.6" width="18.6" height="18.6"/><rect x="1879.3" y="526.8" width="18.6" height="18.6"/><rect x="1908.3" y="523.6" width="18.6" height="18.6"/><rect x="1927.7" y="522.9" width="18.6" height="18.6"/><rect x="1951.9" y="516.6" width="18.6" height="18.6"/><rect x="1878.8" y="544.7" width="18.6" height="18.6"/><rect x="1899.7" y="543.3" width="18.6" height="18.6"/><rect x="1887.3" y="574.8" width="18.6" height="18.6"/><rect x="1893.2" y="576.1" width="18.6" height="18.6"/><rect x="1910.2" y="595.8" width="18.6" height="18.6"/><rect x="1922.6" y="582.0" width="18.6" height="18.6"/><rect x="1901.3" y="486.3" width="18.6" height="18.6"/><rect x="1910.3" y="471.3" width="18.6" height="18.6"/><rect x="1916.3" y="493.3" width="18.6" height="18.6"/><rect x="1931.3" y="479.3" width="18.6" height="18.6"/><rect x="1891.3" y="496.3" width="18.6" height="18.6"/><rect x="1961.3" y="491.3" width="18.6" height="18.6"/><rect x="1923.3" y="584.8" width="18.6" height="18.6"/></g><g fill="#000"><rect x="1904" y="507" width="11" height="2"/><rect x="1902" y="526" width="5" height="2"/><rect x="1909" y="526" width="4" height="2"/></g></svg>
<div style="position:absolute;left:1682px;top:357.5px;width:704.5999999999999px;height:2.0px;background:#a6a6a6"></div>
<div style="position:absolute;left:1675px;top:998.0px;width:711.5999999999999px;height:2.0px;background:#a6a6a6"></div>
<div style="position:absolute;left:1682.0px;top:357.5px;width:2.0px;height:649.5px;background:#a6a6a6"></div>
<div style="position:absolute;left:2384.6px;top:357.5px;width:2.0px;height:642.5px;background:#a6a6a6"></div>
<div style="position:absolute;left:1675px;top:998.0px;width:8px;height:2.0px;background:#a6a6a6"></div>
<div style="position:absolute;left:1663.42px;top:990.14px;font-size:19.91px;line-height:19.91px;font-weight:normal;font-style:normal;color:#dcdcdc;white-space:nowrap;">0</div>
<div style="position:absolute;left:1675px;top:946.8px;width:8px;height:2.0px;background:#a6a6a6"></div>
<div style="position:absolute;left:1636.05px;top:938.94px;font-size:19.91px;line-height:19.91px;font-weight:normal;font-style:normal;color:#dcdcdc;white-space:nowrap;">0.05</div>
<div style="position:absolute;left:1675px;top:895.6px;width:8px;height:2.0px;background:#a6a6a6"></div>
<div style="position:absolute;left:1647.12px;top:887.74px;font-size:19.91px;line-height:19.91px;font-weight:normal;font-style:normal;color:#dcdcdc;white-space:nowrap;">0.1</div>
<div style="position:absolute;left:1675px;top:844.4px;width:8px;height:2.0px;background:#a6a6a6"></div>
<div style="position:absolute;left:1636.05px;top:836.54px;font-size:19.91px;line-height:19.91px;font-weight:normal;font-style:normal;color:#dcdcdc;white-space:nowrap;">0.15</div>
<div style="position:absolute;left:1675px;top:793.2px;width:8px;height:2.0px;background:#a6a6a6"></div>
<div style="position:absolute;left:1647.12px;top:785.34px;font-size:19.91px;line-height:19.91px;font-weight:normal;font-style:normal;color:#dcdcdc;white-space:nowrap;">0.2</div>
<div style="position:absolute;left:1675px;top:742.0px;width:8px;height:2.0px;background:#a6a6a6"></div>
<div style="position:absolute;left:1636.05px;top:734.14px;font-size:19.91px;line-height:19.91px;font-weight:normal;font-style:normal;color:#dcdcdc;white-space:nowrap;">0.25</div>
<div style="position:absolute;left:1675px;top:690.8px;width:8px;height:2.0px;background:#a6a6a6"></div>
<div style="position:absolute;left:1647.12px;top:682.94px;font-size:19.91px;line-height:19.91px;font-weight:normal;font-style:normal;color:#dcdcdc;white-space:nowrap;">0.3</div>
<div style="position:absolute;left:1675px;top:639.5999999999999px;width:8px;height:2.0px;background:#a6a6a6"></div>
<div style="position:absolute;left:1636.05px;top:631.74px;font-size:19.91px;line-height:19.91px;font-weight:normal;font-style:normal;color:#dcdcdc;white-space:nowrap;">0.35</div>
<div style="position:absolute;left:1675px;top:588.4px;width:8px;height:2.0px;background:#a6a6a6"></div>
<div style="position:absolute;left:1646.81px;top:580.54px;font-size:19.91px;line-height:19.91px;font-weight:normal;font-style:normal;color:#dcdcdc;white-space:nowrap;">0.4</div>
<div style="position:absolute;left:1675px;top:537.2px;width:8px;height:2.0px;background:#a6a6a6"></div>
<div style="position:absolute;left:1636.05px;top:529.34px;font-size:19.91px;line-height:19.91px;font-weight:normal;font-style:normal;color:#dcdcdc;white-space:nowrap;">0.45</div>
<div style="position:absolute;left:1675px;top:486.0px;width:8px;height:2.0px;background:#a6a6a6"></div>
<div style="position:absolute;left:1647.12px;top:478.14px;font-size:19.91px;line-height:19.91px;font-weight:normal;font-style:normal;color:#dcdcdc;white-space:nowrap;">0.5</div>
<div style="position:absolute;left:1675px;top:434.79999999999995px;width:8px;height:2.0px;background:#a6a6a6"></div>
<div style="position:absolute;left:1636.05px;top:426.94px;font-size:19.91px;line-height:19.91px;font-weight:normal;font-style:normal;color:#dcdcdc;white-space:nowrap;">0.55</div>
<div style="position:absolute;left:1675px;top:383.5999999999999px;width:8px;height:2.0px;background:#a6a6a6"></div>
<div style="position:absolute;left:1647.12px;top:375.74px;font-size:19.91px;line-height:19.91px;font-weight:normal;font-style:normal;color:#dcdcdc;white-space:nowrap;">0.6</div>
<div style="position:absolute;left:1682.0px;top:999px;width:2.0px;height:8px;background:#a6a6a6"></div>
<div style="position:absolute;left:1677.40px;top:1012.74px;font-size:19.91px;line-height:19.91px;font-weight:normal;font-style:normal;color:#dcdcdc;white-space:nowrap;">0</div>
<div style="position:absolute;left:1794.15px;top:999px;width:2.0px;height:8px;background:#a6a6a6"></div>
<div style="position:absolute;left:1781.40px;top:1012.74px;font-size:19.91px;line-height:19.91px;font-weight:normal;font-style:normal;color:#dcdcdc;white-space:nowrap;">0.1</div>
<div style="position:absolute;left:1906.3px;top:999px;width:2.0px;height:8px;background:#a6a6a6"></div>
<div style="position:absolute;left:1893.55px;top:1012.74px;font-size:19.91px;line-height:19.91px;font-weight:normal;font-style:normal;color:#dcdcdc;white-space:nowrap;">0.2</div>
<div style="position:absolute;left:2018.45px;top:999px;width:2.0px;height:8px;background:#a6a6a6"></div>
<div style="position:absolute;left:2005.70px;top:1012.74px;font-size:19.91px;line-height:19.91px;font-weight:normal;font-style:normal;color:#dcdcdc;white-space:nowrap;">0.3</div>
<div style="position:absolute;left:2130.6px;top:999px;width:2.0px;height:8px;background:#a6a6a6"></div>
<div style="position:absolute;left:2117.69px;top:1012.74px;font-size:19.91px;line-height:19.91px;font-weight:normal;font-style:normal;color:#dcdcdc;white-space:nowrap;">0.4</div>
<div style="position:absolute;left:2242.75px;top:999px;width:2.0px;height:8px;background:#a6a6a6"></div>
<div style="position:absolute;left:2230.00px;top:1012.74px;font-size:19.91px;line-height:19.91px;font-weight:normal;font-style:normal;color:#dcdcdc;white-space:nowrap;">0.5</div>
<div style="position:absolute;left:2354.9px;top:999px;width:2.0px;height:8px;background:#a6a6a6"></div>
<div style="position:absolute;left:2342.15px;top:1012.74px;font-size:19.91px;line-height:19.91px;font-weight:normal;font-style:normal;color:#dcdcdc;white-space:nowrap;">0.6</div>
<div style="position:absolute;left:1622px;top:1067px;width:777px;height:163px;background:#000"></div>
<div style="position:absolute;left:1645.5px;top:1073.8px;width:81.5px;height:127.0px;background:#f4f4f4"></div>
<div style="position:absolute;left:1647.1px;top:1075.4px;width:78.30000000000018px;height:61.59999999999991px;background:#000"></div>
<div style="position:absolute;left:1647.1px;top:1137px;width:78.30000000000018px;height:62.200000000000045px;background:#ffffff"></div>
<div style="position:absolute;left:1665.50px;top:1207.03px;font-size:16.50px;line-height:16.50px;font-weight:normal;font-style:normal;color:#ececec;white-space:nowrap;">White</div>
<div style="position:absolute;left:1739.3px;top:1073.8px;width:81.5px;height:127.0px;background:#f4f4f4"></div>
<div style="position:absolute;left:1740.8999999999999px;top:1075.4px;width:78.30000000000018px;height:61.59999999999991px;background:#000"></div>
<div style="position:absolute;left:1740.8999999999999px;top:1137px;width:78.30000000000018px;height:62.200000000000045px;background:#a89c8a"></div>
<div style="position:absolute;left:1753.40px;top:1207.03px;font-size:16.50px;line-height:16.50px;font-weight:normal;font-style:normal;color:#ececec;white-space:nowrap;">Color 1</div>
<div style="position:absolute;left:1833.1px;top:1073.8px;width:81.5px;height:127.0px;background:#f4f4f4"></div>
<div style="position:absolute;left:1834.6999999999998px;top:1075.4px;width:78.30000000000018px;height:61.59999999999991px;background:#000"></div>
<div style="position:absolute;left:1834.6999999999998px;top:1137px;width:78.30000000000018px;height:62.200000000000045px;background:#a69078"></div>
<div style="position:absolute;left:1847.20px;top:1207.03px;font-size:16.50px;line-height:16.50px;font-weight:normal;font-style:normal;color:#ececec;white-space:nowrap;">Color 2</div>
<div style="position:absolute;left:1926.9px;top:1073.8px;width:81.5px;height:127.0px;background:#f4f4f4"></div>
<div style="position:absolute;left:1928.5px;top:1075.4px;width:78.30000000000018px;height:61.59999999999991px;background:#000"></div>
<div style="position:absolute;left:1928.5px;top:1137px;width:78.30000000000018px;height:62.200000000000045px;background:#8a9068"></div>
<div style="position:absolute;left:1941.00px;top:1207.03px;font-size:16.50px;line-height:16.50px;font-weight:normal;font-style:normal;color:#ececec;white-space:nowrap;">Color 3</div>
<div style="position:absolute;left:2020.7px;top:1073.8px;width:81.49999999999977px;height:127.0px;background:#f4f4f4"></div>
<div style="position:absolute;left:2022.3px;top:1075.4px;width:78.29999999999995px;height:61.59999999999991px;background:#000"></div>
<div style="position:absolute;left:2022.3px;top:1137px;width:78.29999999999995px;height:62.200000000000045px;background:#4a5838"></div>
<div style="position:absolute;left:2034.67px;top:1207.03px;font-size:16.50px;line-height:16.50px;font-weight:normal;font-style:normal;color:#ececec;white-space:nowrap;">Color 4</div>
<div style="position:absolute;left:2114.5px;top:1073.8px;width:81.5px;height:127.0px;background:#f4f4f4"></div>
<div style="position:absolute;left:2116.1px;top:1075.4px;width:78.30000000000018px;height:61.59999999999991px;background:#000"></div>
<div style="position:absolute;left:2116.1px;top:1137px;width:78.30000000000018px;height:62.200000000000045px;background:#5a6468"></div>
<div style="position:absolute;left:2128.60px;top:1207.03px;font-size:16.50px;line-height:16.50px;font-weight:normal;font-style:normal;color:#ececec;white-space:nowrap;">Color 5</div>
<div style="position:absolute;left:2208.3px;top:1073.8px;width:81.5px;height:127.0px;background:#f4f4f4"></div>
<div style="position:absolute;left:2209.9px;top:1075.4px;width:78.30000000000018px;height:61.59999999999991px;background:#000"></div>
<div style="position:absolute;left:2209.9px;top:1137px;width:78.30000000000018px;height:62.200000000000045px;background:#a88070"></div>
<div style="position:absolute;left:2222.40px;top:1207.03px;font-size:16.50px;line-height:16.50px;font-weight:normal;font-style:normal;color:#ececec;white-space:nowrap;">Color 6</div>
<div style="position:absolute;left:2302.1px;top:1073.8px;width:81.5px;height:127.0px;background:#f4f4f4"></div>
<div style="position:absolute;left:2303.7px;top:1075.4px;width:78.30000000000018px;height:61.59999999999991px;background:#000"></div>
<div style="position:absolute;left:2303.7px;top:1137px;width:78.30000000000018px;height:62.200000000000045px;background:#5e5448"></div>
<div style="position:absolute;left:2316.20px;top:1207.03px;font-size:16.50px;line-height:16.50px;font-weight:normal;font-style:normal;color:#ececec;white-space:nowrap;">Color 7</div>
<div style="position:absolute;left:2395.6px;top:1073.8px;width:3.400000000000091px;height:127.0px;background:#f4f4f4"></div>
<div style="position:absolute;left:2397.2px;top:1075.4px;width:1.800000000000182px;height:61.59999999999991px;background:#000"></div>
<div style="position:absolute;left:2397.2px;top:1137px;width:1.800000000000182px;height:62.200000000000045px;background:#6e6c88"></div>
<div style="position:absolute;left:1604.5px;top:1094px;width:60px;height:16px;line-height:16px;text-align:center;transform:rotate(-90deg);font-size:16.5px;color:#ececec;white-space:nowrap">Actual</div>
<div style="position:absolute;left:1604.5px;top:1165px;width:60px;height:16px;line-height:16px;text-align:center;transform:rotate(-90deg);font-size:16.5px;color:#ececec;white-space:nowrap">Target</div>
<div style="position:absolute;left:1622px;top:1230px;width:777px;height:24px;background:#5e5e5e"></div>
<div style="position:absolute;left:1623px;top:1232px;width:20px;height:20px;border-radius:4px;background:#8a8a8a"></div>
<svg style="position:absolute;left:1623px;top:1232px" width="20" height="20"><polygon points="13,4 6,10 13,16" fill="#555"/></svg>
<div style="position:absolute;left:1646px;top:1233px;width:104px;height:18px;border-radius:9px;background:#4a4a4a"></div>
<div style="position:absolute;left:2378px;top:1232px;width:20px;height:20px;border-radius:4px;background:#8a8a8a"></div>
<svg style="position:absolute;left:2378px;top:1232px" width="20" height="20"><polygon points="7,4 14,10 7,16" fill="#555"/></svg>
<div style="position:absolute;left:0px;top:1254px;width:1921px;height:98px;background:#3a3a3a"></div>
<div style="position:absolute;left:0;top:1254px;width:98px;height:98px;border-radius:0 8px 0 0;background:linear-gradient(#222,#2e2e2e 50%,#343434)"></div>
<div style="position:absolute;left:9px;top:1264px;width:79px;height:48px;border-radius:7px;background:#fff;box-shadow:inset 2px 3px 0 #d8d8d8"></div>
<div style="position:absolute;left:19.00px;top:1325.54px;font-size:20.63px;line-height:20.63px;font-weight:bold;font-style:normal;color:#ffffff;white-space:nowrap;transform:scaleX(1.0787);transform-origin:0 0;">White</div>
<div style="position:absolute;left:102px;top:1254px;width:99px;height:98px;border-radius:8px 8px 0 0;background:linear-gradient(#a8a8a8,#8c8c8c 25%,#6e6e6e 55%,#7a7a7a)"></div>
<div style="position:absolute;left:113px;top:1264px;width:78px;height:48px;border-radius:7px;background:#aa9e88;box-shadow:inset 2px 3px 2px rgba(0,0,0,.25)"></div>
<div style="position:absolute;left:115.91px;top:1325.54px;font-size:20.63px;line-height:20.63px;font-weight:bold;font-style:normal;color:#2c2c2c;white-space:nowrap;">Color 1</div>
<div style="position:absolute;left:205px;top:1254px;width:99px;height:98px;border-radius:8px 8px 0 0;background:linear-gradient(#a8a8a8,#8c8c8c 25%,#6e6e6e 55%,#7a7a7a)"></div>
<div style="position:absolute;left:216px;top:1264px;width:78px;height:48px;border-radius:7px;background:#ad9a80;box-shadow:inset 2px 3px 2px rgba(0,0,0,.25)"></div>
<div style="position:absolute;left:218.91px;top:1325.54px;font-size:20.63px;line-height:20.63px;font-weight:bold;font-style:normal;color:#2c2c2c;white-space:nowrap;">Color 2</div>
<div style="position:absolute;left:308px;top:1254px;width:99px;height:98px;border-radius:8px 8px 0 0;background:linear-gradient(#a8a8a8,#8c8c8c 25%,#6e6e6e 55%,#7a7a7a)"></div>
<div style="position:absolute;left:319px;top:1264px;width:78px;height:48px;border-radius:7px;background:#939c74;box-shadow:inset 2px 3px 2px rgba(0,0,0,.25)"></div>
<div style="position:absolute;left:321.91px;top:1325.54px;font-size:20.63px;line-height:20.63px;font-weight:bold;font-style:normal;color:#2c2c2c;white-space:nowrap;">Color 3</div>
<div style="position:absolute;left:411px;top:1254px;width:99px;height:98px;border-radius:8px 8px 0 0;background:linear-gradient(#a8a8a8,#8c8c8c 25%,#6e6e6e 55%,#7a7a7a)"></div>
<div style="position:absolute;left:422px;top:1264px;width:78px;height:48px;border-radius:7px;background:#4e5c3a;box-shadow:inset 2px 3px 2px rgba(0,0,0,.25)"></div>
<div style="position:absolute;left:424.59px;top:1325.54px;font-size:20.63px;line-height:20.63px;font-weight:bold;font-style:normal;color:#2c2c2c;white-space:nowrap;">Color 4</div>
<div style="position:absolute;left:514px;top:1254px;width:99px;height:98px;border-radius:8px 8px 0 0;background:linear-gradient(#a8a8a8,#8c8c8c 25%,#6e6e6e 55%,#7a7a7a)"></div>
<div style="position:absolute;left:525px;top:1264px;width:78px;height:48px;border-radius:7px;background:#5c6a6c;box-shadow:inset 2px 3px 2px rgba(0,0,0,.25)"></div>
<div style="position:absolute;left:527.91px;top:1325.54px;font-size:20.63px;line-height:20.63px;font-weight:bold;font-style:normal;color:#2c2c2c;white-space:nowrap;">Color 5</div>
<div style="position:absolute;left:617px;top:1254px;width:99px;height:98px;border-radius:8px 8px 0 0;background:linear-gradient(#a8a8a8,#8c8c8c 25%,#6e6e6e 55%,#7a7a7a)"></div>
<div style="position:absolute;left:628px;top:1264px;width:78px;height:48px;border-radius:7px;background:#b08878;box-shadow:inset 2px 3px 2px rgba(0,0,0,.25)"></div>
<div style="position:absolute;left:630.91px;top:1325.54px;font-size:20.63px;line-height:20.63px;font-weight:bold;font-style:normal;color:#2c2c2c;white-space:nowrap;">Color 6</div>
<div style="position:absolute;left:720px;top:1254px;width:99px;height:98px;border-radius:8px 8px 0 0;background:linear-gradient(#a8a8a8,#8c8c8c 25%,#6e6e6e 55%,#7a7a7a)"></div>
<div style="position:absolute;left:731px;top:1264px;width:78px;height:48px;border-radius:7px;background:#665a4e;box-shadow:inset 2px 3px 2px rgba(0,0,0,.25)"></div>
<div style="position:absolute;left:734.07px;top:1325.54px;font-size:20.63px;line-height:20.63px;font-weight:bold;font-style:normal;color:#2c2c2c;white-space:nowrap;">Color 7</div>
<div style="position:absolute;left:823px;top:1254px;width:99px;height:98px;border-radius:8px 8px 0 0;background:linear-gradient(#a8a8a8,#8c8c8c 25%,#6e6e6e 55%,#7a7a7a)"></div>
<div style="position:absolute;left:834px;top:1264px;width:78px;height:48px;border-radius:7px;background:#6c6a8c;box-shadow:inset 2px 3px 2px rgba(0,0,0,.25)"></div>
<div style="position:absolute;left:836.91px;top:1325.54px;font-size:20.63px;line-height:20.63px;font-weight:bold;font-style:normal;color:#2c2c2c;white-space:nowrap;">Color 8</div>
<div style="position:absolute;left:926px;top:1254px;width:99px;height:98px;border-radius:8px 8px 0 0;background:linear-gradient(#a8a8a8,#8c8c8c 25%,#6e6e6e 55%,#7a7a7a)"></div>
<div style="position:absolute;left:937px;top:1264px;width:78px;height:48px;border-radius:7px;background:#9a8898;box-shadow:inset 2px 3px 2px rgba(0,0,0,.25)"></div>
<div style="position:absolute;left:939.91px;top:1325.54px;font-size:20.63px;line-height:20.63px;font-weight:bold;font-style:normal;color:#2c2c2c;white-space:nowrap;">Color 9</div>
<div style="position:absolute;left:1029px;top:1254px;width:99px;height:98px;border-radius:8px 8px 0 0;background:linear-gradient(#a8a8a8,#8c8c8c 25%,#6e6e6e 55%,#7a7a7a)"></div>
<div style="position:absolute;left:1040px;top:1264px;width:78px;height:48px;border-radius:7px;background:#6a4e88;box-shadow:inset 2px 3px 2px rgba(0,0,0,.25)"></div>
<div style="position:absolute;left:1037.33px;top:1325.54px;font-size:20.63px;line-height:20.63px;font-weight:bold;font-style:normal;color:#2c2c2c;white-space:nowrap;">Color 10</div>
<div style="position:absolute;left:1132px;top:1254px;width:99px;height:98px;border-radius:8px 8px 0 0;background:linear-gradient(#a8a8a8,#8c8c8c 25%,#6e6e6e 55%,#7a7a7a)"></div>
<div style="position:absolute;left:1143px;top:1264px;width:78px;height:48px;border-radius:7px;background:#b4bc88;box-shadow:inset 2px 3px 2px rgba(0,0,0,.25)"></div>
<div style="position:absolute;left:1140.74px;top:1325.54px;font-size:20.63px;line-height:20.63px;font-weight:bold;font-style:normal;color:#2c2c2c;white-space:nowrap;">Color 11</div>
<div style="position:absolute;left:1235px;top:1254px;width:99px;height:98px;border-radius:8px 8px 0 0;background:linear-gradient(#a8a8a8,#8c8c8c 25%,#6e6e6e 55%,#7a7a7a)"></div>
<div style="position:absolute;left:1246px;top:1264px;width:78px;height:48px;border-radius:7px;background:#b08878;box-shadow:inset 2px 3px 2px rgba(0,0,0,.25)"></div>
<div style="position:absolute;left:1243.17px;top:1325.54px;font-size:20.63px;line-height:20.63px;font-weight:bold;font-style:normal;color:#2c2c2c;white-space:nowrap;">Color 12</div>
<div style="position:absolute;left:1338px;top:1254px;width:99px;height:98px;border-radius:8px 8px 0 0;background:linear-gradient(#a8a8a8,#8c8c8c 25%,#6e6e6e 55%,#7a7a7a)"></div>
<div style="position:absolute;left:1349px;top:1264px;width:78px;height:48px;border-radius:7px;background:#64625c;box-shadow:inset 2px 3px 2px rgba(0,0,0,.25)"></div>
<div style="position:absolute;left:1346.17px;top:1325.54px;font-size:20.63px;line-height:20.63px;font-weight:bold;font-style:normal;color:#2c2c2c;white-space:nowrap;">Color 13</div>
<div style="position:absolute;left:1441px;top:1254px;width:99px;height:98px;border-radius:8px 8px 0 0;background:linear-gradient(#a8a8a8,#8c8c8c 25%,#6e6e6e 55%,#7a7a7a)"></div>
<div style="position:absolute;left:1452px;top:1264px;width:78px;height:48px;border-radius:7px;background:#8e6450;box-shadow:inset 2px 3px 2px rgba(0,0,0,.25)"></div>
<div style="position:absolute;left:1448.85px;top:1325.54px;font-size:20.63px;line-height:20.63px;font-weight:bold;font-style:normal;color:#2c2c2c;white-space:nowrap;">Color 14</div>
<div style="position:absolute;left:1544px;top:1254px;width:99px;height:98px;border-radius:8px 8px 0 0;background:linear-gradient(#a8a8a8,#8c8c8c 25%,#6e6e6e 55%,#7a7a7a)"></div>
<div style="position:absolute;left:1555px;top:1264px;width:78px;height:48px;border-radius:7px;background:#8c6a50;box-shadow:inset 2px 3px 2px rgba(0,0,0,.25)"></div>
<div style="position:absolute;left:1552.17px;top:1325.54px;font-size:20.63px;line-height:20.63px;font-weight:bold;font-style:normal;color:#2c2c2c;white-space:nowrap;">Color 15</div>
<div style="position:absolute;left:1647px;top:1254px;width:99px;height:98px;border-radius:8px 8px 0 0;background:linear-gradient(#a8a8a8,#8c8c8c 25%,#6e6e6e 55%,#7a7a7a)"></div>
<div style="position:absolute;left:1658px;top:1264px;width:78px;height:48px;border-radius:7px;background:#aca888;box-shadow:inset 2px 3px 2px rgba(0,0,0,.25)"></div>
<div style="position:absolute;left:1655.17px;top:1325.54px;font-size:20.63px;line-height:20.63px;font-weight:bold;font-style:normal;color:#2c2c2c;white-space:nowrap;">Color 16</div>
<div style="position:absolute;left:1750px;top:1254px;width:99px;height:98px;border-radius:8px 8px 0 0;background:linear-gradient(#a8a8a8,#8c8c8c 25%,#6e6e6e 55%,#7a7a7a)"></div>
<div style="position:absolute;left:1761px;top:1264px;width:78px;height:48px;border-radius:7px;background:#5a4842;box-shadow:inset 2px 3px 2px rgba(0,0,0,.25)"></div>
<div style="position:absolute;left:1758.33px;top:1325.54px;font-size:20.63px;line-height:20.63px;font-weight:bold;font-style:normal;color:#2c2c2c;white-space:nowrap;">Color 17</div>
<div style="position:absolute;left:1853px;top:1254px;width:99px;height:98px;border-radius:8px 8px 0 0;background:linear-gradient(#a8a8a8,#8c8c8c 25%,#6e6e6e 55%,#7a7a7a)"></div>
<div style="position:absolute;left:1864px;top:1264px;width:78px;height:48px;border-radius:7px;background:#b0ac80;box-shadow:inset 2px 3px 2px rgba(0,0,0,.25)"></div>
<div style="position:absolute;left:1861.17px;top:1325.54px;font-size:20.63px;line-height:20.63px;font-weight:bold;font-style:normal;color:#2c2c2c;white-space:nowrap;">Color 18</div>
<div style="position:absolute;left:0px;top:1352px;width:1921px;height:23px;background:#5c5c5c"></div>
<div style="position:absolute;left:1px;top:1353px;width:20px;height:21px;border-radius:4px;background:#8a8a8a"></div>
<svg style="position:absolute;left:1px;top:1353px" width="20" height="21"><polygon points="13,4 6,10.5 13,17" fill="#555"/></svg>
<div style="position:absolute;left:25px;top:1353px;width:620px;height:20px;border-radius:10px;background:#474747"></div>
<div style="position:absolute;left:1900px;top:1353px;width:19px;height:21px;border-radius:4px;background:#8a8a8a"></div>
<svg style="position:absolute;left:1900px;top:1353px" width="20" height="21"><polygon points="6,4 13,10.5 6,17" fill="#555"/></svg>
<div style="position:absolute;left:1921px;top:1254px;width:639px;height:121px;background:#3a3a3a"></div>
<div style="position:absolute;left:1922px;top:1254px;width:96px;height:37px;border-radius:7px 7px 0 0;background:linear-gradient(#b2b2b2,#9a9a9a 40%,#7c7c7c)"></div>
<div style="position:absolute;left:1922px;top:1292px;width:96px;height:83px;border-radius:0 0 7px 7px;background:linear-gradient(#b0b0b0,#909090 50%,#7a7a7a)"></div>
<div style="position:absolute;left:1956px;top:1258px;width:29px;height:29px;border-radius:50%;background:linear-gradient(#888,#a8a8a8)"></div>
<svg style="position:absolute;left:1955px;top:1260px" width="30" height="20"><polygon points="7,15 15.5,7 24,15" fill="#383838"/></svg>
<div style="position:absolute;left:1939px;top:1302px;width:62px;height:62px;border-radius:9px;box-sizing:border-box;border:5px solid #333;background:linear-gradient(#c0c0c0 50%,#a4a4a4 50%)"></div>
<div style="position:absolute;left:1957px;top:1320px;width:27px;height:27px;background:linear-gradient(#222 50%,#000 50%)"></div>
<div style="position:absolute;left:2021px;top:1254px;width:90px;height:59px;background:linear-gradient(#b2b2b2,#9a9a9a 40%,#7c7c7c)"></div>
<div style="position:absolute;left:2046px;top:1264px;width:38px;height:38px;border-radius:50%;background:linear-gradient(#8c8c8c,#b4b4b4)"></div>
<svg style="position:absolute;left:2045px;top:1263px" width="40" height="40" viewBox="-20 -20 40 40"><rect x="-8" y="-8" width="16" height="16" fill="#383838"/></svg>
<div style="position:absolute;left:2113px;top:1254px;width:87px;height:59px;background:linear-gradient(#b2b2b2,#9a9a9a 40%,#7c7c7c)"></div>
<div style="position:absolute;left:2137px;top:1264px;width:38px;height:38px;border-radius:50%;background:linear-gradient(#8c8c8c,#b4b4b4)"></div>
<svg style="position:absolute;left:2136px;top:1263px" width="40" height="40" viewBox="-20 -20 40 40"><polygon points="-5,-9 11,1 -5,11" fill="#383838"/></svg>
<div style="position:absolute;left:2202px;top:1254px;width:88px;height:59px;background:linear-gradient(#b2b2b2,#9a9a9a 40%,#7c7c7c)"></div>
<div style="position:absolute;left:2227px;top:1264px;width:38px;height:38px;border-radius:50%;background:linear-gradient(#8c8c8c,#b4b4b4)"></div>
<svg style="position:absolute;left:2226px;top:1263px" width="40" height="40" viewBox="-20 -20 40 40"><path d="M-6,-10 H-10 V10 H-6 M6,-10 H10 V10 H6" fill="none" stroke="#383838" stroke-width="3"/><rect x="-4" y="-1" width="3" height="3" fill="#383838"/><rect x="1" y="-1" width="3" height="3" fill="#383838"/></svg>
<div style="position:absolute;left:2292px;top:1254px;width:87px;height:59px;background:linear-gradient(#b2b2b2,#9a9a9a 40%,#7c7c7c)"></div>
<div style="position:absolute;left:2315px;top:1264px;width:38px;height:38px;border-radius:50%;background:linear-gradient(#8c8c8c,#b4b4b4)"></div>
<svg style="position:absolute;left:2314px;top:1263px" width="40" height="40" viewBox="-20 -20 40 40"><path d="M0,0 C-4,-6 -13,-6 -13,0 C-13,6 -4,6 0,0 C4,-6 13,-6 13,0 C13,6 4,6 0,0Z" fill="none" stroke="#383838" stroke-width="3.2"/></svg>
<div style="position:absolute;left:2380px;top:1254px;width:90px;height:59px;background:linear-gradient(#444,#383838)"></div>
<div style="position:absolute;left:2405px;top:1264px;width:38px;height:38px;border-radius:50%;background:linear-gradient(#2e2e2e,#404040)"></div>
<svg style="position:absolute;left:2404px;top:1263px" width="40" height="40" viewBox="-20 -20 40 40"><path d="M-7.5,0 A7.5,7.5 0 0 1 5,-5.6 M7.5,2 A7.5,7.5 0 0 1 -7,3.5" fill="none" stroke="#1e1e1e" stroke-width="3.4"/><polygon points="2,-9 10,-7 5,-1" fill="#1e1e1e"/><polygon points="-2,9 -10,7 -6,1" fill="#1e1e1e"/></svg>
<div style="position:absolute;left:2472px;top:1257px;width:86px;height:54px;background:#606060"></div>
<div style="position:absolute;left:2485.82px;top:1269.10px;font-size:33.43px;line-height:33.43px;font-weight:normal;font-style:normal;color:#ffffff;white-space:nowrap;transform:scaleX(1.0415);transform-origin:0 0;">123</div>
<div style="position:absolute;left:2021px;top:1316px;width:269px;height:59px;background:linear-gradient(#b0b0b0,#9c9c9c 50%,#8a8a8a)"></div>
<div style="position:absolute;left:2291px;top:1316px;width:264px;height:59px;border-radius:0 8px 0 0;background:linear-gradient(#b0b0b0,#9c9c9c 50%,#8a8a8a)"></div>
<div style="position:absolute;left:2062px;top:1326px;width:38px;height:38px;border-radius:50%;background:linear-gradient(#8c8c8c,#b4b4b4)"></div>
<div style="position:absolute;left:2484px;top:1326px;width:38px;height:38px;border-radius:50%;background:linear-gradient(#8c8c8c,#b4b4b4)"></div>
<svg style="position:absolute;left:2061px;top:1325px" width="40" height="40" viewBox="-20 -20 40 40"><path d="M-1,-10 L-9,0 L-1,10 M7,-10 L-1,0 L7,10" fill="none" stroke="#383838" stroke-width="3"/></svg>
<svg style="position:absolute;left:2483px;top:1325px" width="40" height="40" viewBox="-20 -20 40 40"><path d="M1,-10 L9,0 L1,10 M-7,-10 L1,0 L-7,10" fill="none" stroke="#383838" stroke-width="3"/></svg>
<div style="position:absolute;left:2132.38px;top:1324.27px;font-size:44.10px;line-height:44.10px;font-weight:bold;font-style:normal;color:#353535;white-space:nowrap;transform:scaleX(0.9520);transform-origin:0 0;">Back</div>
<div style="position:absolute;left:2343.99px;top:1324.67px;font-size:44.10px;line-height:44.10px;font-weight:bold;font-style:normal;color:#353535;white-space:nowrap;transform:scaleX(1.0906);transform-origin:0 0;">Next</div>
</body></html>
